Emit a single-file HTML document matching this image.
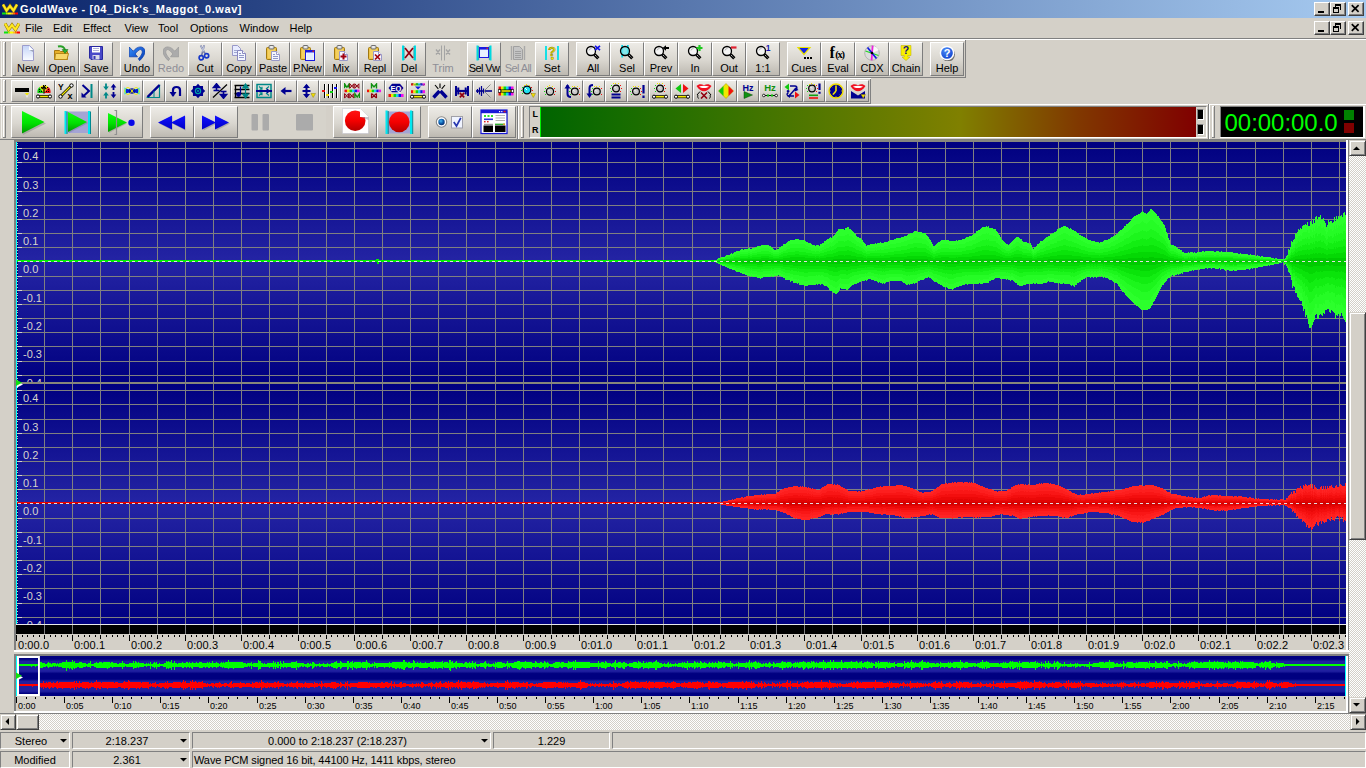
<!DOCTYPE html><html><head><meta charset="utf-8"><title>GoldWave</title><style>
html,body{margin:0;padding:0}
body{width:1366px;height:768px;overflow:hidden;position:relative;background:#D4D0C8;font-family:"Liberation Sans",sans-serif;font-size:11px;color:#000}
div,svg{position:absolute;box-sizing:border-box}
.t{white-space:nowrap;line-height:12px}
.btn{background:linear-gradient(#EDEBE6,#D9D6CF 55%,#BDB9B1);border:1px solid;border-color:#fff #7C7C7C #7C7C7C #fff}
.lbl{text-align:center;line-height:12px;white-space:nowrap}
.sunk{border:1px solid;border-color:#808080 #fff #fff #808080}
.cap{background:#D4D0C8;border:1px solid;border-color:#fff #404040 #404040 #fff;box-shadow:inset -1px -1px 0 #808080}
.sb{background:#D4D0C8;border:1px solid;border-color:#D4D0C8 #404040 #404040 #D4D0C8;box-shadow:inset 1px 1px 0 #fff,inset -1px -1px 0 #808080}
.trk{background-color:#EAE7E3;background-image:conic-gradient(#fff 25%,#D4D0C8 0 50%,#fff 0 75%,#D4D0C8 0);background-size:2px 2px}
.ax{color:#D8D4CC;font-size:11px;line-height:12px;white-space:nowrap}
.rl{font-size:11px;line-height:12px;white-space:nowrap}
.rs{font-size:9px;line-height:10px;white-space:nowrap}
</style></head><body><div style="left:0px;top:0px;width:1366px;height:18px;background:linear-gradient(90deg,#0A246A,#A6CAF0);"></div>
<svg style="left:2px;top:3px;" width="16" height="12" viewBox="0 0 16 12"><path d="M1 1.5L4.5 7.6L8 3L11.5 7.6L15 1.5" fill="none" stroke="#987800" stroke-width="3.2" stroke-linejoin="miter"/><path d="M1 1.5L4.5 7.6L8 3L11.5 7.6L15 1.5" fill="none" stroke="#FFE820" stroke-width="2.2" stroke-linejoin="miter"/><rect x="0" y="9.5" width="4" height="2" fill="#10E010"/><rect x="4" y="9.5" width="2" height="2" fill="#B0F000"/><rect x="6" y="9.5" width="3" height="2" fill="#FFFF00"/><rect x="9" y="9.5" width="2" height="2" fill="#FFC020"/><rect x="11" y="9.5" width="2" height="2" fill="#FF7000"/><rect x="13" y="9.5" width="3" height="2" fill="#FF0000"/></svg>
<div class="t " style="left:20px;top:3px;color:#fff;font-weight:bold;font-size:11px;letter-spacing:0.57px">GoldWave - [04_Dick's_Maggot_0.wav]</div>
<div class="cap" style="left:1314px;top:2px;width:16px;height:14px"></div>
<div style="left:1318px;top:11px;width:6px;height:2px;background:#000;"></div>
<div class="cap" style="left:1330px;top:2px;width:16px;height:14px"></div>
<svg style="left:1333px;top:4px;shape-rendering:crispEdges" width="10" height="10" viewBox="0 0 10 10"><path d="M2.5 0H9V6H7M2.5 0V2.5" fill="none" stroke="#000" stroke-width="0" /><rect x="2" y="0" width="6" height="2" fill="#000"/><path d="M2.5 2V3.5M7.5 1V5.5H6.5" stroke="#000" fill="none"/><rect x="0" y="3" width="6" height="2" fill="#000"/><rect x="0.5" y="4.5" width="5" height="4" fill="none" stroke="#000"/></svg>
<div class="cap" style="left:1348px;top:2px;width:16px;height:14px"></div>
<svg style="left:1351px;top:4px;" width="10" height="10" viewBox="0 0 10 10"><path d="M0.8 1.2L7.6 7.8M7.6 1.2L0.8 7.8" stroke="#000" stroke-width="1.7"/></svg>
<svg style="left:4px;top:22px;" width="16" height="12" viewBox="0 0 16 12"><path d="M1 1.5L4.5 7.6L8 3L11.5 7.6L15 1.5" fill="none" stroke="#987800" stroke-width="3.2" stroke-linejoin="miter"/><path d="M1 1.5L4.5 7.6L8 3L11.5 7.6L15 1.5" fill="none" stroke="#FFE820" stroke-width="2.2" stroke-linejoin="miter"/><rect x="0" y="9.5" width="4" height="2" fill="#10E010"/><rect x="4" y="9.5" width="2" height="2" fill="#B0F000"/><rect x="6" y="9.5" width="3" height="2" fill="#FFFF00"/><rect x="9" y="9.5" width="2" height="2" fill="#FFC020"/><rect x="11" y="9.5" width="2" height="2" fill="#FF7000"/><rect x="13" y="9.5" width="3" height="2" fill="#FF0000"/></svg>
<div class="t " style="left:25px;top:22px;line-height:12px">File</div>
<div class="t " style="left:53px;top:22px;line-height:12px">Edit</div>
<div class="t " style="left:83px;top:22px;line-height:12px">Effect</div>
<div class="t " style="left:124.5px;top:22px;line-height:12px">View</div>
<div class="t " style="left:158px;top:22px;line-height:12px">Tool</div>
<div class="t " style="left:190px;top:22px;line-height:12px">Options</div>
<div class="t " style="left:239.5px;top:22px;line-height:12px">Window</div>
<div class="t " style="left:289.5px;top:22px;line-height:12px">Help</div>
<div class="cap" style="left:1314px;top:21px;width:16px;height:14px"></div>
<div style="left:1318px;top:30px;width:6px;height:2px;background:#000;"></div>
<div class="cap" style="left:1330px;top:21px;width:16px;height:14px"></div>
<svg style="left:1333px;top:23px;shape-rendering:crispEdges" width="10" height="10" viewBox="0 0 10 10"><path d="M2.5 0H9V6H7M2.5 0V2.5" fill="none" stroke="#000" stroke-width="0" /><rect x="2" y="0" width="6" height="2" fill="#000"/><path d="M2.5 2V3.5M7.5 1V5.5H6.5" stroke="#000" fill="none"/><rect x="0" y="3" width="6" height="2" fill="#000"/><rect x="0.5" y="4.5" width="5" height="4" fill="none" stroke="#000"/></svg>
<div class="cap" style="left:1348px;top:21px;width:16px;height:14px"></div>
<svg style="left:1351px;top:23px;" width="10" height="10" viewBox="0 0 10 10"><path d="M0.8 1.2L7.6 7.8M7.6 1.2L0.8 7.8" stroke="#000" stroke-width="1.7"/></svg>
<div style="left:0px;top:38px;width:1366px;height:1px;background:#808080;"></div>
<div style="left:0px;top:39px;width:1366px;height:1px;background:#fff;"></div>
<div style="left:0px;top:40px;width:965px;height:1px;background:#fff;"></div>
<div style="left:1px;top:40px;width:1px;height:37px;background:#F4F2EE;"></div>
<div style="left:1px;top:79px;width:1px;height:24px;background:#F4F2EE;"></div>
<div style="left:1px;top:105px;width:1px;height:33px;background:#F4F2EE;"></div>
<div style="left:965px;top:40px;width:1px;height:38px;background:#808080;"></div>
<div style="left:0px;top:77px;width:966px;height:1px;background:#808080;"></div>
<div style="left:3px;top:42px;width:1px;height:34px;background:#fff;"></div>
<div style="left:5px;top:42px;width:1px;height:34px;background:#808080;"></div>
<div style="left:3px;top:42px;width:2px;height:1px;background:#fff;"></div>
<div style="left:3px;top:75px;width:3px;height:1px;background:#808080;"></div>
<div class="btn" style="left:11px;top:42px;width:34px;height:34px"></div>
<svg style="left:20px;top:45px;" width="16" height="16" viewBox="0 0 16 16"><defs><linearGradient id="gn" x1="0" y1="0" x2="0" y2="1"><stop offset="0" stop-color="#C4D4F8"/><stop offset="1" stop-color="#FAFCFF"/></linearGradient></defs><path d="M2.5 0.5H9.5L13.5 4.5V15.5H2.5Z" fill="url(#gn)" stroke="#9C9CCC"/><path d="M9 1V5H13Z" fill="#fff"/><path d="M9.5 5H13V7Z" fill="#8890A0" opacity=".7"/></svg>
<div class="lbl" style="left:8px;top:62px;width:40px;color:#000;">New</div>
<div class="btn" style="left:45px;top:42px;width:34px;height:34px"></div>
<svg style="left:54px;top:45px;" width="16" height="16" viewBox="0 0 16 16"><path d="M0.5 5.5H5.5L6.5 6.5H13.5V14.5H0.5Z" fill="#E8B028" stroke="#A87810"/><path d="M1.5 8.5H14.5L13 14.5H0.8Z" fill="#F8D868" stroke="#B88818"/><path d="M4 1.5C8 0.5 10.5 2 11 5.2" fill="none" stroke="#28A028" stroke-width="2"/><path d="M8.2 4.6H14L11 8.4Z" fill="#30B030" stroke="#187818" stroke-width=".6"/></svg>
<div class="lbl" style="left:42px;top:62px;width:40px;color:#000;">Open</div>
<div class="btn" style="left:79px;top:42px;width:34px;height:34px"></div>
<svg style="left:88px;top:45px;" width="16" height="16" viewBox="0 0 16 16"><path d="M1.5 1.5H14.5V14.5H3L1.5 13Z" fill="#4848C8" stroke="#2828A0"/><rect x="4" y="2" width="8" height="5.5" fill="#fff"/><path d="M5 3.5H11M5 5.5H11" stroke="#B0B0D8"/><rect x="4.5" y="10" width="7" height="4.5" fill="#D8D8E8"/><rect x="5.5" y="11" width="2" height="3" fill="#3838B0"/></svg>
<div class="lbl" style="left:76px;top:62px;width:40px;color:#000;">Save</div>
<div class="btn" style="left:120px;top:42px;width:34px;height:34px"></div>
<svg style="left:129px;top:45px;" width="16" height="16" viewBox="0 0 16 16"><defs><linearGradient id="gu" x1="0" y1="0" x2="1" y2="1"><stop offset="0" stop-color="#3890F8"/><stop offset=".5" stop-color="#1860D8"/><stop offset="1" stop-color="#0840B0"/></linearGradient></defs><path d="M0.3 2L0.3 11.8L8.5 11.8L6.2 9C8 6.5 10 4.4 11.6 4.6C13.4 4.9 13.6 7 12.8 9C12 11 10.5 12.5 9.3 13.8L10.6 15.7C13 13.5 15.5 10.5 16 7C16.4 3.5 13.5 1.8 11.3 1.9C8.5 2 6 4 4.2 6.2Z" fill="url(#gu)" stroke="#0838A8" stroke-width=".7"/></svg>
<div class="lbl" style="left:117px;top:62px;width:40px;color:#000;">Undo</div>
<div style="left:154px;top:42px;width:34px;height:34px;background:#D6D3CB"></div>
<svg style="left:163px;top:45px;" width="16" height="16" viewBox="0 0 16 16"><g transform="translate(16 0) scale(-1 1)"><path d="M0.3 2L0.3 11.8L8.5 11.8L6.2 9C8 6.5 10 4.4 11.6 4.6C13.4 4.9 13.6 7 12.8 9C12 11 10.5 12.5 9.3 13.8L10.6 15.7C13 13.5 15.5 10.5 16 7C16.4 3.5 13.5 1.8 11.3 1.9C8.5 2 6 4 4.2 6.2Z" fill="#ABABAB" stroke="#989898" stroke-width=".7"/></g></svg>
<div class="lbl" style="left:151px;top:62px;width:40px;color:#8E8E96;">Redo</div>
<div class="btn" style="left:188px;top:42px;width:34px;height:34px"></div>
<svg style="left:197px;top:45px;" width="16" height="16" viewBox="0 0 16 16"><path d="M3.6 0.5L8.4 9.2M7.2 0.3L4.6 10.6" stroke="#7880A8" stroke-width="1.7" fill="none"/><path d="M3.9 1L7 6.6M7 0.8L5.6 6.6" stroke="#E0E4F4" stroke-width=".7" fill="none"/><circle cx="4.2" cy="12.8" r="2.1" fill="none" stroke="#1838C8" stroke-width="1.7"/><circle cx="9.6" cy="10.8" r="2.1" fill="none" stroke="#1838C8" stroke-width="1.7"/></svg>
<div class="lbl" style="left:185px;top:62px;width:40px;color:#000;">Cut</div>
<div class="btn" style="left:222px;top:42px;width:34px;height:34px"></div>
<svg style="left:231px;top:45px;" width="16" height="16" viewBox="0 0 16 16"><path d="M1.5 0.5H6.5L9.5 3.5V10.5H1.5Z" fill="#E8ECFF" stroke="#9898C8"/><path d="M3 5.5H8M3 7.5H8" stroke="#A0A8D0"/><path d="M6.5 5.5H11.5L14.5 8.5V15.5H6.5Z" fill="#F4F6FF" stroke="#8888C0"/><path d="M11.5 5.5V8.5H14.5" fill="#fff" stroke="#8888C0"/><path d="M8 10.5H13M8 12.5H13M8 8.5H10" stroke="#9098C8"/></svg>
<div class="lbl" style="left:219px;top:62px;width:40px;color:#000;">Copy</div>
<div class="btn" style="left:256px;top:42px;width:34px;height:34px"></div>
<svg style="left:265px;top:45px;" width="16" height="16" viewBox="0 0 16 16"><rect x="1.5" y="2.5" width="10" height="12" rx="1" fill="#E8B830" stroke="#A07810"/><rect x="2.5" y="3.5" width="8" height="10" fill="#F4D060"/><rect x="4" y="0.5" width="5" height="3.5" rx="1" fill="#D8D8D8" stroke="#707070"/><rect x="5.5" y="1.5" width="2" height="1" fill="#fff"/><path d="M6.5 6.5H11.5L14.5 9.5V15.5H6.5Z" fill="#F4F6FF" stroke="#9898C8"/><path d="M11.5 6.5V9.5H14.5" fill="#fff" stroke="#9898C8"/><path d="M8 11.5H13M8 13.5H13M8 9.5H10" stroke="#9098C8"/></svg>
<div class="lbl" style="left:253px;top:62px;width:40px;color:#000;">Paste</div>
<div class="btn" style="left:290px;top:42px;width:34px;height:34px"></div>
<svg style="left:299px;top:45px;" width="16" height="16" viewBox="0 0 16 16"><rect x="1.5" y="2.5" width="10" height="12" rx="1" fill="#E8B830" stroke="#A07810"/><rect x="2.5" y="3.5" width="8" height="10" fill="#F4D060"/><rect x="4" y="0.5" width="5" height="3.5" rx="1" fill="#D8D8D8" stroke="#707070"/><rect x="5.5" y="1.5" width="2" height="1" fill="#fff"/><rect x="6.5" y="5.5" width="9" height="10" fill="#fff" stroke="#1818E0"/><rect x="6" y="5" width="10" height="2.5" fill="#1818E0"/><rect x="13.5" y="5.5" width="1.5" height="1.5" fill="#E02020"/><rect x="7.5" y="8" width="7" height="7" fill="#E4ECFF"/></svg>
<div class="lbl" style="left:287px;top:62px;width:40px;color:#000;letter-spacing:-0.6px;">P.New</div>
<div class="btn" style="left:324px;top:42px;width:34px;height:34px"></div>
<svg style="left:333px;top:45px;" width="16" height="16" viewBox="0 0 16 16"><rect x="1.5" y="2.5" width="10" height="12" rx="1" fill="#E8B830" stroke="#A07810"/><rect x="2.5" y="3.5" width="8" height="10" fill="#F4D060"/><rect x="4" y="0.5" width="5" height="3.5" rx="1" fill="#D8D8D8" stroke="#707070"/><rect x="5.5" y="1.5" width="2" height="1" fill="#fff"/><path d="M6.5 6.5H11.5L14.5 9.5V15.5H6.5Z" fill="#F4F6FF" stroke="#9898C8"/><path d="M11.5 6.5V9.5H14.5" fill="#fff" stroke="#9898C8"/><path d="M10.5 8.5V14.5M7.5 11.5H13.5" stroke="#A00010" stroke-width="2"/></svg>
<div class="lbl" style="left:321px;top:62px;width:40px;color:#000;">Mix</div>
<div class="btn" style="left:358px;top:42px;width:34px;height:34px"></div>
<svg style="left:367px;top:45px;" width="16" height="16" viewBox="0 0 16 16"><rect x="1.5" y="2.5" width="10" height="12" rx="1" fill="#E8B830" stroke="#A07810"/><rect x="2.5" y="3.5" width="8" height="10" fill="#F4D060"/><rect x="4" y="0.5" width="5" height="3.5" rx="1" fill="#D8D8D8" stroke="#707070"/><rect x="5.5" y="1.5" width="2" height="1" fill="#fff"/><path d="M6.5 6.5H11.5L14.5 9.5V15.5H6.5Z" fill="#F4F6FF" stroke="#9898C8"/><path d="M11.5 6.5V9.5H14.5" fill="#fff" stroke="#9898C8"/><path d="M8 9.5L13 14.5M13 9.5L8 14.5" stroke="#A00010" stroke-width="1.7"/></svg>
<div class="lbl" style="left:355px;top:62px;width:40px;color:#000;">Repl</div>
<div class="btn" style="left:392px;top:42px;width:34px;height:34px"></div>
<svg style="left:401px;top:45px;" width="16" height="16" viewBox="0 0 16 16"><path d="M2 0.5V15.5M14 0.5V15.5" stroke="#00E0E8" stroke-width="2"/><path d="M3.2 1V15M12.8 1V15" stroke="#008890" stroke-width=".6"/><path d="M4 3L12 13M12 3L4 13" stroke="#900010" stroke-width="1.7"/></svg>
<div class="lbl" style="left:389px;top:62px;width:40px;color:#000;">Del</div>
<div style="left:426px;top:42px;width:34px;height:34px;background:#D6D3CB"></div>
<svg style="left:435px;top:45px;" width="16" height="16" viewBox="0 0 16 16"><path d="M6.5 0.5V15.5M9.5 0.5V15.5" stroke="#A4A4A4" stroke-width="1"/><path d="M1 4.5L5 9.5M5 4.5L1 9.5M11 4.5L15 9.5M15 4.5L11 9.5" stroke="#A4A4A4" stroke-width="1.3"/></svg>
<div class="lbl" style="left:423px;top:62px;width:40px;color:#8E8E96;">Trim</div>
<div class="btn" style="left:467px;top:42px;width:34px;height:34px"></div>
<svg style="left:476px;top:45px;" width="16" height="16" viewBox="0 0 16 16"><path d="M1.5 0.5V15.5M14.5 0.5V15.5" stroke="#00D8E0" stroke-width="2"/><path d="M2.7 1V15M13.3 1V15" stroke="#008088" stroke-width=".6"/><rect x="3.5" y="2.5" width="9" height="10" fill="#E8F0FF" stroke="#1818E0"/><rect x="3" y="2" width="10" height="2.6" fill="#1818E0"/><rect x="10.5" y="2.6" width="1.5" height="1.4" fill="#E02020"/></svg>
<div class="lbl" style="left:464px;top:62px;width:40px;color:#000;letter-spacing:-0.6px;">Sel Vw</div>
<div style="left:501px;top:42px;width:34px;height:34px;background:#D6D3CB"></div>
<svg style="left:510px;top:45px;" width="16" height="16" viewBox="0 0 16 16"><path d="M1.5 1V15M14.5 1V15" stroke="#A8A8A8" stroke-width="1.4"/><path d="M3.5 1.5H9.5L12.5 4.5V14.5H3.5Z" fill="#C4C4C4" stroke="#A0A0A0"/><path d="M5 6.5H11M5 8.5H11M5 10.5H11M5 12.5H11" stroke="#A0A0A0"/></svg>
<div class="lbl" style="left:498px;top:62px;width:40px;color:#8E8E96;letter-spacing:-0.6px;">Sel All</div>
<div class="btn" style="left:535px;top:42px;width:34px;height:34px"></div>
<svg style="left:544px;top:45px;" width="16" height="16" viewBox="0 0 16 16"><path d="M2 1V15M14 1V15" stroke="#00E0E8" stroke-width="1.8"/><text x="8" y="11" font-family="Liberation Sans" font-weight="bold" font-size="13" text-anchor="middle" fill="#F0E800" stroke="#807800" stroke-width=".5">?</text><rect x="7" y="12.3" width="2.2" height="2.2" fill="#F0E800" stroke="#807800" stroke-width=".4"/></svg>
<div class="lbl" style="left:532px;top:62px;width:40px;color:#000;">Set</div>
<div class="btn" style="left:576px;top:42px;width:34px;height:34px"></div>
<svg style="left:585px;top:45px;" width="16" height="16" viewBox="0 0 16 16"><circle cx="6" cy="6" r="4.5" fill="#F4F4F4" stroke="#000" stroke-width="1.3"/><path d="M4 5.5A2.5 2.5 0 0 1 6.5 3.5" stroke="#B8B8B8" fill="none"/><path d="M9.3 9.3L13.3 13.3" stroke="#000" stroke-width="3.2"/><path d="M10.2 10.2L12.8 12.8" stroke="#fff" stroke-width="1" stroke-dasharray="1 1"/><path d="M10 0.8L15 5.2M15 0.8L10 5.2" stroke="#1010E8" stroke-width="1.7"/></svg>
<div class="lbl" style="left:573px;top:62px;width:40px;color:#000;">All</div>
<div class="btn" style="left:610px;top:42px;width:34px;height:34px"></div>
<svg style="left:619px;top:45px;" width="16" height="16" viewBox="0 0 16 16"><path d="M3.2 0V12.5M8.8 0V10.5" stroke="#00D8E8" stroke-width="1.8"/><circle cx="6" cy="6" r="4" fill="#70E8F0" opacity=".8"/><circle cx="6" cy="6" r="4.5" fill="none" stroke="#000" stroke-width="1.3"/><path d="M9.3 9.3L13.3 13.3" stroke="#000" stroke-width="3.2"/><path d="M10.2 10.2L12.8 12.8" stroke="#fff" stroke-width="1" stroke-dasharray="1 1"/></svg>
<div class="lbl" style="left:607px;top:62px;width:40px;color:#000;">Sel</div>
<div class="btn" style="left:644px;top:42px;width:34px;height:34px"></div>
<svg style="left:653px;top:45px;" width="16" height="16" viewBox="0 0 16 16"><circle cx="6" cy="6" r="4.5" fill="#F4F4F4" stroke="#000" stroke-width="1.3"/><path d="M4 5.5A2.5 2.5 0 0 1 6.5 3.5" stroke="#B8B8B8" fill="none"/><path d="M9.3 9.3L13.3 13.3" stroke="#000" stroke-width="3.2"/><path d="M10.2 10.2L12.8 12.8" stroke="#fff" stroke-width="1" stroke-dasharray="1 1"/><path d="M9.5 3L13 0.3V2H16V4H13V5.7Z" fill="#000"/></svg>
<div class="lbl" style="left:641px;top:62px;width:40px;color:#000;">Prev</div>
<div class="btn" style="left:678px;top:42px;width:34px;height:34px"></div>
<svg style="left:687px;top:45px;" width="16" height="16" viewBox="0 0 16 16"><circle cx="6" cy="6" r="4.5" fill="#F4F4F4" stroke="#000" stroke-width="1.3"/><path d="M4 5.5A2.5 2.5 0 0 1 6.5 3.5" stroke="#B8B8B8" fill="none"/><path d="M9.3 9.3L13.3 13.3" stroke="#000" stroke-width="3.2"/><path d="M10.2 10.2L12.8 12.8" stroke="#fff" stroke-width="1" stroke-dasharray="1 1"/><path d="M12.5 0V6M9.5 3H15.5" stroke="#20C820" stroke-width="2.2"/></svg>
<div class="lbl" style="left:675px;top:62px;width:40px;color:#000;">In</div>
<div class="btn" style="left:712px;top:42px;width:34px;height:34px"></div>
<svg style="left:721px;top:45px;" width="16" height="16" viewBox="0 0 16 16"><circle cx="6" cy="6" r="4.5" fill="#F4F4F4" stroke="#000" stroke-width="1.3"/><path d="M4 5.5A2.5 2.5 0 0 1 6.5 3.5" stroke="#B8B8B8" fill="none"/><path d="M9.3 9.3L13.3 13.3" stroke="#000" stroke-width="3.2"/><path d="M10.2 10.2L12.8 12.8" stroke="#fff" stroke-width="1" stroke-dasharray="1 1"/><path d="M10 2.5H15.5" stroke="#E02030" stroke-width="2.2"/></svg>
<div class="lbl" style="left:709px;top:62px;width:40px;color:#000;">Out</div>
<div class="btn" style="left:746px;top:42px;width:34px;height:34px"></div>
<svg style="left:755px;top:45px;" width="16" height="16" viewBox="0 0 16 16"><circle cx="6" cy="6" r="4.5" fill="#F4F4F4" stroke="#000" stroke-width="1.3"/><path d="M4 5.5A2.5 2.5 0 0 1 6.5 3.5" stroke="#B8B8B8" fill="none"/><path d="M9.3 9.3L13.3 13.3" stroke="#000" stroke-width="3.2"/><path d="M10.2 10.2L12.8 12.8" stroke="#fff" stroke-width="1" stroke-dasharray="1 1"/><text x="13" y="6" font-family="Liberation Sans" font-weight="bold" font-size="8.5" text-anchor="middle" fill="#1818B0">1</text></svg>
<div class="lbl" style="left:743px;top:62px;width:40px;color:#000;">1:1</div>
<div class="btn" style="left:787px;top:42px;width:34px;height:34px"></div>
<svg style="left:796px;top:45px;" width="16" height="16" viewBox="0 0 16 16"><path d="M2 2.5H14L8 9.5Z" fill="#1020E8" stroke="#E8E000" stroke-width="1.2"/><rect x="8" y="12" width="2" height="2" fill="#000"/><rect x="11" y="12" width="2" height="2" fill="#000"/><rect x="14" y="12" width="2" height="2" fill="#000"/></svg>
<div class="lbl" style="left:784px;top:62px;width:40px;color:#000;">Cues</div>
<div class="btn" style="left:821px;top:42px;width:34px;height:34px"></div>
<svg style="left:830px;top:45px;" width="16" height="16" viewBox="0 0 16 16"><text x="-0.5" y="13" font-family="Liberation Serif" font-weight="bold" font-size="16" fill="#000">f</text><text x="5.2" y="12.5" font-family="Liberation Serif" font-weight="bold" font-size="10.5" fill="#000" letter-spacing="-1.2">(x)</text></svg>
<div class="lbl" style="left:818px;top:62px;width:40px;color:#000;">Eval</div>
<div class="btn" style="left:855px;top:42px;width:34px;height:34px"></div>
<svg style="left:864px;top:45px;" width="16" height="16" viewBox="0 0 16 16"><circle cx="8" cy="8" r="7.3" fill="#DCDCDC" stroke="#A8A8A8" stroke-width=".8"/><path d="M8 8L15 5A7.3 7.3 0 0 0 10 1Z" fill="#fff" opacity=".8"/><path d="M1.5 6L14.5 10.5" stroke="#20D820" stroke-width="1.3"/><path d="M8.6 0.6L7.6 15.4" stroke="#F020E0" stroke-width="1.7"/><path d="M3.5 2.5L12.5 13.5" stroke="#1018E0" stroke-width="1.7"/><circle cx="8" cy="8" r="1.3" fill="#000"/></svg>
<div class="lbl" style="left:852px;top:62px;width:40px;color:#000;">CDX</div>
<div class="btn" style="left:889px;top:42px;width:34px;height:34px"></div>
<svg style="left:898px;top:45px;" width="16" height="16" viewBox="0 0 16 16"><path d="M3 0.5H13V10.5H9.8V12H12L8 15.6L4 12H6.2V10.5H3Z" fill="#F8F000" stroke="#B8A800" stroke-width=".5"/><text x="8" y="9.2" font-family="Liberation Sans" font-weight="bold" font-size="10.5" text-anchor="middle" fill="#101080">?</text></svg>
<div class="lbl" style="left:886px;top:62px;width:40px;color:#000;">Chain</div>
<div class="btn" style="left:930px;top:42px;width:34px;height:34px"></div>
<svg style="left:939px;top:45px;" width="16" height="16" viewBox="0 0 16 16"><defs><radialGradient id="gh" cx=".4" cy=".3" r=".8"><stop offset="0" stop-color="#4C8CF8"/><stop offset="1" stop-color="#0838C8"/></radialGradient></defs><circle cx="9.2" cy="9.6" r="6.8" fill="#505050" opacity=".75"/><circle cx="8" cy="8" r="6.6" fill="url(#gh)" stroke="#fff" stroke-width="1.5"/><text x="8" y="12" font-family="Liberation Sans" font-weight="bold" font-size="11" text-anchor="middle" fill="#fff">?</text></svg>
<div class="lbl" style="left:927px;top:62px;width:40px;color:#000;">Help</div>
<div style="left:0px;top:78px;width:871px;height:1px;background:#fff;"></div>
<div style="left:870px;top:79px;width:1px;height:25px;background:#808080;"></div>
<div style="left:0px;top:103px;width:871px;height:1px;background:#808080;"></div>
<div style="left:3px;top:80px;width:1px;height:22px;background:#fff;"></div>
<div style="left:5px;top:80px;width:1px;height:22px;background:#808080;"></div>
<div style="left:3px;top:80px;width:2px;height:1px;background:#fff;"></div>
<div style="left:3px;top:101px;width:3px;height:1px;background:#808080;"></div>
<div class="btn" style="left:11px;top:80px;width:22px;height:22px"></div>
<svg style="left:14px;top:83px;" width="16" height="16" viewBox="0 0 16 16"><rect x="1" y="5" width="14" height="4" fill="#000"/><path d="M11.5 12.2L13 15L14.5 12.2Z" fill="#E8E8E8"/><path d="M10.8 10H15.2L13 12.6Z" fill="#F4E800"/></svg>
<div class="btn" style="left:33px;top:80px;width:22px;height:22px"></div>
<svg style="left:36px;top:83px;" width="16" height="16" viewBox="0 0 16 16"><path d="M1.5 10A6.5 6.5 0 0 1 3.6 4L8 10Z" fill="#10D010"/><path d="M3.6 4A6.5 6.5 0 0 1 12.4 4L8 10Z" fill="#F4EC00"/><path d="M12.4 4A6.5 6.5 0 0 1 14.5 10L8 10Z" fill="#F01010"/><g fill="#000" shape-rendering="crispEdges"><rect x="3" y="6" width="1" height="1"/><rect x="3" y="8" width="1" height="1"/><rect x="5" y="4" width="1" height="1"/><rect x="7" y="2" width="1" height="1"/><rect x="9" y="2" width="1" height="1"/><rect x="11" y="4" width="1" height="1"/><rect x="12" y="6" width="1" height="1"/><rect x="12" y="8" width="1" height="1"/><rect x="5" y="8" width="1" height="1"/><rect x="10" y="8" width="1" height="1"/></g><path d="M8 10.5V3.5M5.8 6L8 3.2L10.2 6" stroke="#000" stroke-width="1.3" fill="none"/><path d="M2.5 13.5H13.5" stroke="#000" stroke-width="3"/><path d="M2.5 13.5H13.5" stroke="#F4EC00" stroke-width="1.6"/><circle cx="2" cy="13.5" r="1.6" fill="#fff" stroke="#000"/><circle cx="14" cy="13.5" r="1.6" fill="#fff" stroke="#000"/></svg>
<div class="btn" style="left:55px;top:80px;width:22px;height:22px"></div>
<svg style="left:58px;top:83px;" width="16" height="16" viewBox="0 0 16 16"><path d="M2.5 13.5L13.5 2.5" stroke="#000" stroke-width="2.6"/><path d="M2.5 13.5L13.5 2.5" stroke="#F4EC00" stroke-width="1.2"/><circle cx="2.5" cy="13.5" r="1.7" fill="#fff" stroke="#000"/><circle cx="13.5" cy="2.5" r="1.7" fill="#fff" stroke="#000"/><text x="0" y="7" font-family="Liberation Sans" font-weight="bold" font-size="8.5" fill="#000">Y</text><text x="9.5" y="15.5" font-family="Liberation Sans" font-weight="bold" font-size="9" fill="#000">x</text></svg>
<div class="btn" style="left:77px;top:80px;width:22px;height:22px"></div>
<svg style="left:80px;top:83px;" width="16" height="16" viewBox="0 0 16 16"><path d="M2.5 2L9 8L3 13.5" stroke="#000090" stroke-width="2" fill="none"/><path d="M1.5 9.5V14.5H6.5Z" fill="#000090"/><path d="M11.5 1V15" stroke="#008888" stroke-width="2"/></svg>
<div class="btn" style="left:99px;top:80px;width:22px;height:22px"></div>
<svg style="left:102px;top:83px;" width="16" height="16" viewBox="0 0 16 16"><path d="M4 0.5V4M4 15.5V12" stroke="#008888" stroke-width="1.8"/><path d="M1.2 3.6H6.8L4 7.2ZM1.2 12.4H6.8L4 8.8Z" fill="#008888"/><path d="M11.5 4V7M11.5 12V9" stroke="#000090" stroke-width="1.8"/><path d="M8.7 4.4H14.3L11.5 0.8ZM8.7 11.6H14.3L11.5 15.2Z" fill="#000090"/></svg>
<div class="btn" style="left:121px;top:80px;width:22px;height:22px"></div>
<svg style="left:124px;top:83px;" width="16" height="16" viewBox="0 0 16 16"><path d="M0.5 4.5L8 8L0.5 11.5ZM15.5 4.5L8 8L15.5 11.5Z" fill="#00E0F0"/><path d="M2 5.5L8 8L2 10.5ZM14 5.5L8 8L14 10.5Z" fill="#0818D8"/><ellipse cx="8" cy="8" rx="3.6" ry="2.8" fill="#0010B0"/><path d="M0.5 8C2.5 3.2 5 3.6 8 8S13.5 12.8 15.5 8M0.5 8C2.5 12.8 5 12.4 8 8S13.5 3.2 15.5 8" stroke="#F0E800" stroke-width="1" fill="none"/></svg>
<div class="btn" style="left:143px;top:80px;width:22px;height:22px"></div>
<svg style="left:146px;top:83px;" width="16" height="16" viewBox="0 0 16 16"><path d="M1.5 14.5H13.5V2.5Z" fill="none" stroke="#008888" stroke-width="1.2"/><path d="M1.5 14L13.5 2" stroke="#000090" stroke-width="2.4"/><path d="M8 14.5V8" stroke="#008888" stroke-width="1"/></svg>
<div class="btn" style="left:165px;top:80px;width:22px;height:22px"></div>
<svg style="left:168px;top:83px;" width="16" height="16" viewBox="0 0 16 16"><path d="M5 13V7C5 3 12 3 12 7V13" stroke="#000090" stroke-width="2.2" fill="none"/><path d="M1.5 9H8.5L5 14Z" fill="#000090"/></svg>
<div class="btn" style="left:187px;top:80px;width:22px;height:22px"></div>
<svg style="left:190px;top:83px;" width="16" height="16" viewBox="0 0 16 16"><path d="M8 0.8L10 3L13 2.9L13.1 5.9L15.2 8L13.1 10.1L13 13.1L10 13L8 15.2L6 13L3 13.1L2.9 10.1L0.8 8L2.9 5.9L3 2.9L6 3Z" fill="#000090"/><circle cx="8" cy="8" r="2.6" fill="none" stroke="#00A0A8" stroke-width="1.2"/><circle cx="8" cy="8" r="1" fill="#00A0A8"/></svg>
<div class="btn" style="left:209px;top:80px;width:22px;height:22px"></div>
<svg style="left:212px;top:83px;" width="16" height="16" viewBox="0 0 16 16"><path d="M1 14.5L15 1.5" stroke="#000" stroke-width="1.2"/><path d="M4.5 8V3M1.5 4.5H7.5L4.5 0.8Z" stroke="#000090" stroke-width="1.6" fill="#000090"/><path d="M1.5 7.5H7.5" stroke="#000090" stroke-width="1.6"/><path d="M11.5 8V13M8.5 11.5H14.5L11.5 15.2Z" stroke="#000090" stroke-width="1.6" fill="#000090"/><path d="M8.5 8.5H14.5" stroke="#000090" stroke-width="1.6"/></svg>
<div class="btn" style="left:231px;top:80px;width:22px;height:22px"></div>
<svg style="left:234px;top:83px;" width="16" height="16" viewBox="0 0 16 16"><path d="M0.5 2.5H15.5M0.5 6.5H15.5M0.5 10.5H15.5M0.5 14.5H15.5M1.5 2V15" stroke="#000" stroke-width="1.3"/><circle cx="4.5" cy="11.5" r="2.4" fill="#000090"/><path d="M6.5 11.5V3.5" stroke="#000090" stroke-width="1.3"/><path d="M11.5 3V13M8.8 5H14.2L11.5 1ZM8.8 11H14.2L11.5 15Z" stroke="#008888" stroke-width="1.2" fill="#008888"/></svg>
<div class="btn" style="left:253px;top:80px;width:22px;height:22px"></div>
<svg style="left:256px;top:83px;" width="16" height="16" viewBox="0 0 16 16"><rect x="1" y="1.5" width="14" height="13" fill="none" stroke="#008888" stroke-width="1.5"/><path d="M0 8H16" stroke="#000090" stroke-width="2"/><path d="M10.5 5L14.5 8L10.5 11Z" fill="#000090"/><path d="M3 3.5L6 6M6 3.8V6.2H3.6M13 3.5L10 6M3 12.5L6 10M6 12.2V9.8H3.6M13 12.5L10 10" stroke="#008888" stroke-width="1.1" fill="none"/></svg>
<div class="btn" style="left:275px;top:80px;width:22px;height:22px"></div>
<svg style="left:278px;top:83px;" width="16" height="16" viewBox="0 0 16 16"><path d="M5 8H13.5" stroke="#000090" stroke-width="2.2"/><path d="M2.5 8L7.5 4V12Z" fill="#000090"/></svg>
<div class="btn" style="left:297px;top:80px;width:22px;height:22px"></div>
<svg style="left:300px;top:83px;" width="16" height="16" viewBox="0 0 16 16"><path d="M6.5 2V14M2.5 8H10.5" stroke="#000090" stroke-width="2"/><path d="M3 5H10L6.5 0.8ZM3 11H10L6.5 15.2Z" fill="#000090"/><path d="M11 10.5H15.5L13.2 14.5Z" fill="#F0E000" stroke="#807000" stroke-width=".4"/></svg>
<div class="btn" style="left:319px;top:80px;width:22px;height:22px"></div>
<svg style="left:322px;top:83px;" width="16" height="16" viewBox="0 0 16 16"><g shape-rendering="crispEdges"><rect x="2" y="1" width="1" height="14" fill="#000"/><rect x="3" y="1" width="1" height="14" fill="#fff"/><rect x="6" y="1" width="1" height="14" fill="#000"/><rect x="7" y="1" width="1" height="14" fill="#fff"/><rect x="10" y="1" width="1" height="14" fill="#000"/><rect x="11" y="1" width="1" height="14" fill="#fff"/><rect x="14" y="1" width="1" height="14" fill="#000"/><rect x="15" y="1" width="1" height="14" fill="#fff"/><rect x="0" y="7" width="3" height="2" fill="#F01010"/><rect x="4" y="11" width="3" height="2" fill="#F0E000"/><rect x="8" y="8" width="3" height="2" fill="#10D010"/><rect x="12" y="4" width="3" height="2" fill="#1010F0"/></g></svg>
<div class="btn" style="left:341px;top:80px;width:22px;height:22px"></div>
<svg style="left:344px;top:83px;" width="16" height="16" viewBox="0 0 16 16"><path d="M0.6 5.3V0.8L2.9 4.3L5.2 0.8V5.3" stroke="#109010" stroke-width="1.3" fill="none"/><path d="M5.8 0.8V5.3M9.8 0.8V5.3M5.8 0.8L9.8 5.3M9.8 0.8L5.8 5.3" stroke="#900010" stroke-width="1" fill="none"/><path d="M10.9 0.8V5.3M14.9 0.8V5.3M10.9 0.8L14.9 5.3M14.9 0.8L10.9 5.3" stroke="#900010" stroke-width="1" fill="none"/><rect x="0.50" y="6.6" width="2.55" height="2.6" fill="#F01010"/><rect x="3.00" y="6.6" width="2.55" height="2.6" fill="#F0E800"/><rect x="5.50" y="6.6" width="2.55" height="2.6" fill="#10D810"/><rect x="8.00" y="6.6" width="2.55" height="2.6" fill="#10D8E8"/><rect x="10.50" y="6.6" width="2.55" height="2.6" fill="#1010F0"/><rect x="13.00" y="6.6" width="2.55" height="2.6" fill="#F010E8"/><path d="M0.6 10.6V15.1M4.6 10.6V15.1M0.6 10.6L4.6 15.1M4.6 10.6L0.6 15.1" stroke="#900010" stroke-width="1" fill="none"/><path d="M5.8 10.6V15.1M9.8 10.6V15.1M5.8 10.6L9.8 15.1M9.8 10.6L5.8 15.1" stroke="#900010" stroke-width="1" fill="none"/><path d="M10.9 15.1V10.6L13.2 14.1L15.5 10.6V15.1" stroke="#109010" stroke-width="1.3" fill="none"/></svg>
<div class="btn" style="left:363px;top:80px;width:22px;height:22px"></div>
<svg style="left:366px;top:83px;" width="16" height="16" viewBox="0 0 16 16"><path d="M5.5 5.5V1L8 4L10.5 1V5.5" stroke="#109010" stroke-width="1.4" fill="none"/><rect x="1.00" y="6.6" width="2.38" height="2.6" fill="#F01010"/><rect x="3.33" y="6.6" width="2.38" height="2.6" fill="#F0E800"/><rect x="5.67" y="6.6" width="2.38" height="2.6" fill="#10D810"/><rect x="8.00" y="6.6" width="2.38" height="2.6" fill="#10D8E8"/><rect x="10.33" y="6.6" width="2.38" height="2.6" fill="#1010F0"/><rect x="12.67" y="6.6" width="2.38" height="2.6" fill="#F010E8"/><path d="M5.5 10.5V15M10.5 10.5V15M5.5 10.5L10.5 15M10.5 10.5L5.5 15" stroke="#900010" stroke-width="1.1" fill="none"/></svg>
<div class="btn" style="left:385px;top:80px;width:22px;height:22px"></div>
<svg style="left:388px;top:83px;" width="16" height="16" viewBox="0 0 16 16"><path d="M0.5 5L4 0.8H12L15.5 5L12 9.2H4Z" fill="#000090"/><text x="8" y="8" font-family="Liberation Sans" font-weight="bold" font-size="7.5" text-anchor="middle" fill="#fff">EQ</text><rect x="0.50" y="11" width="2.55" height="3" fill="#F01010"/><rect x="3.00" y="11" width="2.55" height="3" fill="#F0E800"/><rect x="5.50" y="11" width="2.55" height="3" fill="#10D810"/><rect x="8.00" y="11" width="2.55" height="3" fill="#10D8E8"/><rect x="10.50" y="11" width="2.55" height="3" fill="#1010F0"/><rect x="13.00" y="11" width="2.55" height="3" fill="#F010E8"/></svg>
<div class="btn" style="left:407px;top:80px;width:22px;height:22px"></div>
<svg style="left:410px;top:83px;" width="16" height="16" viewBox="0 0 16 16"><rect x="1.00" y="0.3" width="2.38" height="2.2" fill="#F01010"/><rect x="3.33" y="0.3" width="2.38" height="2.2" fill="#F0E800"/><rect x="5.67" y="0.3" width="2.38" height="2.2" fill="#10D810"/><rect x="8.00" y="0.3" width="2.38" height="2.2" fill="#10D8E8"/><rect x="10.33" y="0.3" width="2.38" height="2.2" fill="#1010F0"/><rect x="12.67" y="0.3" width="2.38" height="2.2" fill="#F010E8"/><path d="M1 1.4L3 0.3L5 2.4L7 0.3L9 2.4L11 0.3L13 2.4L15 1" stroke="#404040" stroke-width=".5" fill="none"/><path d="M5 3.4H11L8 6.4Z" fill="#1018E0"/><rect x="1.00" y="7.2" width="2.38" height="3" fill="#F01010"/><rect x="3.33" y="7.2" width="2.38" height="3" fill="#F0E800"/><rect x="5.67" y="7.2" width="2.38" height="3" fill="#10D810"/><rect x="8.00" y="7.2" width="2.38" height="3" fill="#10D8E8"/><rect x="10.33" y="7.2" width="2.38" height="3" fill="#1010F0"/><rect x="12.67" y="7.2" width="2.38" height="3" fill="#F010E8"/><path d="M2.5 13.7H13.5" stroke="#000" stroke-width="3"/><path d="M2.5 13.7H13.5" stroke="#F4EC00" stroke-width="1.6"/><circle cx="2" cy="13.7" r="1.6" fill="#fff" stroke="#000"/><circle cx="14" cy="13.7" r="1.6" fill="#fff" stroke="#000"/></svg>
<div class="btn" style="left:429px;top:80px;width:22px;height:22px"></div>
<svg style="left:432px;top:83px;" width="16" height="16" viewBox="0 0 16 16"><path d="M1.5 14.5L7.5 8M14.5 14.5L8.5 8" stroke="#000090" stroke-width="3.4"/><path d="M8 0.5V5M3 2L6.3 5.8M13 2L9.7 5.8" stroke="#000" stroke-width="1.1"/></svg>
<div class="btn" style="left:451px;top:80px;width:22px;height:22px"></div>
<svg style="left:454px;top:83px;" width="16" height="16" viewBox="0 0 16 16"><path d="M1 8H15" stroke="#000090" stroke-width="2.2"/><path d="M2 3V13M4.3 4.5V11.5M14 3V13M11.7 4.5V11.5" stroke="#000090" stroke-width="2"/><path d="M5.8 9.8L10.2 14.4M10.2 9.8L5.8 14.4" stroke="#900010" stroke-width="1.7"/></svg>
<div class="btn" style="left:473px;top:80px;width:22px;height:22px"></div>
<svg style="left:476px;top:83px;" width="16" height="16" viewBox="0 0 16 16"><path d="M0 8H16" stroke="#000090" stroke-width="1.6"/><path d="M1.5 6V10M3.5 4.5V11.5M5.5 3V13M7.5 5.5V10.5" stroke="#000090" stroke-width="1.2"/><path d="M8 8L14.5 1.5M8 8L14.5 14.5" stroke="#888" stroke-width="1"/></svg>
<div class="btn" style="left:495px;top:80px;width:22px;height:22px"></div>
<svg style="left:498px;top:83px;" width="16" height="16" viewBox="0 0 16 16"><rect x="0.50" y="3.5" width="2.55" height="9" fill="#F01010"/><rect x="3.00" y="3.5" width="2.55" height="9" fill="#F0E800"/><rect x="5.50" y="3.5" width="2.55" height="9" fill="#10D810"/><rect x="8.00" y="3.5" width="2.55" height="9" fill="#10D8E8"/><rect x="10.50" y="3.5" width="2.55" height="9" fill="#1010F0"/><rect x="13.00" y="3.5" width="2.55" height="9" fill="#F010E8"/><path d="M2 8H14" stroke="#000" stroke-width="3"/><path d="M2 8H14" stroke="#F4EC00" stroke-width="1.6"/><circle cx="1.5" cy="8" r="1.6" fill="#fff" stroke="#000"/><circle cx="14.5" cy="8" r="1.6" fill="#fff" stroke="#000"/></svg>
<div class="btn" style="left:517px;top:80px;width:22px;height:22px"></div>
<svg style="left:520px;top:83px;" width="16" height="16" viewBox="0 0 16 16"><g shape-rendering="crispEdges"><rect x="2" y="10" width="1" height="1" fill="#10D810"/><rect x="1" y="7" width="1" height="1" fill="#10D810"/><rect x="2" y="4" width="1" height="1" fill="#10D810"/><rect x="4" y="2" width="1" height="1" fill="#F0E000"/><rect x="6" y="1" width="1" height="1" fill="#F0E000"/><rect x="9" y="2" width="1" height="1" fill="#F0E000"/><rect x="11" y="4" width="1" height="1" fill="#F01010"/><rect x="12" y="7" width="1" height="1" fill="#F01010"/><rect x="11" y="10" width="1" height="1" fill="#F01010"/></g><circle cx="7" cy="7" r="3.8" fill="#20E0F0" stroke="#000" stroke-width="1.3"/><path d="M5 5L7 7" stroke="#fff"/><path d="M11 10.5H15.5L13.3 14.5Z" fill="#F0E000" stroke="#807000" stroke-width=".4"/></svg>
<div class="btn" style="left:539px;top:80px;width:22px;height:22px"></div>
<svg style="left:542px;top:83px;" width="16" height="16" viewBox="0 0 16 16"><g shape-rendering="crispEdges"><rect x="3" y="11" width="1" height="1" fill="#10D810"/><rect x="2" y="8" width="1" height="1" fill="#10D810"/><rect x="3" y="5" width="1" height="1" fill="#10D810"/><rect x="5" y="3" width="1" height="1" fill="#F0E000"/><rect x="7" y="2" width="1" height="1" fill="#F0E000"/><rect x="10" y="3" width="1" height="1" fill="#F0E000"/><rect x="12" y="5" width="1" height="1" fill="#F01010"/><rect x="13" y="8" width="1" height="1" fill="#F01010"/><rect x="12" y="11" width="1" height="1" fill="#F01010"/></g><circle cx="8" cy="8.5" r="3.6" fill="#C8C8C8" stroke="#000" stroke-width="1.2"/><path d="M6.4 6.9L8 8.5" stroke="#fff" stroke-width="1"/></svg>
<div class="btn" style="left:561px;top:80px;width:22px;height:22px"></div>
<svg style="left:564px;top:83px;" width="16" height="16" viewBox="0 0 16 16"><path d="M3.5 2V11C3.5 13.5 5 14 7 14" stroke="#000090" stroke-width="2" fill="none"/><path d="M0.5 5.5H6.5L3.5 1Z" fill="#000090"/><path d="M0.5 6.5H6.5" stroke="#000090" stroke-width="0"/><g shape-rendering="crispEdges"><rect x="6" y="11" width="1" height="1" fill="#10D810"/><rect x="5" y="8" width="1" height="1" fill="#10D810"/><rect x="6" y="5" width="1" height="1" fill="#10D810"/><rect x="8" y="3" width="1" height="1" fill="#F0E000"/><rect x="10" y="3" width="1" height="1" fill="#F0E000"/><rect x="13" y="3" width="1" height="1" fill="#F0E000"/><rect x="15" y="5" width="1" height="1" fill="#F01010"/><rect x="16" y="8" width="1" height="1" fill="#F01010"/><rect x="15" y="11" width="1" height="1" fill="#F01010"/></g><circle cx="10.8" cy="8.5" r="3.4" fill="#C8C8C8" stroke="#000" stroke-width="1.2"/><path d="M9.2 6.9L10.8 8.5" stroke="#fff" stroke-width="1"/></svg>
<div class="btn" style="left:583px;top:80px;width:22px;height:22px"></div>
<svg style="left:586px;top:83px;" width="16" height="16" viewBox="0 0 16 16"><path d="M3.5 13V5C3.5 2.5 5 2 7 2" stroke="#000090" stroke-width="2" fill="none"/><path d="M0.5 10.5H6.5L3.5 15Z" fill="#000090"/><g shape-rendering="crispEdges"><rect x="6" y="11" width="1" height="1" fill="#10D810"/><rect x="5" y="8" width="1" height="1" fill="#10D810"/><rect x="6" y="5" width="1" height="1" fill="#10D810"/><rect x="8" y="3" width="1" height="1" fill="#F0E000"/><rect x="10" y="3" width="1" height="1" fill="#F0E000"/><rect x="13" y="3" width="1" height="1" fill="#F0E000"/><rect x="15" y="5" width="1" height="1" fill="#F01010"/><rect x="16" y="8" width="1" height="1" fill="#F01010"/><rect x="15" y="11" width="1" height="1" fill="#F01010"/></g><circle cx="10.8" cy="8.5" r="3.4" fill="#C8C8C8" stroke="#000" stroke-width="1.2"/><path d="M9.2 6.9L10.8 8.5" stroke="#fff" stroke-width="1"/></svg>
<div class="btn" style="left:605px;top:80px;width:22px;height:22px"></div>
<svg style="left:608px;top:83px;" width="16" height="16" viewBox="0 0 16 16"><g shape-rendering="crispEdges"><rect x="3" y="8" width="1" height="1" fill="#10D810"/><rect x="2" y="5" width="1" height="1" fill="#10D810"/><rect x="3" y="2" width="1" height="1" fill="#10D810"/><rect x="5" y="0" width="1" height="1" fill="#F0E000"/><rect x="7" y="0" width="1" height="1" fill="#F0E000"/><rect x="10" y="0" width="1" height="1" fill="#F0E000"/><rect x="12" y="2" width="1" height="1" fill="#F01010"/><rect x="13" y="5" width="1" height="1" fill="#F01010"/><rect x="12" y="8" width="1" height="1" fill="#F01010"/></g><circle cx="8" cy="5.5" r="3.4" fill="#C8C8C8" stroke="#000" stroke-width="1.2"/><path d="M6.4 3.9L8 5.5" stroke="#fff" stroke-width="1"/><path d="M3.5 11.5H12.5M3.5 14.5H12.5" stroke="#000090" stroke-width="1.8"/></svg>
<div class="btn" style="left:627px;top:80px;width:22px;height:22px"></div>
<svg style="left:630px;top:83px;" width="16" height="16" viewBox="0 0 16 16"><g shape-rendering="crispEdges"><rect x="1" y="11" width="1" height="1" fill="#10D810"/><rect x="0" y="8" width="1" height="1" fill="#10D810"/><rect x="1" y="5" width="1" height="1" fill="#10D810"/><rect x="3" y="3" width="1" height="1" fill="#F0E000"/><rect x="5" y="3" width="1" height="1" fill="#F0E000"/><rect x="8" y="3" width="1" height="1" fill="#F0E000"/><rect x="10" y="5" width="1" height="1" fill="#F01010"/><rect x="11" y="8" width="1" height="1" fill="#F01010"/><rect x="10" y="11" width="1" height="1" fill="#F01010"/></g><circle cx="6" cy="8.5" r="3.4" fill="#C8C8C8" stroke="#000" stroke-width="1.2"/><path d="M4.4 6.9L6 8.5" stroke="#fff" stroke-width="1"/><path d="M13.5 2V10.5M13.5 12.5V15" stroke="#000090" stroke-width="2.2"/></svg>
<div class="btn" style="left:649px;top:80px;width:22px;height:22px"></div>
<svg style="left:652px;top:83px;" width="16" height="16" viewBox="0 0 16 16"><g shape-rendering="crispEdges"><rect x="3" y="8" width="1" height="1" fill="#10D810"/><rect x="2" y="5" width="1" height="1" fill="#10D810"/><rect x="3" y="2" width="1" height="1" fill="#10D810"/><rect x="5" y="0" width="1" height="1" fill="#F0E000"/><rect x="7" y="0" width="1" height="1" fill="#F0E000"/><rect x="10" y="0" width="1" height="1" fill="#F0E000"/><rect x="12" y="2" width="1" height="1" fill="#F01010"/><rect x="13" y="5" width="1" height="1" fill="#F01010"/><rect x="12" y="8" width="1" height="1" fill="#F01010"/></g><circle cx="8" cy="5.5" r="3.4" fill="#C8C8C8" stroke="#000" stroke-width="1.2"/><path d="M6.4 3.9L8 5.5" stroke="#fff" stroke-width="1"/><path d="M2.5 13.7H13.5" stroke="#000" stroke-width="3"/><path d="M2.5 13.7H13.5" stroke="#F4EC00" stroke-width="1.6"/><circle cx="2" cy="13.7" r="1.6" fill="#fff" stroke="#000"/><circle cx="14" cy="13.7" r="1.6" fill="#fff" stroke="#000"/></svg>
<div class="btn" style="left:671px;top:80px;width:22px;height:22px"></div>
<svg style="left:674px;top:83px;" width="16" height="16" viewBox="0 0 16 16"><path d="M7 1V10L1.5 5.5Z" fill="#10C810"/><path d="M9 1V10L14.5 5.5Z" fill="#F01010"/><path d="M2.5 13.7H13.5" stroke="#000" stroke-width="3"/><path d="M2.5 13.7H13.5" stroke="#F4EC00" stroke-width="1.6"/><circle cx="2" cy="13.7" r="1.6" fill="#fff" stroke="#000"/><circle cx="14" cy="13.7" r="1.6" fill="#fff" stroke="#000"/></svg>
<div class="btn" style="left:693px;top:80px;width:22px;height:22px"></div>
<svg style="left:696px;top:83px;" width="16" height="16" viewBox="0 0 16 16"><path d="M0.5 3C3 0.5 5.5 1 8 2.2C10.5 1 13 0.5 15.5 3C13 7 10.5 8.2 8 8.2C5.5 8.2 3 7 0.5 3Z" fill="#F01020"/><path d="M3 3.4C6 2.6 10 2.6 13 3.4C10.5 5.6 5.5 5.6 3 3.4Z" fill="#fff"/><path d="M5 9.5L11 15.5M11 9.5L5 15.5" stroke="#900010" stroke-width="1.6"/><path d="M1 12L4 8.5M15 12L12 8.5M2.5 15.5C1.5 14 1.5 13 2 12M13.5 15.5C14.5 14 14.5 13 14 12" stroke="#000" stroke-width="1" fill="none"/></svg>
<div class="btn" style="left:715px;top:80px;width:22px;height:22px"></div>
<svg style="left:718px;top:83px;" width="16" height="16" viewBox="0 0 16 16"><path d="M8 0.5L15.5 8L8 15.5L0.5 8Z" fill="#F0E800" stroke="#A09000" stroke-width=".5"/><path d="M5.5 3L0.5 8L5.5 13Z" fill="#10C810"/><path d="M10.5 3L15.5 8L10.5 13Z" fill="#F01010"/></svg>
<div class="btn" style="left:737px;top:80px;width:22px;height:22px"></div>
<svg style="left:740px;top:83px;" width="16" height="16" viewBox="0 0 16 16"><text x="8" y="7.5" font-family="Liberation Sans" font-weight="bold" font-size="9" text-anchor="middle" fill="#000090">Hz</text><path d="M4 8.5V15.5L12.5 12Z" fill="#109010" stroke="#084808" stroke-width=".5"/></svg>
<div class="btn" style="left:759px;top:80px;width:22px;height:22px"></div>
<svg style="left:762px;top:83px;" width="16" height="16" viewBox="0 0 16 16"><text x="8" y="8" font-family="Liberation Sans" font-weight="bold" font-size="9.5" text-anchor="middle" fill="#109010">Hz</text><path d="M1 12.5H15" stroke="#000" stroke-width="1"/><circle cx="1.8" cy="12.5" r="1.3" fill="#fff" stroke="#000" stroke-width=".8"/><circle cx="14.2" cy="12.5" r="1.3" fill="#fff" stroke="#000" stroke-width=".8"/><circle cx="6" cy="12.5" r="1.2" fill="#10C010"/><circle cx="10" cy="12.5" r="1.2" fill="#10C010"/></svg>
<div class="btn" style="left:781px;top:80px;width:22px;height:22px"></div>
<svg style="left:784px;top:83px;" width="16" height="16" viewBox="0 0 16 16"><path d="M0.5 4L5 0.5V7.5Z" fill="#10C810"/><path d="M15.5 12L11 8.5V15.5Z" fill="#F01010"/><path d="M6 3H11C13.5 3 13.5 7 11 7M4 7V9.5M2.8 8.2H5.4M10 13H5C2.5 13 2.5 10 4.5 10M5 13L12 5" stroke="#000090" stroke-width="1.4" fill="none"/><path d="M11 4.5L14.5 7L10.5 8.5Z" fill="#000090"/><path d="M6 11.5L3 13L6 15Z" fill="#000090"/></svg>
<div class="btn" style="left:803px;top:80px;width:22px;height:22px"></div>
<svg style="left:806px;top:83px;" width="16" height="16" viewBox="0 0 16 16"><g shape-rendering="crispEdges"><rect x="1" y="8" width="1" height="1" fill="#10D810"/><rect x="0" y="5" width="1" height="1" fill="#10D810"/><rect x="1" y="2" width="1" height="1" fill="#10D810"/><rect x="3" y="1" width="1" height="1" fill="#F0E000"/><rect x="5" y="0" width="1" height="1" fill="#F0E000"/><rect x="8" y="1" width="1" height="1" fill="#F0E000"/><rect x="10" y="2" width="1" height="1" fill="#F01010"/><rect x="11" y="5" width="1" height="1" fill="#F01010"/><rect x="10" y="8" width="1" height="1" fill="#F01010"/></g><circle cx="6" cy="5.5" r="3.3" fill="#C8C8C8" stroke="#000" stroke-width="1.2"/><path d="M4.4 3.9L6 5.5" stroke="#fff" stroke-width="1"/><path d="M13.5 0.5V7M13.5 8.8V10.8" stroke="#000090" stroke-width="2.2"/><path d="M3 12.3H12" stroke="#10A010" stroke-width="1.6"/><path d="M3 15H12" stroke="#F01010" stroke-width="1.6"/></svg>
<div class="btn" style="left:825px;top:80px;width:22px;height:22px"></div>
<svg style="left:828px;top:83px;" width="16" height="16" viewBox="0 0 16 16"><circle cx="8" cy="8" r="7" fill="#000090" stroke="#F0E000" stroke-width="1.4"/><path d="M8 8V2.8M8 8L5 11.5" stroke="#F0E000" stroke-width="1.6"/><path d="M8 1.5V2.6M8 13.4V14.5M1.5 8H2.6M13.4 8H14.5M3.4 3.4L4.2 4.2M12.6 3.4L11.8 4.2M3.4 12.6L4.2 11.8M12.6 12.6L11.8 11.8" stroke="#F0E000" stroke-width="1"/></svg>
<div class="btn" style="left:847px;top:80px;width:22px;height:22px"></div>
<svg style="left:850px;top:83px;" width="16" height="16" viewBox="0 0 16 16"><path d="M0.5 3C3 0.5 5.5 1 8 2.2C10.5 1 13 0.5 15.5 3C13 7 10.5 8.2 8 8.2C5.5 8.2 3 7 0.5 3Z" fill="#F01020"/><path d="M3 3.4C6 2.6 10 2.6 13 3.4C10.5 5.6 5.5 5.6 3 3.4Z" fill="#fff"/><path d="M1 8V15.5H15V8L8 12.5Z" fill="#000090"/><path d="M11 11.5H15.5L13.3 15.2Z" fill="#F0E000" stroke="#807000" stroke-width=".4"/></svg>
<div style="left:0px;top:104px;width:1208px;height:1px;background:#fff;"></div>
<div style="left:1208px;top:104px;width:1px;height:35px;background:#808080;"></div>
<div style="left:1209px;top:104px;width:157px;height:1px;background:#fff;"></div>
<div style="left:1209px;top:104px;width:1px;height:35px;background:#fff;"></div>
<div style="left:3px;top:106px;width:1px;height:32px;background:#fff;"></div>
<div style="left:5px;top:106px;width:1px;height:32px;background:#808080;"></div>
<div style="left:3px;top:106px;width:2px;height:1px;background:#fff;"></div>
<div style="left:3px;top:137px;width:3px;height:1px;background:#808080;"></div>
<div class="btn" style="left:11px;top:106px;width:44px;height:32px"></div>
<svg style="left:12px;top:107px;" width="43" height="31" viewBox="0 0 43 31"><defs><linearGradient id="gg" x1="0" y1="0" x2="0" y2="1"><stop offset="0" stop-color="#10FF10"/><stop offset=".55" stop-color="#00E000"/><stop offset="1" stop-color="#009800"/></linearGradient><linearGradient id="gb" x1="0" y1="0" x2="0" y2="1"><stop offset="0" stop-color="#1010FF"/><stop offset="1" stop-color="#0000C8"/></linearGradient><linearGradient id="gr" x1="0" y1="0" x2="0" y2="1"><stop offset="0" stop-color="#FF1414"/><stop offset=".5" stop-color="#F40000"/><stop offset="1" stop-color="#B40000"/></linearGradient></defs><path d="M11 5.5V28L34 16.5Z" fill="#909090" opacity=".55"/><path d="M10 4V26.5L32.5 15Z" fill="url(#gg)"/></svg>
<div class="btn" style="left:55px;top:106px;width:44px;height:32px"></div>
<svg style="left:56px;top:107px;" width="43" height="31" viewBox="0 0 43 31"><defs><linearGradient id="gg" x1="0" y1="0" x2="0" y2="1"><stop offset="0" stop-color="#10FF10"/><stop offset=".55" stop-color="#00E000"/><stop offset="1" stop-color="#009800"/></linearGradient><linearGradient id="gb" x1="0" y1="0" x2="0" y2="1"><stop offset="0" stop-color="#1010FF"/><stop offset="1" stop-color="#0000C8"/></linearGradient><linearGradient id="gr" x1="0" y1="0" x2="0" y2="1"><stop offset="0" stop-color="#FF1414"/><stop offset=".5" stop-color="#F40000"/><stop offset="1" stop-color="#B40000"/></linearGradient></defs><rect x="10" y="4.5" width="23" height="21.5" fill="#A4A4D4"/><path d="M13 6V26L32 16Z" fill="#8080A8" opacity=".6"/><path d="M12 5V25L31 15Z" fill="url(#gg)"/><rect x="8.5" y="4" width="2" height="23" fill="#00E8F0"/><rect x="10.5" y="4.5" width="1" height="22.5" fill="#008890"/><rect x="32" y="4" width="2" height="23" fill="#00E8F0"/><rect x="34" y="4.5" width="1" height="22.5" fill="#008890"/></svg>
<div class="btn" style="left:99px;top:106px;width:44px;height:32px"></div>
<svg style="left:100px;top:107px;" width="43" height="31" viewBox="0 0 43 31"><defs><linearGradient id="gg" x1="0" y1="0" x2="0" y2="1"><stop offset="0" stop-color="#10FF10"/><stop offset=".55" stop-color="#00E000"/><stop offset="1" stop-color="#009800"/></linearGradient><linearGradient id="gb" x1="0" y1="0" x2="0" y2="1"><stop offset="0" stop-color="#1010FF"/><stop offset="1" stop-color="#0000C8"/></linearGradient><linearGradient id="gr" x1="0" y1="0" x2="0" y2="1"><stop offset="0" stop-color="#FF1414"/><stop offset=".5" stop-color="#F40000"/><stop offset="1" stop-color="#B40000"/></linearGradient></defs><path d="M9 7.5V26L27 16.5Z" fill="#909090" opacity=".5"/><path d="M8 6V25L27 15.5Z" fill="url(#gg)"/><path d="M14.5 3.5H16.5V27.5H14.5" fill="none" stroke="#909090" stroke-width="1.2"/><circle cx="31.5" cy="15.8" r="3.2" fill="#0808E8"/></svg>
<div class="btn" style="left:150px;top:106px;width:44px;height:32px"></div>
<svg style="left:151px;top:107px;" width="43" height="31" viewBox="0 0 43 31"><defs><linearGradient id="gg" x1="0" y1="0" x2="0" y2="1"><stop offset="0" stop-color="#10FF10"/><stop offset=".55" stop-color="#00E000"/><stop offset="1" stop-color="#009800"/></linearGradient><linearGradient id="gb" x1="0" y1="0" x2="0" y2="1"><stop offset="0" stop-color="#1010FF"/><stop offset="1" stop-color="#0000C8"/></linearGradient><linearGradient id="gr" x1="0" y1="0" x2="0" y2="1"><stop offset="0" stop-color="#FF1414"/><stop offset=".5" stop-color="#F40000"/><stop offset="1" stop-color="#B40000"/></linearGradient></defs><path d="M8 16.5L21.5 9.5V23.5ZM21 16.5L34.5 9.5V23.5Z" fill="#888" opacity=".5"/><path d="M7 15.5L21 8.5V22.5ZM20 15.5L34 8.5V22.5Z" fill="url(#gb)"/></svg>
<div class="btn" style="left:194px;top:106px;width:44px;height:32px"></div>
<svg style="left:195px;top:107px;" width="43" height="31" viewBox="0 0 43 31"><defs><linearGradient id="gg" x1="0" y1="0" x2="0" y2="1"><stop offset="0" stop-color="#10FF10"/><stop offset=".55" stop-color="#00E000"/><stop offset="1" stop-color="#009800"/></linearGradient><linearGradient id="gb" x1="0" y1="0" x2="0" y2="1"><stop offset="0" stop-color="#1010FF"/><stop offset="1" stop-color="#0000C8"/></linearGradient><linearGradient id="gr" x1="0" y1="0" x2="0" y2="1"><stop offset="0" stop-color="#FF1414"/><stop offset=".5" stop-color="#F40000"/><stop offset="1" stop-color="#B40000"/></linearGradient></defs><path d="M35 16.5L21.5 9.5V23.5ZM22 16.5L8.5 9.5V23.5Z" fill="#888" opacity=".5"/><path d="M34 15.5L20 8.5V22.5ZM21 15.5L7 8.5V22.5Z" fill="url(#gb)"/></svg>
<div style="left:238px;top:106px;width:44px;height:32px;background:#D6D3CB"></div>
<svg style="left:239px;top:107px;" width="43" height="31" viewBox="0 0 43 31"><rect x="12.5" y="7" width="6.5" height="16.5" rx="1" fill="#ABABAB"/><rect x="23.5" y="7" width="6.5" height="16.5" rx="1" fill="#ABABAB"/></svg>
<div style="left:282px;top:106px;width:44px;height:32px;background:#D6D3CB"></div>
<svg style="left:283px;top:107px;" width="43" height="31" viewBox="0 0 43 31"><rect x="13" y="7" width="17" height="16.5" rx="1" fill="#ABABAB"/></svg>
<div class="btn" style="left:333px;top:106px;width:44px;height:32px"></div>
<svg style="left:334px;top:107px;" width="43" height="31" viewBox="0 0 43 31"><defs><linearGradient id="gg" x1="0" y1="0" x2="0" y2="1"><stop offset="0" stop-color="#10FF10"/><stop offset=".55" stop-color="#00E000"/><stop offset="1" stop-color="#009800"/></linearGradient><linearGradient id="gb" x1="0" y1="0" x2="0" y2="1"><stop offset="0" stop-color="#1010FF"/><stop offset="1" stop-color="#0000C8"/></linearGradient><linearGradient id="gr" x1="0" y1="0" x2="0" y2="1"><stop offset="0" stop-color="#FF1414"/><stop offset=".5" stop-color="#F40000"/><stop offset="1" stop-color="#B40000"/></linearGradient></defs><path d="M9.5 2.5H27L35 10V27H9.5Z" fill="#A0A0A0" opacity=".5"/><path d="M8.5 1.5H26L34.5 10V26.5H8.5Z" fill="#fff" stroke="#C8C8D0" stroke-width=".6"/><circle cx="21.2" cy="13.8" r="10.3" fill="url(#gr)"/><path d="M26 1.5V10H34.5Z" fill="#fff"/><path d="M26.5 10H34.5V13Z" fill="#A0A0A8" opacity=".6"/></svg>
<div class="btn" style="left:377px;top:106px;width:44px;height:32px"></div>
<svg style="left:378px;top:107px;" width="43" height="31" viewBox="0 0 43 31"><defs><linearGradient id="gg" x1="0" y1="0" x2="0" y2="1"><stop offset="0" stop-color="#10FF10"/><stop offset=".55" stop-color="#00E000"/><stop offset="1" stop-color="#009800"/></linearGradient><linearGradient id="gb" x1="0" y1="0" x2="0" y2="1"><stop offset="0" stop-color="#1010FF"/><stop offset="1" stop-color="#0000C8"/></linearGradient><linearGradient id="gr" x1="0" y1="0" x2="0" y2="1"><stop offset="0" stop-color="#FF1414"/><stop offset=".5" stop-color="#F40000"/><stop offset="1" stop-color="#B40000"/></linearGradient></defs><rect x="9" y="4.5" width="25" height="22" fill="#A4A4D4"/><circle cx="21.2" cy="15" r="10.3" fill="url(#gr)"/><rect x="7.5" y="3.5" width="2.2" height="23.5" fill="#00E8F0"/><rect x="9.7" y="4" width="1" height="23" fill="#008890"/><rect x="32" y="3.5" width="2.2" height="23.5" fill="#00E8F0"/><rect x="34.2" y="4" width="1" height="23" fill="#008890"/></svg>
<div class="btn" style="left:428px;top:106px;width:44px;height:32px"></div>
<svg style="left:429px;top:107px;" width="43" height="31" viewBox="0 0 43 31"><defs><radialGradient id="gq" cx=".4" cy=".35" r=".7"><stop offset="0" stop-color="#48B8F0"/><stop offset=".5" stop-color="#1060B0"/><stop offset="1" stop-color="#062868"/></radialGradient></defs><circle cx="12.5" cy="15" r="5.2" fill="#fff" stroke="#888" stroke-width="1.1"/><circle cx="12.5" cy="15" r="3.2" fill="url(#gq)"/><rect x="22.5" y="9.5" width="11" height="11.5" fill="#F0F4FF" stroke="#A0A0A8"/><path d="M24.8 15L27.5 19L31.8 10.8" stroke="#2838B0" stroke-width="1.7" fill="none"/></svg>
<div class="btn" style="left:472px;top:106px;width:44px;height:32px"></div>
<svg style="left:473px;top:107px;" width="43" height="31" viewBox="0 0 43 31"><rect x="9" y="4" width="26" height="23.5" fill="#A0A0A0" opacity=".5"/><rect x="8" y="3" width="26" height="23.5" fill="#fff" stroke="#1818D8" stroke-width="1.2"/><rect x="8" y="3" width="26" height="3.2" fill="#1818D8"/><rect x="26" y="4" width="1.2" height="1.2" fill="#fff"/><rect x="28.2" y="4" width="1.2" height="1.2" fill="#fff"/><rect x="30.6" y="3.8" width="2" height="1.6" fill="#E02020"/><rect x="11" y="8" width="2" height="2" fill="#30E030"/><rect x="14.5" y="8" width="2" height="2" fill="#30E030"/><rect x="18" y="8" width="2" height="2" fill="#30E030"/><rect x="11" y="11.5" width="9" height="1.6" fill="#3030E0"/><rect x="11" y="14" width="1.6" height="1.4" fill="#E02020"/><rect x="14" y="14" width="1.6" height="1.4" fill="#E02020"/><path d="M22.5 8.5H32M22.5 11H32M22.5 13.5H32" stroke="#A8A8A8" stroke-width=".9"/><rect x="11" y="16.8" width="9" height="1" fill="#808080"/><rect x="22" y="16.6" width="10" height="1.4" fill="#30B030"/><rect x="30" y="16.6" width="2" height="1.4" fill="#E0A020"/><rect x="10.5" y="18.5" width="9.5" height="6.5" fill="#000"/><rect x="22" y="18.5" width="10.5" height="6.5" fill="#000"/></svg>
<div style="left:517px;top:106px;width:1px;height:33px;background:#808080;"></div>
<div style="left:518px;top:106px;width:1px;height:33px;background:#fff;"></div>
<div style="left:521px;top:106px;width:1px;height:32px;background:#fff;"></div>
<div style="left:523px;top:106px;width:1px;height:32px;background:#808080;"></div>
<div style="left:521px;top:106px;width:2px;height:1px;background:#fff;"></div>
<div style="left:521px;top:137px;width:3px;height:1px;background:#808080;"></div>
<div class="sunk" style="left:529px;top:106px;width:678px;height:32px;background:#D4D0C8"></div>
<div style="left:540px;top:107px;width:1px;height:30px;background:#00F000;"></div>
<div style="left:541px;top:107px;width:655px;height:30px;background:linear-gradient(90deg,#006400 0%,#156C00 12%,#808000 64%,#803800 82%,#800000 100%);"></div>
<div class="t " style="left:532.5px;top:109px;font-weight:bold;font-size:9px;line-height:10px">L</div>
<div class="t " style="left:532px;top:124.5px;font-weight:bold;font-size:9px;line-height:10px">R</div>
<div class="sunk" style="left:1197px;top:109px;width:7px;height:11px;background:#000"></div>
<div class="sunk" style="left:1197px;top:124px;width:7px;height:11px;background:#000"></div>
<div style="left:1212px;top:106px;width:1px;height:32px;background:#fff;"></div>
<div style="left:1214px;top:106px;width:1px;height:32px;background:#808080;"></div>
<div style="left:1212px;top:106px;width:2px;height:1px;background:#fff;"></div>
<div style="left:1212px;top:137px;width:3px;height:1px;background:#808080;"></div>
<div style="left:1220px;top:106px;width:144px;height:1px;background:#808080;"></div>
<div style="left:1220px;top:106px;width:1px;height:31px;background:#808080;"></div>
<div style="left:1221px;top:107px;width:142px;height:30px;background:#000;"></div>
<div style="left:1220px;top:137px;width:145px;height:1px;background:#fff;"></div>
<div style="left:1363px;top:106px;width:2px;height:32px;background:#fff;"></div>
<div class="t " style="left:1224.5px;top:109px;color:#00FF00;font-size:24px;line-height:28px;letter-spacing:-0.03px">00:00:00.0</div>
<div style="left:1344px;top:110px;width:10px;height:10px;background:#008000;"></div>
<div style="left:1344px;top:123px;width:10px;height:10px;background:#800000;"></div>
<div style="left:0px;top:139px;width:1366px;height:1px;background:#808080;"></div>
<div style="left:14px;top:140px;width:1335px;height:2px;background:#86867E;"></div>
<div style="left:14px;top:140px;width:2px;height:512px;background:#808080;"></div>
<div style="left:1346px;top:140px;width:2px;height:512px;background:#fff;"></div>
<div style="left:1348px;top:140px;width:1px;height:512px;background:#808080;"></div>
<svg style="left:0px;top:0px;shape-rendering:crispEdges" width="1366" height="768" viewBox="0 0 1366 768"><defs><linearGradient id="bg1" gradientUnits="userSpaceOnUse" x1="0" y1="142" x2="0" y2="382"><stop offset="0" stop-color="#000080"/><stop offset=".5" stop-color="#2424A4"/><stop offset="1" stop-color="#000080"/></linearGradient><linearGradient id="bg2" gradientUnits="userSpaceOnUse" x1="0" y1="384" x2="0" y2="624"><stop offset="0" stop-color="#000080"/><stop offset=".5" stop-color="#2424A4"/><stop offset="1" stop-color="#000080"/></linearGradient><linearGradient id="wg" gradientUnits="userSpaceOnUse" x1="0" y1="200" x2="0" y2="324"><stop offset="0" stop-color="#2CFF2C"/><stop offset=".28" stop-color="#22FF22"/><stop offset=".46" stop-color="#00D400"/><stop offset=".5" stop-color="#00B800"/><stop offset=".54" stop-color="#00D400"/><stop offset=".72" stop-color="#22FF22"/><stop offset="1" stop-color="#2CFF2C"/></linearGradient><linearGradient id="wr" gradientUnits="userSpaceOnUse" x1="0" y1="473" x2="0" y2="534"><stop offset="0" stop-color="#FF2020"/><stop offset=".25" stop-color="#FF1818"/><stop offset=".46" stop-color="#E00000"/><stop offset=".5" stop-color="#C80000"/><stop offset=".54" stop-color="#E00000"/><stop offset=".75" stop-color="#FF1818"/><stop offset="1" stop-color="#FF2020"/></linearGradient></defs><rect x="16" y="142" width="1330" height="240" fill="url(#bg1)"/><rect x="16" y="384" width="1330" height="240" fill="url(#bg2)"/><rect x="16" y="625" width="1330" height="9" fill="#000"/><path d="M44 142v492M72 142v492M100 142v492M129 142v492M157 142v492M185 142v492M213 142v492M241 142v492M269 142v492M298 142v492M326 142v492M354 142v492M382 142v492M410 142v492M438 142v492M466 142v492M495 142v492M523 142v492M551 142v492M579 142v492M607 142v492M635 142v492M663 142v492M692 142v492M720 142v492M748 142v492M776 142v492M804 142v492M832 142v492M861 142v492M889 142v492M917 142v492M945 142v492M973 142v492M1001 142v492M1029 142v492M1058 142v492M1086 142v492M1114 142v492M1142 142v492M1170 142v492M1198 142v492M1226 142v492M1255 142v492M1283 142v492M1311 142v492M1339 142v492" stroke="#808080" stroke-width="1" transform="translate(.5 0)"/><path d="M18 148h1328M18 162h1328M18 177h1328M18 191h1328M18 205h1328M18 219h1328M18 233h1328M18 247h1328M18 261h1328M18 276h1328M18 290h1328M18 304h1328M18 318h1328M18 332h1328M18 346h1328M18 361h1328M18 375h1328M18 390h1328M18 404h1328M18 419h1328M18 433h1328M18 447h1328M18 461h1328M18 475h1328M18 489h1328M18 503h1328M18 518h1328M18 532h1328M18 546h1328M18 560h1328M18 574h1328M18 588h1328M18 603h1328M18 617h1328" stroke="#808080" stroke-width="1" transform="translate(0 .5)"/><path d="M17 148h5M17 162h5M17 177h5M17 191h5M17 205h5M17 219h5M17 233h5M17 247h5M17 261h5M17 276h5M17 290h5M17 304h5M17 318h5M17 332h5M17 346h5M17 361h5M17 375h5M17 390h5M17 404h5M17 419h5M17 433h5M17 447h5M17 461h5M17 475h5M17 489h5M17 503h5M17 518h5M17 532h5M17 546h5M17 560h5M17 574h5M17 588h5M17 603h5M17 617h5" stroke="#D4D0C8" stroke-width="1" transform="translate(0 .5)"/><rect x="17" y="142" width="1" height="482" fill="#000068"/><path d="M17 143h1M17 145h1M17 148h1M17 151h1M17 154h1M17 157h1M17 160h1M17 162h1M17 165h1M17 168h1M17 171h1M17 174h1M17 177h1M17 179h1M17 182h1M17 185h1M17 188h1M17 191h1M17 194h1M17 196h1M17 199h1M17 202h1M17 205h1M17 208h1M17 211h1M17 213h1M17 216h1M17 219h1M17 222h1M17 225h1M17 228h1M17 230h1M17 233h1M17 236h1M17 239h1M17 242h1M17 244h1M17 247h1M17 250h1M17 253h1M17 256h1M17 259h1M17 261h1M17 264h1M17 267h1M17 270h1M17 273h1M17 276h1M17 278h1M17 281h1M17 284h1M17 287h1M17 290h1M17 293h1M17 295h1M17 298h1M17 301h1M17 304h1M17 307h1M17 310h1M17 312h1M17 315h1M17 318h1M17 321h1M17 324h1M17 327h1M17 329h1M17 332h1M17 335h1M17 338h1M17 341h1M17 344h1M17 346h1M17 349h1M17 352h1M17 355h1M17 358h1M17 361h1M17 363h1M17 366h1M17 369h1M17 372h1M17 375h1M17 378h1M17 380h1M17 385h1M17 387h1M17 390h1M17 393h1M17 396h1M17 399h1M17 402h1M17 404h1M17 407h1M17 410h1M17 413h1M17 416h1M17 419h1M17 421h1M17 424h1M17 427h1M17 430h1M17 433h1M17 436h1M17 438h1M17 441h1M17 444h1M17 447h1M17 450h1M17 453h1M17 455h1M17 458h1M17 461h1M17 464h1M17 467h1M17 470h1M17 472h1M17 475h1M17 478h1M17 481h1M17 484h1M17 486h1M17 489h1M17 492h1M17 495h1M17 498h1M17 501h1M17 503h1M17 506h1M17 509h1M17 512h1M17 515h1M17 518h1M17 520h1M17 523h1M17 526h1M17 529h1M17 532h1M17 535h1M17 537h1M17 540h1M17 543h1M17 546h1M17 549h1M17 552h1M17 554h1M17 557h1M17 560h1M17 563h1M17 566h1M17 569h1M17 571h1M17 574h1M17 577h1M17 580h1M17 583h1M17 586h1M17 588h1M17 591h1M17 594h1M17 597h1M17 600h1M17 603h1M17 605h1M17 608h1M17 611h1M17 614h1M17 617h1M17 620h1M17 622h1" stroke="#C8C4BC" stroke-width="1" transform="translate(0 .5)"/><rect x="16" y="142" width="1" height="482" fill="#00FFFF"/><rect x="16" y="382" width="1330" height="2" fill="#86867A"/><rect x="16" y="624" width="1330" height="1" fill="#E8E8E8"/><rect x="17" y="260" width="700" height="2" fill="#00F000"/><rect x="376" y="259" width="3" height="1" fill="#00F000"/><rect x="377" y="262" width="2" height="2" fill="#00F000"/><path d="M714 261V260h3V259h1V258h3V257h4V256h1V255h4V254h1V253h1V254h1V253h1V252h2V251h4V250h1V249h2V250h1V249h4V248h2V249h2V248h3V247h2V246h4V245h8V246h2V247h1V248h1V249h1V250h3V249h2V247h2V246h2V244h3V243h1V242h1V241h2V240h5V239h4V240h6V241h1V242h2V243h3V244h1V245h3V246h1V245h3V246h1V244h2V243h2V241h2V240h1V239h2V238h1V237h1V238h1V237h1V236h1V235h1V234h1V232h1V231h1V229h6V230h1V228h2V227h2V229h2V230h1V231h1V232h1V233h1V234h1V236h1V237h2V238h2V239h1V240h1V242h1V243h1V244h1V246h1V245h3V244h5V243h1V244h1V243h3V242h1V243h3V242h4V241h2V240h4V239h2V238h5V237h3V236h3V235h1V234h2V233h3V232h1V231h3V232h5V233h4V235h1V236h1V237h1V239h1V240h1V242h1V244h1V246h2V245h1V244h1V243h1V242h2V241h1V240h8V241h7V240h1V241h1V240h4V239h3V238h1V237h3V236h3V235h1V234h2V233h1V231h2V230h2V229h1V228h1V227h4V226h1V227h1V226h1V228h4V229h3V231h1V232h1V234h1V235h1V237h1V239h1V240h1V241h1V242h1V243h1V244h2V245h1V244h1V243h1V242h1V241h1V240h1V239h1V238h1V237h3V238h1V239h2V241h1V242h4V243h2V244h1V243h1V245h1V248h1V249h1V247h2V246h1V244h2V243h1V241h3V240h1V239h1V238h1V237h2V236h2V234h2V233h2V232h2V231h1V229h2V228h2V227h2V226h3V227h2V228h1V229h1V228h1V229h1V230h2V231h2V232h1V233h2V235h2V236h2V237h2V238h2V239h1V240h3V241h4V242h4V243h1V242h3V241h1V240h4V239h2V238h1V237h2V236h2V235h1V234h2V232h1V231h1V230h2V229h1V228h1V226h2V224h2V223h1V222h1V221h1V219h1V218h1V217h1V216h2V215h2V214h2V213h1V212h1V211h1V212h1V213h2V214h1V213h1V212h1V211h1V209h2V210h1V211h1V212h1V213h1V214h1V216h2V218h1V220h1V221h1V222h1V224h1V225h1V228h1V232h1V234h1V238h1V240h1V244h1V245h3V246h2V247h1V248h1V249h2V250h2V252h2V253h4V252h1V253h1V252h3V253h1V252h1V253h2V252h5V251h2V252h1V251h9V252h2V251h3V252h2V251h1V252h11V253h5V254h2V253h1V254h7V255h2V254h1V255h4V256h2V255h1V256h2V257h1V256h2V257h8V258h3V259h1V258h2V259h8V258h1V256h1V255h1V249h1V250h1V247h1V241h1V242h1V240h1V239h1V233h1V234h1V232h1V229h1V230h1V228h1V229h1V226h1V225h2V224h1V225h1V222h1V226h2V221h1V222h1V224h1V219h1V223h1V217h1V216h1V220h1V217h2V215h1V220h1V219h1V218h1V221h1V223h1V227h1V225h1V220h1V222h1V221h2V223h1V222h1V217h1V221h1V216h1V219h1V216h1V217h1V216h1V215h1V217h1V213h1V212h1V215h1V261ZM714 261V262h2V263h2V264h2V265h2V266h3V267h2V268h2V269h3V270h3V271h1V272h4V273h2V274h3V275h2V276h3V277h1V276h1V277h5V278h3V279h1V278h2V277h8V276h1V277h2V276h4V275h1V276h2V277h2V278h2V280h5V282h1V281h2V283h4V284h1V283h1V285h5V286h4V285h8V284h1V285h1V284h2V285h1V284h2V285h1V286h3V287h1V288h1V290h1V291h2V292h1V293h2V294h2V293h1V292h1V290h1V288h1V289h5V290h2V289h1V288h1V287h1V286h1V285h2V284h3V283h2V282h2V281h4V280h1V281h1V280h1V279h3V280h3V281h3V282h1V283h1V282h1V283h2V284h1V283h1V284h1V283h1V282h3V281h13V282h1V283h2V284h1V285h2V284h1V285h1V284h3V283h1V284h1V283h2V282h1V281h2V280h4V279h1V278h3V277h1V278h2V279h1V280h1V281h1V282h3V283h1V284h2V285h2V286h1V287h2V288h1V287h1V288h1V289h4V290h1V289h1V288h2V287h3V286h3V285h3V284h2V285h1V284h11V283h1V284h3V283h6V281h2V280h3V279h1V278h5V279h6V280h1V279h1V280h2V281h1V280h2V281h1V282h1V283h2V285h2V286h4V285h3V284h7V283h1V284h2V283h1V284h6V283h4V282h1V281h1V282h5V283h4V284h1V283h1V284h3V283h1V284h6V285h1V286h1V285h1V286h1V287h1V285h2V283h2V282h2V280h2V279h2V278h1V277h4V278h1V277h2V278h1V277h2V278h1V277h2V276h1V277h1V276h1V277h1V278h1V277h1V278h3V279h1V280h3V281h1V282h1V283h3V284h1V286h1V287h1V289h1V290h1V292h2V293h1V295h1V296h1V297h1V298h1V299h1V300h1V301h1V302h1V303h1V304h1V305h1V306h2V307h1V308h1V309h1V310h7V309h2V308h1V306h1V305h1V302h1V301h1V299h1V297h1V295h1V293h1V291h1V289h1V287h1V285h2V283h1V282h1V281h1V279h1V278h2V277h1V276h1V275h1V276h2V275h2V274h1V275h1V274h2V273h1V274h1V272h6V271h3V270h1V271h1V270h4V269h1V270h1V269h5V268h2V269h1V268h3V269h1V268h3V269h4V268h1V270h1V269h3V270h1V271h1V270h3V271h4V270h1V271h3V270h9V269h3V270h1V269h1V268h1V269h1V268h5V267h5V266h5V265h1V266h1V265h4V264h5V263h3V262h1V263h1V265h1V264h1V266h1V268h1V272h1V273h1V275h1V280h1V288h1V286h1V287h1V293h2V297h1V298h1V300h1V301h2V306h1V311h1V309h1V317h1V315h1V318h1V324h1V328h2V327h1V325h1V322h1V320h1V315h1V314h1V319h2V315h1V314h1V315h1V316h1V313h1V314h1V310h2V309h2V312h1V313h1V310h1V311h1V312h1V313h1V319h1V315h1V316h1V314h1V316h2V313h1V316h1V318h1V320h1V322h1V261Z" fill="#2CFF2C"/><path d="M714 261V260h3V259h1V258h3V257h4V256h1V255h4V254h1V253h1V254h1V253h1V252h2V251h4V250h1V249h2V250h1V249h4V248h2V249h2V248h3V247h2V246h4V245h8V246h2V247h1V248h1V249h1V250h3V249h2V247h2V246h2V244h3V243h1V242h1V241h2V240h5V239h4V240h6V241h1V242h2V243h3V244h1V245h3V246h1V245h3V246h1V244h2V243h2V241h2V240h1V239h2V238h1V237h1V238h1V237h1V236h1V235h1V234h1V232h1V231h1V229h6V230h1V228h2V227h2V229h2V230h1V231h1V232h1V233h1V234h1V236h1V237h2V238h2V239h1V240h1V242h1V243h1V244h1V246h1V245h3V244h5V243h1V244h1V243h3V242h1V243h3V242h4V241h2V240h4V239h2V238h5V237h3V236h3V235h1V234h2V233h3V232h1V231h3V232h5V233h4V235h1V236h1V237h1V239h1V240h1V242h1V244h1V246h2V245h1V244h1V243h1V242h2V241h1V240h8V241h7V240h1V241h1V240h4V239h3V238h1V237h3V236h3V235h1V234h2V233h1V231h2V230h2V229h1V228h1V227h4V226h1V227h1V226h1V228h4V229h3V231h1V232h1V234h1V235h1V237h1V239h1V240h1V241h1V242h1V243h1V244h2V245h1V244h1V243h1V242h1V241h1V240h1V239h1V238h1V237h3V238h1V239h2V241h1V242h4V243h2V244h1V243h1V245h1V248h1V249h1V247h2V246h1V244h2V243h1V241h3V240h1V239h1V238h1V237h2V236h2V234h2V233h2V232h2V231h1V229h2V228h2V227h2V226h3V227h2V228h1V229h1V228h1V229h1V230h2V231h2V232h1V233h2V235h2V236h2V237h2V238h2V239h1V240h3V241h4V242h4V243h1V242h3V241h1V240h4V239h2V238h1V237h2V236h2V235h1V234h2V232h1V231h1V230h2V229h1V228h1V226h2V224h2V223h1V222h1V221h1V219h1V218h1V217h1V216h2V215h2V214h2V213h1V212h1V211h1V212h1V213h2V214h1V213h1V212h1V211h1V209h2V210h1V211h1V212h1V213h1V214h1V216h2V218h1V220h1V221h1V222h1V224h1V225h1V228h1V232h1V234h1V238h1V240h1V244h1V245h3V246h2V247h1V248h1V249h2V250h2V252h2V253h4V252h1V253h1V252h3V253h1V252h1V253h2V252h5V251h2V252h1V251h9V252h2V251h3V252h2V251h1V252h11V253h5V254h2V253h1V254h7V255h2V254h1V255h4V256h2V255h1V256h2V257h1V256h2V257h8V258h3V259h1V258h2V259h8V258h1V256h1V255h1V249h1V250h1V247h1V241h1V242h1V240h1V239h1V233h1V234h1V232h1V229h1V230h1V228h1V229h1V226h1V225h2V224h1V225h1V222h1V226h2V221h1V222h1V224h1V219h1V223h1V217h1V216h1V220h1V217h2V215h1V220h1V219h1V218h1V221h1V223h1V227h1V225h1V220h1V222h1V221h2V223h1V222h1V217h1V221h1V216h1V219h1V216h1V217h1V216h1V215h1V217h1V213h1V212h1V215h1V261ZM714 261V262h2V263h2V264h2V265h2V266h3V267h2V268h2V269h3V270h3V271h1V272h4V273h2V274h3V275h2V276h3V277h1V276h1V277h5V278h3V279h1V278h2V277h8V276h1V277h2V276h4V275h1V276h2V277h2V278h2V280h5V282h1V281h2V283h4V284h1V283h1V285h5V286h4V285h8V284h1V285h1V284h2V285h1V284h2V285h1V286h3V287h1V288h1V290h1V291h2V292h1V293h2V294h2V293h1V292h1V290h1V288h1V289h5V290h2V289h1V288h1V287h1V286h1V285h2V284h3V283h2V282h2V281h4V280h1V281h1V280h1V279h3V280h3V281h3V282h1V283h1V282h1V283h2V284h1V283h1V284h1V283h1V282h3V281h13V282h1V283h2V284h1V285h2V284h1V285h1V284h3V283h1V284h1V283h2V282h1V281h2V280h4V279h1V278h3V277h1V278h2V279h1V280h1V281h1V282h3V283h1V284h2V285h2V286h1V287h2V288h1V287h1V288h1V289h4V290h1V289h1V288h2V287h3V286h3V285h3V284h2V285h1V284h11V283h1V284h3V283h6V281h2V280h3V279h1V278h5V279h6V280h1V279h1V280h2V281h1V280h2V281h1V282h1V283h2V285h2V286h4V285h3V284h7V283h1V284h2V283h1V284h6V283h4V282h1V281h1V282h5V283h4V284h1V283h1V284h3V283h1V284h6V285h1V286h1V285h1V286h1V287h1V285h2V283h2V282h2V280h2V279h2V278h1V277h4V278h1V277h2V278h1V277h2V278h1V277h2V276h1V277h1V276h1V277h1V278h1V277h1V278h3V279h1V280h3V281h1V282h1V283h3V284h1V286h1V287h1V289h1V290h1V292h2V293h1V295h1V296h1V297h1V298h1V299h1V300h1V301h1V302h1V303h1V304h1V305h1V306h2V307h1V308h1V309h1V310h7V309h2V308h1V306h1V305h1V302h1V301h1V299h1V297h1V295h1V293h1V291h1V289h1V287h1V285h2V283h1V282h1V281h1V279h1V278h2V277h1V276h1V275h1V276h2V275h2V274h1V275h1V274h2V273h1V274h1V272h6V271h3V270h1V271h1V270h4V269h1V270h1V269h5V268h2V269h1V268h3V269h1V268h3V269h4V268h1V270h1V269h3V270h1V271h1V270h3V271h4V270h1V271h3V270h9V269h3V270h1V269h1V268h1V269h1V268h5V267h5V266h5V265h1V266h1V265h4V264h5V263h3V262h1V263h1V265h1V264h1V266h1V268h1V272h1V273h1V275h1V280h1V288h1V286h1V287h1V293h2V297h1V298h1V300h1V301h2V306h1V311h1V309h1V317h1V315h1V318h1V324h1V328h2V327h1V325h1V322h1V320h1V315h1V314h1V319h2V315h1V314h1V315h1V316h1V313h1V314h1V310h2V309h2V312h1V313h1V310h1V311h1V312h1V313h1V319h1V315h1V316h1V314h1V316h2V313h1V316h1V318h1V320h1V322h1V261Z" fill="#25FC25" transform="translate(0 261.5) scale(1 0.8) translate(0 -261.5)"/><path d="M714 261V260h3V259h1V258h3V257h4V256h1V255h4V254h1V253h1V254h1V253h1V252h2V251h4V250h1V249h2V250h1V249h4V248h2V249h2V248h3V247h2V246h4V245h8V246h2V247h1V248h1V249h1V250h3V249h2V247h2V246h2V244h3V243h1V242h1V241h2V240h5V239h4V240h6V241h1V242h2V243h3V244h1V245h3V246h1V245h3V246h1V244h2V243h2V241h2V240h1V239h2V238h1V237h1V238h1V237h1V236h1V235h1V234h1V232h1V231h1V229h6V230h1V228h2V227h2V229h2V230h1V231h1V232h1V233h1V234h1V236h1V237h2V238h2V239h1V240h1V242h1V243h1V244h1V246h1V245h3V244h5V243h1V244h1V243h3V242h1V243h3V242h4V241h2V240h4V239h2V238h5V237h3V236h3V235h1V234h2V233h3V232h1V231h3V232h5V233h4V235h1V236h1V237h1V239h1V240h1V242h1V244h1V246h2V245h1V244h1V243h1V242h2V241h1V240h8V241h7V240h1V241h1V240h4V239h3V238h1V237h3V236h3V235h1V234h2V233h1V231h2V230h2V229h1V228h1V227h4V226h1V227h1V226h1V228h4V229h3V231h1V232h1V234h1V235h1V237h1V239h1V240h1V241h1V242h1V243h1V244h2V245h1V244h1V243h1V242h1V241h1V240h1V239h1V238h1V237h3V238h1V239h2V241h1V242h4V243h2V244h1V243h1V245h1V248h1V249h1V247h2V246h1V244h2V243h1V241h3V240h1V239h1V238h1V237h2V236h2V234h2V233h2V232h2V231h1V229h2V228h2V227h2V226h3V227h2V228h1V229h1V228h1V229h1V230h2V231h2V232h1V233h2V235h2V236h2V237h2V238h2V239h1V240h3V241h4V242h4V243h1V242h3V241h1V240h4V239h2V238h1V237h2V236h2V235h1V234h2V232h1V231h1V230h2V229h1V228h1V226h2V224h2V223h1V222h1V221h1V219h1V218h1V217h1V216h2V215h2V214h2V213h1V212h1V211h1V212h1V213h2V214h1V213h1V212h1V211h1V209h2V210h1V211h1V212h1V213h1V214h1V216h2V218h1V220h1V221h1V222h1V224h1V225h1V228h1V232h1V234h1V238h1V240h1V244h1V245h3V246h2V247h1V248h1V249h2V250h2V252h2V253h4V252h1V253h1V252h3V253h1V252h1V253h2V252h5V251h2V252h1V251h9V252h2V251h3V252h2V251h1V252h11V253h5V254h2V253h1V254h7V255h2V254h1V255h4V256h2V255h1V256h2V257h1V256h2V257h8V258h3V259h1V258h2V259h8V258h1V256h1V255h1V249h1V250h1V247h1V241h1V242h1V240h1V239h1V233h1V234h1V232h1V229h1V230h1V228h1V229h1V226h1V225h2V224h1V225h1V222h1V226h2V221h1V222h1V224h1V219h1V223h1V217h1V216h1V220h1V217h2V215h1V220h1V219h1V218h1V221h1V223h1V227h1V225h1V220h1V222h1V221h2V223h1V222h1V217h1V221h1V216h1V219h1V216h1V217h1V216h1V215h1V217h1V213h1V212h1V215h1V261ZM714 261V262h2V263h2V264h2V265h2V266h3V267h2V268h2V269h3V270h3V271h1V272h4V273h2V274h3V275h2V276h3V277h1V276h1V277h5V278h3V279h1V278h2V277h8V276h1V277h2V276h4V275h1V276h2V277h2V278h2V280h5V282h1V281h2V283h4V284h1V283h1V285h5V286h4V285h8V284h1V285h1V284h2V285h1V284h2V285h1V286h3V287h1V288h1V290h1V291h2V292h1V293h2V294h2V293h1V292h1V290h1V288h1V289h5V290h2V289h1V288h1V287h1V286h1V285h2V284h3V283h2V282h2V281h4V280h1V281h1V280h1V279h3V280h3V281h3V282h1V283h1V282h1V283h2V284h1V283h1V284h1V283h1V282h3V281h13V282h1V283h2V284h1V285h2V284h1V285h1V284h3V283h1V284h1V283h2V282h1V281h2V280h4V279h1V278h3V277h1V278h2V279h1V280h1V281h1V282h3V283h1V284h2V285h2V286h1V287h2V288h1V287h1V288h1V289h4V290h1V289h1V288h2V287h3V286h3V285h3V284h2V285h1V284h11V283h1V284h3V283h6V281h2V280h3V279h1V278h5V279h6V280h1V279h1V280h2V281h1V280h2V281h1V282h1V283h2V285h2V286h4V285h3V284h7V283h1V284h2V283h1V284h6V283h4V282h1V281h1V282h5V283h4V284h1V283h1V284h3V283h1V284h6V285h1V286h1V285h1V286h1V287h1V285h2V283h2V282h2V280h2V279h2V278h1V277h4V278h1V277h2V278h1V277h2V278h1V277h2V276h1V277h1V276h1V277h1V278h1V277h1V278h3V279h1V280h3V281h1V282h1V283h3V284h1V286h1V287h1V289h1V290h1V292h2V293h1V295h1V296h1V297h1V298h1V299h1V300h1V301h1V302h1V303h1V304h1V305h1V306h2V307h1V308h1V309h1V310h7V309h2V308h1V306h1V305h1V302h1V301h1V299h1V297h1V295h1V293h1V291h1V289h1V287h1V285h2V283h1V282h1V281h1V279h1V278h2V277h1V276h1V275h1V276h2V275h2V274h1V275h1V274h2V273h1V274h1V272h6V271h3V270h1V271h1V270h4V269h1V270h1V269h5V268h2V269h1V268h3V269h1V268h3V269h4V268h1V270h1V269h3V270h1V271h1V270h3V271h4V270h1V271h3V270h9V269h3V270h1V269h1V268h1V269h1V268h5V267h5V266h5V265h1V266h1V265h4V264h5V263h3V262h1V263h1V265h1V264h1V266h1V268h1V272h1V273h1V275h1V280h1V288h1V286h1V287h1V293h2V297h1V298h1V300h1V301h2V306h1V311h1V309h1V317h1V315h1V318h1V324h1V328h2V327h1V325h1V322h1V320h1V315h1V314h1V319h2V315h1V314h1V315h1V316h1V313h1V314h1V310h2V309h2V312h1V313h1V310h1V311h1V312h1V313h1V319h1V315h1V316h1V314h1V316h2V313h1V316h1V318h1V320h1V322h1V261Z" fill="#1CF61C" transform="translate(0 261.5) scale(1 0.62) translate(0 -261.5)"/><path d="M714 261V260h3V259h1V258h3V257h4V256h1V255h4V254h1V253h1V254h1V253h1V252h2V251h4V250h1V249h2V250h1V249h4V248h2V249h2V248h3V247h2V246h4V245h8V246h2V247h1V248h1V249h1V250h3V249h2V247h2V246h2V244h3V243h1V242h1V241h2V240h5V239h4V240h6V241h1V242h2V243h3V244h1V245h3V246h1V245h3V246h1V244h2V243h2V241h2V240h1V239h2V238h1V237h1V238h1V237h1V236h1V235h1V234h1V232h1V231h1V229h6V230h1V228h2V227h2V229h2V230h1V231h1V232h1V233h1V234h1V236h1V237h2V238h2V239h1V240h1V242h1V243h1V244h1V246h1V245h3V244h5V243h1V244h1V243h3V242h1V243h3V242h4V241h2V240h4V239h2V238h5V237h3V236h3V235h1V234h2V233h3V232h1V231h3V232h5V233h4V235h1V236h1V237h1V239h1V240h1V242h1V244h1V246h2V245h1V244h1V243h1V242h2V241h1V240h8V241h7V240h1V241h1V240h4V239h3V238h1V237h3V236h3V235h1V234h2V233h1V231h2V230h2V229h1V228h1V227h4V226h1V227h1V226h1V228h4V229h3V231h1V232h1V234h1V235h1V237h1V239h1V240h1V241h1V242h1V243h1V244h2V245h1V244h1V243h1V242h1V241h1V240h1V239h1V238h1V237h3V238h1V239h2V241h1V242h4V243h2V244h1V243h1V245h1V248h1V249h1V247h2V246h1V244h2V243h1V241h3V240h1V239h1V238h1V237h2V236h2V234h2V233h2V232h2V231h1V229h2V228h2V227h2V226h3V227h2V228h1V229h1V228h1V229h1V230h2V231h2V232h1V233h2V235h2V236h2V237h2V238h2V239h1V240h3V241h4V242h4V243h1V242h3V241h1V240h4V239h2V238h1V237h2V236h2V235h1V234h2V232h1V231h1V230h2V229h1V228h1V226h2V224h2V223h1V222h1V221h1V219h1V218h1V217h1V216h2V215h2V214h2V213h1V212h1V211h1V212h1V213h2V214h1V213h1V212h1V211h1V209h2V210h1V211h1V212h1V213h1V214h1V216h2V218h1V220h1V221h1V222h1V224h1V225h1V228h1V232h1V234h1V238h1V240h1V244h1V245h3V246h2V247h1V248h1V249h2V250h2V252h2V253h4V252h1V253h1V252h3V253h1V252h1V253h2V252h5V251h2V252h1V251h9V252h2V251h3V252h2V251h1V252h11V253h5V254h2V253h1V254h7V255h2V254h1V255h4V256h2V255h1V256h2V257h1V256h2V257h8V258h3V259h1V258h2V259h8V258h1V256h1V255h1V249h1V250h1V247h1V241h1V242h1V240h1V239h1V233h1V234h1V232h1V229h1V230h1V228h1V229h1V226h1V225h2V224h1V225h1V222h1V226h2V221h1V222h1V224h1V219h1V223h1V217h1V216h1V220h1V217h2V215h1V220h1V219h1V218h1V221h1V223h1V227h1V225h1V220h1V222h1V221h2V223h1V222h1V217h1V221h1V216h1V219h1V216h1V217h1V216h1V215h1V217h1V213h1V212h1V215h1V261ZM714 261V262h2V263h2V264h2V265h2V266h3V267h2V268h2V269h3V270h3V271h1V272h4V273h2V274h3V275h2V276h3V277h1V276h1V277h5V278h3V279h1V278h2V277h8V276h1V277h2V276h4V275h1V276h2V277h2V278h2V280h5V282h1V281h2V283h4V284h1V283h1V285h5V286h4V285h8V284h1V285h1V284h2V285h1V284h2V285h1V286h3V287h1V288h1V290h1V291h2V292h1V293h2V294h2V293h1V292h1V290h1V288h1V289h5V290h2V289h1V288h1V287h1V286h1V285h2V284h3V283h2V282h2V281h4V280h1V281h1V280h1V279h3V280h3V281h3V282h1V283h1V282h1V283h2V284h1V283h1V284h1V283h1V282h3V281h13V282h1V283h2V284h1V285h2V284h1V285h1V284h3V283h1V284h1V283h2V282h1V281h2V280h4V279h1V278h3V277h1V278h2V279h1V280h1V281h1V282h3V283h1V284h2V285h2V286h1V287h2V288h1V287h1V288h1V289h4V290h1V289h1V288h2V287h3V286h3V285h3V284h2V285h1V284h11V283h1V284h3V283h6V281h2V280h3V279h1V278h5V279h6V280h1V279h1V280h2V281h1V280h2V281h1V282h1V283h2V285h2V286h4V285h3V284h7V283h1V284h2V283h1V284h6V283h4V282h1V281h1V282h5V283h4V284h1V283h1V284h3V283h1V284h6V285h1V286h1V285h1V286h1V287h1V285h2V283h2V282h2V280h2V279h2V278h1V277h4V278h1V277h2V278h1V277h2V278h1V277h2V276h1V277h1V276h1V277h1V278h1V277h1V278h3V279h1V280h3V281h1V282h1V283h3V284h1V286h1V287h1V289h1V290h1V292h2V293h1V295h1V296h1V297h1V298h1V299h1V300h1V301h1V302h1V303h1V304h1V305h1V306h2V307h1V308h1V309h1V310h7V309h2V308h1V306h1V305h1V302h1V301h1V299h1V297h1V295h1V293h1V291h1V289h1V287h1V285h2V283h1V282h1V281h1V279h1V278h2V277h1V276h1V275h1V276h2V275h2V274h1V275h1V274h2V273h1V274h1V272h6V271h3V270h1V271h1V270h4V269h1V270h1V269h5V268h2V269h1V268h3V269h1V268h3V269h4V268h1V270h1V269h3V270h1V271h1V270h3V271h4V270h1V271h3V270h9V269h3V270h1V269h1V268h1V269h1V268h5V267h5V266h5V265h1V266h1V265h4V264h5V263h3V262h1V263h1V265h1V264h1V266h1V268h1V272h1V273h1V275h1V280h1V288h1V286h1V287h1V293h2V297h1V298h1V300h1V301h2V306h1V311h1V309h1V317h1V315h1V318h1V324h1V328h2V327h1V325h1V322h1V320h1V315h1V314h1V319h2V315h1V314h1V315h1V316h1V313h1V314h1V310h2V309h2V312h1V313h1V310h1V311h1V312h1V313h1V319h1V315h1V316h1V314h1V316h2V313h1V316h1V318h1V320h1V322h1V261Z" fill="#12EE12" transform="translate(0 261.5) scale(1 0.46) translate(0 -261.5)"/><path d="M714 261V260h3V259h1V258h3V257h4V256h1V255h4V254h1V253h1V254h1V253h1V252h2V251h4V250h1V249h2V250h1V249h4V248h2V249h2V248h3V247h2V246h4V245h8V246h2V247h1V248h1V249h1V250h3V249h2V247h2V246h2V244h3V243h1V242h1V241h2V240h5V239h4V240h6V241h1V242h2V243h3V244h1V245h3V246h1V245h3V246h1V244h2V243h2V241h2V240h1V239h2V238h1V237h1V238h1V237h1V236h1V235h1V234h1V232h1V231h1V229h6V230h1V228h2V227h2V229h2V230h1V231h1V232h1V233h1V234h1V236h1V237h2V238h2V239h1V240h1V242h1V243h1V244h1V246h1V245h3V244h5V243h1V244h1V243h3V242h1V243h3V242h4V241h2V240h4V239h2V238h5V237h3V236h3V235h1V234h2V233h3V232h1V231h3V232h5V233h4V235h1V236h1V237h1V239h1V240h1V242h1V244h1V246h2V245h1V244h1V243h1V242h2V241h1V240h8V241h7V240h1V241h1V240h4V239h3V238h1V237h3V236h3V235h1V234h2V233h1V231h2V230h2V229h1V228h1V227h4V226h1V227h1V226h1V228h4V229h3V231h1V232h1V234h1V235h1V237h1V239h1V240h1V241h1V242h1V243h1V244h2V245h1V244h1V243h1V242h1V241h1V240h1V239h1V238h1V237h3V238h1V239h2V241h1V242h4V243h2V244h1V243h1V245h1V248h1V249h1V247h2V246h1V244h2V243h1V241h3V240h1V239h1V238h1V237h2V236h2V234h2V233h2V232h2V231h1V229h2V228h2V227h2V226h3V227h2V228h1V229h1V228h1V229h1V230h2V231h2V232h1V233h2V235h2V236h2V237h2V238h2V239h1V240h3V241h4V242h4V243h1V242h3V241h1V240h4V239h2V238h1V237h2V236h2V235h1V234h2V232h1V231h1V230h2V229h1V228h1V226h2V224h2V223h1V222h1V221h1V219h1V218h1V217h1V216h2V215h2V214h2V213h1V212h1V211h1V212h1V213h2V214h1V213h1V212h1V211h1V209h2V210h1V211h1V212h1V213h1V214h1V216h2V218h1V220h1V221h1V222h1V224h1V225h1V228h1V232h1V234h1V238h1V240h1V244h1V245h3V246h2V247h1V248h1V249h2V250h2V252h2V253h4V252h1V253h1V252h3V253h1V252h1V253h2V252h5V251h2V252h1V251h9V252h2V251h3V252h2V251h1V252h11V253h5V254h2V253h1V254h7V255h2V254h1V255h4V256h2V255h1V256h2V257h1V256h2V257h8V258h3V259h1V258h2V259h8V258h1V256h1V255h1V249h1V250h1V247h1V241h1V242h1V240h1V239h1V233h1V234h1V232h1V229h1V230h1V228h1V229h1V226h1V225h2V224h1V225h1V222h1V226h2V221h1V222h1V224h1V219h1V223h1V217h1V216h1V220h1V217h2V215h1V220h1V219h1V218h1V221h1V223h1V227h1V225h1V220h1V222h1V221h2V223h1V222h1V217h1V221h1V216h1V219h1V216h1V217h1V216h1V215h1V217h1V213h1V212h1V215h1V261ZM714 261V262h2V263h2V264h2V265h2V266h3V267h2V268h2V269h3V270h3V271h1V272h4V273h2V274h3V275h2V276h3V277h1V276h1V277h5V278h3V279h1V278h2V277h8V276h1V277h2V276h4V275h1V276h2V277h2V278h2V280h5V282h1V281h2V283h4V284h1V283h1V285h5V286h4V285h8V284h1V285h1V284h2V285h1V284h2V285h1V286h3V287h1V288h1V290h1V291h2V292h1V293h2V294h2V293h1V292h1V290h1V288h1V289h5V290h2V289h1V288h1V287h1V286h1V285h2V284h3V283h2V282h2V281h4V280h1V281h1V280h1V279h3V280h3V281h3V282h1V283h1V282h1V283h2V284h1V283h1V284h1V283h1V282h3V281h13V282h1V283h2V284h1V285h2V284h1V285h1V284h3V283h1V284h1V283h2V282h1V281h2V280h4V279h1V278h3V277h1V278h2V279h1V280h1V281h1V282h3V283h1V284h2V285h2V286h1V287h2V288h1V287h1V288h1V289h4V290h1V289h1V288h2V287h3V286h3V285h3V284h2V285h1V284h11V283h1V284h3V283h6V281h2V280h3V279h1V278h5V279h6V280h1V279h1V280h2V281h1V280h2V281h1V282h1V283h2V285h2V286h4V285h3V284h7V283h1V284h2V283h1V284h6V283h4V282h1V281h1V282h5V283h4V284h1V283h1V284h3V283h1V284h6V285h1V286h1V285h1V286h1V287h1V285h2V283h2V282h2V280h2V279h2V278h1V277h4V278h1V277h2V278h1V277h2V278h1V277h2V276h1V277h1V276h1V277h1V278h1V277h1V278h3V279h1V280h3V281h1V282h1V283h3V284h1V286h1V287h1V289h1V290h1V292h2V293h1V295h1V296h1V297h1V298h1V299h1V300h1V301h1V302h1V303h1V304h1V305h1V306h2V307h1V308h1V309h1V310h7V309h2V308h1V306h1V305h1V302h1V301h1V299h1V297h1V295h1V293h1V291h1V289h1V287h1V285h2V283h1V282h1V281h1V279h1V278h2V277h1V276h1V275h1V276h2V275h2V274h1V275h1V274h2V273h1V274h1V272h6V271h3V270h1V271h1V270h4V269h1V270h1V269h5V268h2V269h1V268h3V269h1V268h3V269h4V268h1V270h1V269h3V270h1V271h1V270h3V271h4V270h1V271h3V270h9V269h3V270h1V269h1V268h1V269h1V268h5V267h5V266h5V265h1V266h1V265h4V264h5V263h3V262h1V263h1V265h1V264h1V266h1V268h1V272h1V273h1V275h1V280h1V288h1V286h1V287h1V293h2V297h1V298h1V300h1V301h2V306h1V311h1V309h1V317h1V315h1V318h1V324h1V328h2V327h1V325h1V322h1V320h1V315h1V314h1V319h2V315h1V314h1V315h1V316h1V313h1V314h1V310h2V309h2V312h1V313h1V310h1V311h1V312h1V313h1V319h1V315h1V316h1V314h1V316h2V313h1V316h1V318h1V320h1V322h1V261Z" fill="#0AE40A" transform="translate(0 261.5) scale(1 0.32) translate(0 -261.5)"/><path d="M714 261V260h3V259h1V258h3V257h4V256h1V255h4V254h1V253h1V254h1V253h1V252h2V251h4V250h1V249h2V250h1V249h4V248h2V249h2V248h3V247h2V246h4V245h8V246h2V247h1V248h1V249h1V250h3V249h2V247h2V246h2V244h3V243h1V242h1V241h2V240h5V239h4V240h6V241h1V242h2V243h3V244h1V245h3V246h1V245h3V246h1V244h2V243h2V241h2V240h1V239h2V238h1V237h1V238h1V237h1V236h1V235h1V234h1V232h1V231h1V229h6V230h1V228h2V227h2V229h2V230h1V231h1V232h1V233h1V234h1V236h1V237h2V238h2V239h1V240h1V242h1V243h1V244h1V246h1V245h3V244h5V243h1V244h1V243h3V242h1V243h3V242h4V241h2V240h4V239h2V238h5V237h3V236h3V235h1V234h2V233h3V232h1V231h3V232h5V233h4V235h1V236h1V237h1V239h1V240h1V242h1V244h1V246h2V245h1V244h1V243h1V242h2V241h1V240h8V241h7V240h1V241h1V240h4V239h3V238h1V237h3V236h3V235h1V234h2V233h1V231h2V230h2V229h1V228h1V227h4V226h1V227h1V226h1V228h4V229h3V231h1V232h1V234h1V235h1V237h1V239h1V240h1V241h1V242h1V243h1V244h2V245h1V244h1V243h1V242h1V241h1V240h1V239h1V238h1V237h3V238h1V239h2V241h1V242h4V243h2V244h1V243h1V245h1V248h1V249h1V247h2V246h1V244h2V243h1V241h3V240h1V239h1V238h1V237h2V236h2V234h2V233h2V232h2V231h1V229h2V228h2V227h2V226h3V227h2V228h1V229h1V228h1V229h1V230h2V231h2V232h1V233h2V235h2V236h2V237h2V238h2V239h1V240h3V241h4V242h4V243h1V242h3V241h1V240h4V239h2V238h1V237h2V236h2V235h1V234h2V232h1V231h1V230h2V229h1V228h1V226h2V224h2V223h1V222h1V221h1V219h1V218h1V217h1V216h2V215h2V214h2V213h1V212h1V211h1V212h1V213h2V214h1V213h1V212h1V211h1V209h2V210h1V211h1V212h1V213h1V214h1V216h2V218h1V220h1V221h1V222h1V224h1V225h1V228h1V232h1V234h1V238h1V240h1V244h1V245h3V246h2V247h1V248h1V249h2V250h2V252h2V253h4V252h1V253h1V252h3V253h1V252h1V253h2V252h5V251h2V252h1V251h9V252h2V251h3V252h2V251h1V252h11V253h5V254h2V253h1V254h7V255h2V254h1V255h4V256h2V255h1V256h2V257h1V256h2V257h8V258h3V259h1V258h2V259h8V258h1V256h1V255h1V249h1V250h1V247h1V241h1V242h1V240h1V239h1V233h1V234h1V232h1V229h1V230h1V228h1V229h1V226h1V225h2V224h1V225h1V222h1V226h2V221h1V222h1V224h1V219h1V223h1V217h1V216h1V220h1V217h2V215h1V220h1V219h1V218h1V221h1V223h1V227h1V225h1V220h1V222h1V221h2V223h1V222h1V217h1V221h1V216h1V219h1V216h1V217h1V216h1V215h1V217h1V213h1V212h1V215h1V261ZM714 261V262h2V263h2V264h2V265h2V266h3V267h2V268h2V269h3V270h3V271h1V272h4V273h2V274h3V275h2V276h3V277h1V276h1V277h5V278h3V279h1V278h2V277h8V276h1V277h2V276h4V275h1V276h2V277h2V278h2V280h5V282h1V281h2V283h4V284h1V283h1V285h5V286h4V285h8V284h1V285h1V284h2V285h1V284h2V285h1V286h3V287h1V288h1V290h1V291h2V292h1V293h2V294h2V293h1V292h1V290h1V288h1V289h5V290h2V289h1V288h1V287h1V286h1V285h2V284h3V283h2V282h2V281h4V280h1V281h1V280h1V279h3V280h3V281h3V282h1V283h1V282h1V283h2V284h1V283h1V284h1V283h1V282h3V281h13V282h1V283h2V284h1V285h2V284h1V285h1V284h3V283h1V284h1V283h2V282h1V281h2V280h4V279h1V278h3V277h1V278h2V279h1V280h1V281h1V282h3V283h1V284h2V285h2V286h1V287h2V288h1V287h1V288h1V289h4V290h1V289h1V288h2V287h3V286h3V285h3V284h2V285h1V284h11V283h1V284h3V283h6V281h2V280h3V279h1V278h5V279h6V280h1V279h1V280h2V281h1V280h2V281h1V282h1V283h2V285h2V286h4V285h3V284h7V283h1V284h2V283h1V284h6V283h4V282h1V281h1V282h5V283h4V284h1V283h1V284h3V283h1V284h6V285h1V286h1V285h1V286h1V287h1V285h2V283h2V282h2V280h2V279h2V278h1V277h4V278h1V277h2V278h1V277h2V278h1V277h2V276h1V277h1V276h1V277h1V278h1V277h1V278h3V279h1V280h3V281h1V282h1V283h3V284h1V286h1V287h1V289h1V290h1V292h2V293h1V295h1V296h1V297h1V298h1V299h1V300h1V301h1V302h1V303h1V304h1V305h1V306h2V307h1V308h1V309h1V310h7V309h2V308h1V306h1V305h1V302h1V301h1V299h1V297h1V295h1V293h1V291h1V289h1V287h1V285h2V283h1V282h1V281h1V279h1V278h2V277h1V276h1V275h1V276h2V275h2V274h1V275h1V274h2V273h1V274h1V272h6V271h3V270h1V271h1V270h4V269h1V270h1V269h5V268h2V269h1V268h3V269h1V268h3V269h4V268h1V270h1V269h3V270h1V271h1V270h3V271h4V270h1V271h3V270h9V269h3V270h1V269h1V268h1V269h1V268h5V267h5V266h5V265h1V266h1V265h4V264h5V263h3V262h1V263h1V265h1V264h1V266h1V268h1V272h1V273h1V275h1V280h1V288h1V286h1V287h1V293h2V297h1V298h1V300h1V301h2V306h1V311h1V309h1V317h1V315h1V318h1V324h1V328h2V327h1V325h1V322h1V320h1V315h1V314h1V319h2V315h1V314h1V315h1V316h1V313h1V314h1V310h2V309h2V312h1V313h1V310h1V311h1V312h1V313h1V319h1V315h1V316h1V314h1V316h2V313h1V316h1V318h1V320h1V322h1V261Z" fill="#04D804" transform="translate(0 261.5) scale(1 0.19) translate(0 -261.5)"/><path d="M714 261V260h3V259h1V258h3V257h4V256h1V255h4V254h1V253h1V254h1V253h1V252h2V251h4V250h1V249h2V250h1V249h4V248h2V249h2V248h3V247h2V246h4V245h8V246h2V247h1V248h1V249h1V250h3V249h2V247h2V246h2V244h3V243h1V242h1V241h2V240h5V239h4V240h6V241h1V242h2V243h3V244h1V245h3V246h1V245h3V246h1V244h2V243h2V241h2V240h1V239h2V238h1V237h1V238h1V237h1V236h1V235h1V234h1V232h1V231h1V229h6V230h1V228h2V227h2V229h2V230h1V231h1V232h1V233h1V234h1V236h1V237h2V238h2V239h1V240h1V242h1V243h1V244h1V246h1V245h3V244h5V243h1V244h1V243h3V242h1V243h3V242h4V241h2V240h4V239h2V238h5V237h3V236h3V235h1V234h2V233h3V232h1V231h3V232h5V233h4V235h1V236h1V237h1V239h1V240h1V242h1V244h1V246h2V245h1V244h1V243h1V242h2V241h1V240h8V241h7V240h1V241h1V240h4V239h3V238h1V237h3V236h3V235h1V234h2V233h1V231h2V230h2V229h1V228h1V227h4V226h1V227h1V226h1V228h4V229h3V231h1V232h1V234h1V235h1V237h1V239h1V240h1V241h1V242h1V243h1V244h2V245h1V244h1V243h1V242h1V241h1V240h1V239h1V238h1V237h3V238h1V239h2V241h1V242h4V243h2V244h1V243h1V245h1V248h1V249h1V247h2V246h1V244h2V243h1V241h3V240h1V239h1V238h1V237h2V236h2V234h2V233h2V232h2V231h1V229h2V228h2V227h2V226h3V227h2V228h1V229h1V228h1V229h1V230h2V231h2V232h1V233h2V235h2V236h2V237h2V238h2V239h1V240h3V241h4V242h4V243h1V242h3V241h1V240h4V239h2V238h1V237h2V236h2V235h1V234h2V232h1V231h1V230h2V229h1V228h1V226h2V224h2V223h1V222h1V221h1V219h1V218h1V217h1V216h2V215h2V214h2V213h1V212h1V211h1V212h1V213h2V214h1V213h1V212h1V211h1V209h2V210h1V211h1V212h1V213h1V214h1V216h2V218h1V220h1V221h1V222h1V224h1V225h1V228h1V232h1V234h1V238h1V240h1V244h1V245h3V246h2V247h1V248h1V249h2V250h2V252h2V253h4V252h1V253h1V252h3V253h1V252h1V253h2V252h5V251h2V252h1V251h9V252h2V251h3V252h2V251h1V252h11V253h5V254h2V253h1V254h7V255h2V254h1V255h4V256h2V255h1V256h2V257h1V256h2V257h8V258h3V259h1V258h2V259h8V258h1V256h1V255h1V249h1V250h1V247h1V241h1V242h1V240h1V239h1V233h1V234h1V232h1V229h1V230h1V228h1V229h1V226h1V225h2V224h1V225h1V222h1V226h2V221h1V222h1V224h1V219h1V223h1V217h1V216h1V220h1V217h2V215h1V220h1V219h1V218h1V221h1V223h1V227h1V225h1V220h1V222h1V221h2V223h1V222h1V217h1V221h1V216h1V219h1V216h1V217h1V216h1V215h1V217h1V213h1V212h1V215h1V261ZM714 261V262h2V263h2V264h2V265h2V266h3V267h2V268h2V269h3V270h3V271h1V272h4V273h2V274h3V275h2V276h3V277h1V276h1V277h5V278h3V279h1V278h2V277h8V276h1V277h2V276h4V275h1V276h2V277h2V278h2V280h5V282h1V281h2V283h4V284h1V283h1V285h5V286h4V285h8V284h1V285h1V284h2V285h1V284h2V285h1V286h3V287h1V288h1V290h1V291h2V292h1V293h2V294h2V293h1V292h1V290h1V288h1V289h5V290h2V289h1V288h1V287h1V286h1V285h2V284h3V283h2V282h2V281h4V280h1V281h1V280h1V279h3V280h3V281h3V282h1V283h1V282h1V283h2V284h1V283h1V284h1V283h1V282h3V281h13V282h1V283h2V284h1V285h2V284h1V285h1V284h3V283h1V284h1V283h2V282h1V281h2V280h4V279h1V278h3V277h1V278h2V279h1V280h1V281h1V282h3V283h1V284h2V285h2V286h1V287h2V288h1V287h1V288h1V289h4V290h1V289h1V288h2V287h3V286h3V285h3V284h2V285h1V284h11V283h1V284h3V283h6V281h2V280h3V279h1V278h5V279h6V280h1V279h1V280h2V281h1V280h2V281h1V282h1V283h2V285h2V286h4V285h3V284h7V283h1V284h2V283h1V284h6V283h4V282h1V281h1V282h5V283h4V284h1V283h1V284h3V283h1V284h6V285h1V286h1V285h1V286h1V287h1V285h2V283h2V282h2V280h2V279h2V278h1V277h4V278h1V277h2V278h1V277h2V278h1V277h2V276h1V277h1V276h1V277h1V278h1V277h1V278h3V279h1V280h3V281h1V282h1V283h3V284h1V286h1V287h1V289h1V290h1V292h2V293h1V295h1V296h1V297h1V298h1V299h1V300h1V301h1V302h1V303h1V304h1V305h1V306h2V307h1V308h1V309h1V310h7V309h2V308h1V306h1V305h1V302h1V301h1V299h1V297h1V295h1V293h1V291h1V289h1V287h1V285h2V283h1V282h1V281h1V279h1V278h2V277h1V276h1V275h1V276h2V275h2V274h1V275h1V274h2V273h1V274h1V272h6V271h3V270h1V271h1V270h4V269h1V270h1V269h5V268h2V269h1V268h3V269h1V268h3V269h4V268h1V270h1V269h3V270h1V271h1V270h3V271h4V270h1V271h3V270h9V269h3V270h1V269h1V268h1V269h1V268h5V267h5V266h5V265h1V266h1V265h4V264h5V263h3V262h1V263h1V265h1V264h1V266h1V268h1V272h1V273h1V275h1V280h1V288h1V286h1V287h1V293h2V297h1V298h1V300h1V301h2V306h1V311h1V309h1V317h1V315h1V318h1V324h1V328h2V327h1V325h1V322h1V320h1V315h1V314h1V319h2V315h1V314h1V315h1V316h1V313h1V314h1V310h2V309h2V312h1V313h1V310h1V311h1V312h1V313h1V319h1V315h1V316h1V314h1V316h2V313h1V316h1V318h1V320h1V322h1V261Z" fill="#00CA00" transform="translate(0 261.5) scale(1 0.08) translate(0 -261.5)"/><rect x="17" y="502" width="702" height="1" fill="#F00000"/><rect x="17" y="503" width="702" height="1" fill="#B00000"/><rect x="376" y="501" width="2" height="1" fill="#F00000"/><path d="M717 503V502h6V501h5V500h4V499h1V500h1V499h2V498h5V497h2V498h1V497h2V496h8V495h7V494h1V495h2V494h1V495h1V494h10V493h1V492h2V491h1V490h2V489h2V488h4V487h5V486h5V487h2V486h1V487h1V486h1V487h4V488h1V487h1V488h2V489h1V488h1V489h3V490h4V489h1V488h1V487h2V486h2V485h1V484h6V485h1V484h1V485h2V484h1V485h2V486h1V487h2V488h2V489h2V490h1V491h9V492h1V491h2V492h1V491h4V490h3V489h1V490h1V489h3V488h3V487h4V486h1V487h2V486h13V485h7V486h4V487h3V488h3V489h2V490h2V491h2V492h3V493h2V492h7V491h2V490h1V489h2V488h1V487h2V486h1V485h1V484h4V483h2V484h1V483h4V482h1V483h1V482h2V483h1V482h6V483h1V482h4V483h1V482h1V483h1V482h1V483h4V484h2V485h2V486h3V487h2V488h3V489h4V490h2V491h3V492h1V491h9V490h1V489h3V487h2V486h2V485h3V484h1V485h1V484h4V485h1V484h1V485h2V484h1V485h7V484h3V483h1V484h1V483h1V484h1V483h6V484h1V483h1V484h4V485h4V486h2V487h2V488h2V489h2V490h2V491h2V492h1V493h3V494h2V495h3V494h1V495h4V494h6V493h2V494h1V493h5V492h1V493h1V492h7V491h1V492h1V491h5V490h7V489h3V488h4V487h3V486h7V485h3V486h3V485h9V486h3V487h3V488h3V489h1V490h2V491h1V492h3V493h1V494h6V495h4V496h5V497h2V496h1V497h4V498h2V497h1V498h6V497h2V496h1V497h1V496h2V495h2V496h1V495h7V496h1V495h2V496h12V497h1V496h3V497h1V496h4V497h5V498h2V497h2V498h3V499h2V498h1V499h1V498h1V499h10V500h1V499h3V500h1V499h1V500h1V499h1V500h3V499h3V500h3V498h2V496h1V495h1V494h1V492h1V494h1V491h2V493h1V489h1V488h3V486h1V488h1V489h1V485h1V486h1V484h1V485h1V486h1V485h2V484h1V488h1V484h1V489h1V485h1V487h1V488h1V490h1V489h2V487h1V486h1V490h1V486h1V489h1V486h1V489h1V486h1V488h1V486h2V485h1V487h1V488h2V486h1V485h1V487h2V486h1V484h1V485h1V486h3V483h1V503ZM717 503V504h4V505h5V506h7V507h7V508h8V509h6V510h1V509h1V510h3V509h1V510h1V509h1V510h1V509h3V510h2V509h1V510h8V511h3V512h3V513h3V514h1V515h3V516h1V517h2V518h2V519h1V518h1V519h4V520h9V519h1V518h1V519h1V518h5V517h3V516h2V515h2V514h5V515h2V514h1V515h1V514h4V515h1V514h2V513h1V514h1V513h4V512h22V513h5V514h7V515h2V514h3V515h9V516h4V517h1V516h1V517h1V518h1V517h1V518h7V517h1V518h1V517h7V516h6V515h3V514h1V515h2V514h1V515h2V516h2V517h2V518h13V519h1V518h5V517h3V518h2V517h10V518h1V517h1V518h2V517h1V518h1V517h1V518h1V517h11V516h3V515h5V514h3V515h6V516h3V515h1V516h2V517h2V518h2V519h3V518h6V517h5V516h1V517h1V516h1V517h1V516h11V515h1V516h10V517h3V518h2V517h1V518h4V517h1V516h1V517h1V516h2V515h3V514h7V513h4V512h11V513h10V514h2V515h2V514h1V515h2V516h1V515h1V516h2V517h2V518h2V519h3V520h2V521h2V522h6V523h1V522h2V523h1V522h1V523h2V522h2V521h4V520h1V519h3V518h2V517h3V516h2V515h3V514h1V513h2V512h2V511h1V510h3V509h2V508h8V507h3V508h1V507h5V508h1V507h2V508h7V509h2V508h1V509h2V510h1V509h1V510h5V511h3V510h1V511h3V510h1V511h1V510h1V511h4V510h5V509h1V510h2V509h5V508h8V507h6V506h1V507h1V506h11V505h1V506h1V505h1V506h2V505h2V506h1V505h3V506h1V505h5V506h2V507h1V508h3V509h1V512h1V511h1V513h2V517h1V516h1V518h1V519h3V522h1V521h1V522h1V523h1V527h1V525h1V528h2V527h1V530h1V529h1V527h1V526h1V524h1V522h1V525h1V526h1V522h1V521h1V524h1V521h1V522h1V523h1V522h2V519h2V520h1V521h1V517h1V520h2V521h1V518h1V517h1V516h1V517h1V521h1V517h1V518h1V517h1V522h1V520h1V521h1V503Z" fill="#FF2424"/><path d="M717 503V502h6V501h5V500h4V499h1V500h1V499h2V498h5V497h2V498h1V497h2V496h8V495h7V494h1V495h2V494h1V495h1V494h10V493h1V492h2V491h1V490h2V489h2V488h4V487h5V486h5V487h2V486h1V487h1V486h1V487h4V488h1V487h1V488h2V489h1V488h1V489h3V490h4V489h1V488h1V487h2V486h2V485h1V484h6V485h1V484h1V485h2V484h1V485h2V486h1V487h2V488h2V489h2V490h1V491h9V492h1V491h2V492h1V491h4V490h3V489h1V490h1V489h3V488h3V487h4V486h1V487h2V486h13V485h7V486h4V487h3V488h3V489h2V490h2V491h2V492h3V493h2V492h7V491h2V490h1V489h2V488h1V487h2V486h1V485h1V484h4V483h2V484h1V483h4V482h1V483h1V482h2V483h1V482h6V483h1V482h4V483h1V482h1V483h1V482h1V483h4V484h2V485h2V486h3V487h2V488h3V489h4V490h2V491h3V492h1V491h9V490h1V489h3V487h2V486h2V485h3V484h1V485h1V484h4V485h1V484h1V485h2V484h1V485h7V484h3V483h1V484h1V483h1V484h1V483h6V484h1V483h1V484h4V485h4V486h2V487h2V488h2V489h2V490h2V491h2V492h1V493h3V494h2V495h3V494h1V495h4V494h6V493h2V494h1V493h5V492h1V493h1V492h7V491h1V492h1V491h5V490h7V489h3V488h4V487h3V486h7V485h3V486h3V485h9V486h3V487h3V488h3V489h1V490h2V491h1V492h3V493h1V494h6V495h4V496h5V497h2V496h1V497h4V498h2V497h1V498h6V497h2V496h1V497h1V496h2V495h2V496h1V495h7V496h1V495h2V496h12V497h1V496h3V497h1V496h4V497h5V498h2V497h2V498h3V499h2V498h1V499h1V498h1V499h10V500h1V499h3V500h1V499h1V500h1V499h1V500h3V499h3V500h3V498h2V496h1V495h1V494h1V492h1V494h1V491h2V493h1V489h1V488h3V486h1V488h1V489h1V485h1V486h1V484h1V485h1V486h1V485h2V484h1V488h1V484h1V489h1V485h1V487h1V488h1V490h1V489h2V487h1V486h1V490h1V486h1V489h1V486h1V489h1V486h1V488h1V486h2V485h1V487h1V488h2V486h1V485h1V487h2V486h1V484h1V485h1V486h3V483h1V503ZM717 503V504h4V505h5V506h7V507h7V508h8V509h6V510h1V509h1V510h3V509h1V510h1V509h1V510h1V509h3V510h2V509h1V510h8V511h3V512h3V513h3V514h1V515h3V516h1V517h2V518h2V519h1V518h1V519h4V520h9V519h1V518h1V519h1V518h5V517h3V516h2V515h2V514h5V515h2V514h1V515h1V514h4V515h1V514h2V513h1V514h1V513h4V512h22V513h5V514h7V515h2V514h3V515h9V516h4V517h1V516h1V517h1V518h1V517h1V518h7V517h1V518h1V517h7V516h6V515h3V514h1V515h2V514h1V515h2V516h2V517h2V518h13V519h1V518h5V517h3V518h2V517h10V518h1V517h1V518h2V517h1V518h1V517h1V518h1V517h11V516h3V515h5V514h3V515h6V516h3V515h1V516h2V517h2V518h2V519h3V518h6V517h5V516h1V517h1V516h1V517h1V516h11V515h1V516h10V517h3V518h2V517h1V518h4V517h1V516h1V517h1V516h2V515h3V514h7V513h4V512h11V513h10V514h2V515h2V514h1V515h2V516h1V515h1V516h2V517h2V518h2V519h3V520h2V521h2V522h6V523h1V522h2V523h1V522h1V523h2V522h2V521h4V520h1V519h3V518h2V517h3V516h2V515h3V514h1V513h2V512h2V511h1V510h3V509h2V508h8V507h3V508h1V507h5V508h1V507h2V508h7V509h2V508h1V509h2V510h1V509h1V510h5V511h3V510h1V511h3V510h1V511h1V510h1V511h4V510h5V509h1V510h2V509h5V508h8V507h6V506h1V507h1V506h11V505h1V506h1V505h1V506h2V505h2V506h1V505h3V506h1V505h5V506h2V507h1V508h3V509h1V512h1V511h1V513h2V517h1V516h1V518h1V519h3V522h1V521h1V522h1V523h1V527h1V525h1V528h2V527h1V530h1V529h1V527h1V526h1V524h1V522h1V525h1V526h1V522h1V521h1V524h1V521h1V522h1V523h1V522h2V519h2V520h1V521h1V517h1V520h2V521h1V518h1V517h1V516h1V517h1V521h1V517h1V518h1V517h1V522h1V520h1V521h1V503Z" fill="#FD1E1E" transform="translate(0 503.5) scale(1 0.8) translate(0 -503.5)"/><path d="M717 503V502h6V501h5V500h4V499h1V500h1V499h2V498h5V497h2V498h1V497h2V496h8V495h7V494h1V495h2V494h1V495h1V494h10V493h1V492h2V491h1V490h2V489h2V488h4V487h5V486h5V487h2V486h1V487h1V486h1V487h4V488h1V487h1V488h2V489h1V488h1V489h3V490h4V489h1V488h1V487h2V486h2V485h1V484h6V485h1V484h1V485h2V484h1V485h2V486h1V487h2V488h2V489h2V490h1V491h9V492h1V491h2V492h1V491h4V490h3V489h1V490h1V489h3V488h3V487h4V486h1V487h2V486h13V485h7V486h4V487h3V488h3V489h2V490h2V491h2V492h3V493h2V492h7V491h2V490h1V489h2V488h1V487h2V486h1V485h1V484h4V483h2V484h1V483h4V482h1V483h1V482h2V483h1V482h6V483h1V482h4V483h1V482h1V483h1V482h1V483h4V484h2V485h2V486h3V487h2V488h3V489h4V490h2V491h3V492h1V491h9V490h1V489h3V487h2V486h2V485h3V484h1V485h1V484h4V485h1V484h1V485h2V484h1V485h7V484h3V483h1V484h1V483h1V484h1V483h6V484h1V483h1V484h4V485h4V486h2V487h2V488h2V489h2V490h2V491h2V492h1V493h3V494h2V495h3V494h1V495h4V494h6V493h2V494h1V493h5V492h1V493h1V492h7V491h1V492h1V491h5V490h7V489h3V488h4V487h3V486h7V485h3V486h3V485h9V486h3V487h3V488h3V489h1V490h2V491h1V492h3V493h1V494h6V495h4V496h5V497h2V496h1V497h4V498h2V497h1V498h6V497h2V496h1V497h1V496h2V495h2V496h1V495h7V496h1V495h2V496h12V497h1V496h3V497h1V496h4V497h5V498h2V497h2V498h3V499h2V498h1V499h1V498h1V499h10V500h1V499h3V500h1V499h1V500h1V499h1V500h3V499h3V500h3V498h2V496h1V495h1V494h1V492h1V494h1V491h2V493h1V489h1V488h3V486h1V488h1V489h1V485h1V486h1V484h1V485h1V486h1V485h2V484h1V488h1V484h1V489h1V485h1V487h1V488h1V490h1V489h2V487h1V486h1V490h1V486h1V489h1V486h1V489h1V486h1V488h1V486h2V485h1V487h1V488h2V486h1V485h1V487h2V486h1V484h1V485h1V486h3V483h1V503ZM717 503V504h4V505h5V506h7V507h7V508h8V509h6V510h1V509h1V510h3V509h1V510h1V509h1V510h1V509h3V510h2V509h1V510h8V511h3V512h3V513h3V514h1V515h3V516h1V517h2V518h2V519h1V518h1V519h4V520h9V519h1V518h1V519h1V518h5V517h3V516h2V515h2V514h5V515h2V514h1V515h1V514h4V515h1V514h2V513h1V514h1V513h4V512h22V513h5V514h7V515h2V514h3V515h9V516h4V517h1V516h1V517h1V518h1V517h1V518h7V517h1V518h1V517h7V516h6V515h3V514h1V515h2V514h1V515h2V516h2V517h2V518h13V519h1V518h5V517h3V518h2V517h10V518h1V517h1V518h2V517h1V518h1V517h1V518h1V517h11V516h3V515h5V514h3V515h6V516h3V515h1V516h2V517h2V518h2V519h3V518h6V517h5V516h1V517h1V516h1V517h1V516h11V515h1V516h10V517h3V518h2V517h1V518h4V517h1V516h1V517h1V516h2V515h3V514h7V513h4V512h11V513h10V514h2V515h2V514h1V515h2V516h1V515h1V516h2V517h2V518h2V519h3V520h2V521h2V522h6V523h1V522h2V523h1V522h1V523h2V522h2V521h4V520h1V519h3V518h2V517h3V516h2V515h3V514h1V513h2V512h2V511h1V510h3V509h2V508h8V507h3V508h1V507h5V508h1V507h2V508h7V509h2V508h1V509h2V510h1V509h1V510h5V511h3V510h1V511h3V510h1V511h1V510h1V511h4V510h5V509h1V510h2V509h5V508h8V507h6V506h1V507h1V506h11V505h1V506h1V505h1V506h2V505h2V506h1V505h3V506h1V505h5V506h2V507h1V508h3V509h1V512h1V511h1V513h2V517h1V516h1V518h1V519h3V522h1V521h1V522h1V523h1V527h1V525h1V528h2V527h1V530h1V529h1V527h1V526h1V524h1V522h1V525h1V526h1V522h1V521h1V524h1V521h1V522h1V523h1V522h2V519h2V520h1V521h1V517h1V520h2V521h1V518h1V517h1V516h1V517h1V521h1V517h1V518h1V517h1V522h1V520h1V521h1V503Z" fill="#F91616" transform="translate(0 503.5) scale(1 0.62) translate(0 -503.5)"/><path d="M717 503V502h6V501h5V500h4V499h1V500h1V499h2V498h5V497h2V498h1V497h2V496h8V495h7V494h1V495h2V494h1V495h1V494h10V493h1V492h2V491h1V490h2V489h2V488h4V487h5V486h5V487h2V486h1V487h1V486h1V487h4V488h1V487h1V488h2V489h1V488h1V489h3V490h4V489h1V488h1V487h2V486h2V485h1V484h6V485h1V484h1V485h2V484h1V485h2V486h1V487h2V488h2V489h2V490h1V491h9V492h1V491h2V492h1V491h4V490h3V489h1V490h1V489h3V488h3V487h4V486h1V487h2V486h13V485h7V486h4V487h3V488h3V489h2V490h2V491h2V492h3V493h2V492h7V491h2V490h1V489h2V488h1V487h2V486h1V485h1V484h4V483h2V484h1V483h4V482h1V483h1V482h2V483h1V482h6V483h1V482h4V483h1V482h1V483h1V482h1V483h4V484h2V485h2V486h3V487h2V488h3V489h4V490h2V491h3V492h1V491h9V490h1V489h3V487h2V486h2V485h3V484h1V485h1V484h4V485h1V484h1V485h2V484h1V485h7V484h3V483h1V484h1V483h1V484h1V483h6V484h1V483h1V484h4V485h4V486h2V487h2V488h2V489h2V490h2V491h2V492h1V493h3V494h2V495h3V494h1V495h4V494h6V493h2V494h1V493h5V492h1V493h1V492h7V491h1V492h1V491h5V490h7V489h3V488h4V487h3V486h7V485h3V486h3V485h9V486h3V487h3V488h3V489h1V490h2V491h1V492h3V493h1V494h6V495h4V496h5V497h2V496h1V497h4V498h2V497h1V498h6V497h2V496h1V497h1V496h2V495h2V496h1V495h7V496h1V495h2V496h12V497h1V496h3V497h1V496h4V497h5V498h2V497h2V498h3V499h2V498h1V499h1V498h1V499h10V500h1V499h3V500h1V499h1V500h1V499h1V500h3V499h3V500h3V498h2V496h1V495h1V494h1V492h1V494h1V491h2V493h1V489h1V488h3V486h1V488h1V489h1V485h1V486h1V484h1V485h1V486h1V485h2V484h1V488h1V484h1V489h1V485h1V487h1V488h1V490h1V489h2V487h1V486h1V490h1V486h1V489h1V486h1V489h1V486h1V488h1V486h2V485h1V487h1V488h2V486h1V485h1V487h2V486h1V484h1V485h1V486h3V483h1V503ZM717 503V504h4V505h5V506h7V507h7V508h8V509h6V510h1V509h1V510h3V509h1V510h1V509h1V510h1V509h3V510h2V509h1V510h8V511h3V512h3V513h3V514h1V515h3V516h1V517h2V518h2V519h1V518h1V519h4V520h9V519h1V518h1V519h1V518h5V517h3V516h2V515h2V514h5V515h2V514h1V515h1V514h4V515h1V514h2V513h1V514h1V513h4V512h22V513h5V514h7V515h2V514h3V515h9V516h4V517h1V516h1V517h1V518h1V517h1V518h7V517h1V518h1V517h7V516h6V515h3V514h1V515h2V514h1V515h2V516h2V517h2V518h13V519h1V518h5V517h3V518h2V517h10V518h1V517h1V518h2V517h1V518h1V517h1V518h1V517h11V516h3V515h5V514h3V515h6V516h3V515h1V516h2V517h2V518h2V519h3V518h6V517h5V516h1V517h1V516h1V517h1V516h11V515h1V516h10V517h3V518h2V517h1V518h4V517h1V516h1V517h1V516h2V515h3V514h7V513h4V512h11V513h10V514h2V515h2V514h1V515h2V516h1V515h1V516h2V517h2V518h2V519h3V520h2V521h2V522h6V523h1V522h2V523h1V522h1V523h2V522h2V521h4V520h1V519h3V518h2V517h3V516h2V515h3V514h1V513h2V512h2V511h1V510h3V509h2V508h8V507h3V508h1V507h5V508h1V507h2V508h7V509h2V508h1V509h2V510h1V509h1V510h5V511h3V510h1V511h3V510h1V511h1V510h1V511h4V510h5V509h1V510h2V509h5V508h8V507h6V506h1V507h1V506h11V505h1V506h1V505h1V506h2V505h2V506h1V505h3V506h1V505h5V506h2V507h1V508h3V509h1V512h1V511h1V513h2V517h1V516h1V518h1V519h3V522h1V521h1V522h1V523h1V527h1V525h1V528h2V527h1V530h1V529h1V527h1V526h1V524h1V522h1V525h1V526h1V522h1V521h1V524h1V521h1V522h1V523h1V522h2V519h2V520h1V521h1V517h1V520h2V521h1V518h1V517h1V516h1V517h1V521h1V517h1V518h1V517h1V522h1V520h1V521h1V503Z" fill="#F30E0E" transform="translate(0 503.5) scale(1 0.46) translate(0 -503.5)"/><path d="M717 503V502h6V501h5V500h4V499h1V500h1V499h2V498h5V497h2V498h1V497h2V496h8V495h7V494h1V495h2V494h1V495h1V494h10V493h1V492h2V491h1V490h2V489h2V488h4V487h5V486h5V487h2V486h1V487h1V486h1V487h4V488h1V487h1V488h2V489h1V488h1V489h3V490h4V489h1V488h1V487h2V486h2V485h1V484h6V485h1V484h1V485h2V484h1V485h2V486h1V487h2V488h2V489h2V490h1V491h9V492h1V491h2V492h1V491h4V490h3V489h1V490h1V489h3V488h3V487h4V486h1V487h2V486h13V485h7V486h4V487h3V488h3V489h2V490h2V491h2V492h3V493h2V492h7V491h2V490h1V489h2V488h1V487h2V486h1V485h1V484h4V483h2V484h1V483h4V482h1V483h1V482h2V483h1V482h6V483h1V482h4V483h1V482h1V483h1V482h1V483h4V484h2V485h2V486h3V487h2V488h3V489h4V490h2V491h3V492h1V491h9V490h1V489h3V487h2V486h2V485h3V484h1V485h1V484h4V485h1V484h1V485h2V484h1V485h7V484h3V483h1V484h1V483h1V484h1V483h6V484h1V483h1V484h4V485h4V486h2V487h2V488h2V489h2V490h2V491h2V492h1V493h3V494h2V495h3V494h1V495h4V494h6V493h2V494h1V493h5V492h1V493h1V492h7V491h1V492h1V491h5V490h7V489h3V488h4V487h3V486h7V485h3V486h3V485h9V486h3V487h3V488h3V489h1V490h2V491h1V492h3V493h1V494h6V495h4V496h5V497h2V496h1V497h4V498h2V497h1V498h6V497h2V496h1V497h1V496h2V495h2V496h1V495h7V496h1V495h2V496h12V497h1V496h3V497h1V496h4V497h5V498h2V497h2V498h3V499h2V498h1V499h1V498h1V499h10V500h1V499h3V500h1V499h1V500h1V499h1V500h3V499h3V500h3V498h2V496h1V495h1V494h1V492h1V494h1V491h2V493h1V489h1V488h3V486h1V488h1V489h1V485h1V486h1V484h1V485h1V486h1V485h2V484h1V488h1V484h1V489h1V485h1V487h1V488h1V490h1V489h2V487h1V486h1V490h1V486h1V489h1V486h1V489h1V486h1V488h1V486h2V485h1V487h1V488h2V486h1V485h1V487h2V486h1V484h1V485h1V486h3V483h1V503ZM717 503V504h4V505h5V506h7V507h7V508h8V509h6V510h1V509h1V510h3V509h1V510h1V509h1V510h1V509h3V510h2V509h1V510h8V511h3V512h3V513h3V514h1V515h3V516h1V517h2V518h2V519h1V518h1V519h4V520h9V519h1V518h1V519h1V518h5V517h3V516h2V515h2V514h5V515h2V514h1V515h1V514h4V515h1V514h2V513h1V514h1V513h4V512h22V513h5V514h7V515h2V514h3V515h9V516h4V517h1V516h1V517h1V518h1V517h1V518h7V517h1V518h1V517h7V516h6V515h3V514h1V515h2V514h1V515h2V516h2V517h2V518h13V519h1V518h5V517h3V518h2V517h10V518h1V517h1V518h2V517h1V518h1V517h1V518h1V517h11V516h3V515h5V514h3V515h6V516h3V515h1V516h2V517h2V518h2V519h3V518h6V517h5V516h1V517h1V516h1V517h1V516h11V515h1V516h10V517h3V518h2V517h1V518h4V517h1V516h1V517h1V516h2V515h3V514h7V513h4V512h11V513h10V514h2V515h2V514h1V515h2V516h1V515h1V516h2V517h2V518h2V519h3V520h2V521h2V522h6V523h1V522h2V523h1V522h1V523h2V522h2V521h4V520h1V519h3V518h2V517h3V516h2V515h3V514h1V513h2V512h2V511h1V510h3V509h2V508h8V507h3V508h1V507h5V508h1V507h2V508h7V509h2V508h1V509h2V510h1V509h1V510h5V511h3V510h1V511h3V510h1V511h1V510h1V511h4V510h5V509h1V510h2V509h5V508h8V507h6V506h1V507h1V506h11V505h1V506h1V505h1V506h2V505h2V506h1V505h3V506h1V505h5V506h2V507h1V508h3V509h1V512h1V511h1V513h2V517h1V516h1V518h1V519h3V522h1V521h1V522h1V523h1V527h1V525h1V528h2V527h1V530h1V529h1V527h1V526h1V524h1V522h1V525h1V526h1V522h1V521h1V524h1V521h1V522h1V523h1V522h2V519h2V520h1V521h1V517h1V520h2V521h1V518h1V517h1V516h1V517h1V521h1V517h1V518h1V517h1V522h1V520h1V521h1V503Z" fill="#EB0808" transform="translate(0 503.5) scale(1 0.32) translate(0 -503.5)"/><path d="M717 503V502h6V501h5V500h4V499h1V500h1V499h2V498h5V497h2V498h1V497h2V496h8V495h7V494h1V495h2V494h1V495h1V494h10V493h1V492h2V491h1V490h2V489h2V488h4V487h5V486h5V487h2V486h1V487h1V486h1V487h4V488h1V487h1V488h2V489h1V488h1V489h3V490h4V489h1V488h1V487h2V486h2V485h1V484h6V485h1V484h1V485h2V484h1V485h2V486h1V487h2V488h2V489h2V490h1V491h9V492h1V491h2V492h1V491h4V490h3V489h1V490h1V489h3V488h3V487h4V486h1V487h2V486h13V485h7V486h4V487h3V488h3V489h2V490h2V491h2V492h3V493h2V492h7V491h2V490h1V489h2V488h1V487h2V486h1V485h1V484h4V483h2V484h1V483h4V482h1V483h1V482h2V483h1V482h6V483h1V482h4V483h1V482h1V483h1V482h1V483h4V484h2V485h2V486h3V487h2V488h3V489h4V490h2V491h3V492h1V491h9V490h1V489h3V487h2V486h2V485h3V484h1V485h1V484h4V485h1V484h1V485h2V484h1V485h7V484h3V483h1V484h1V483h1V484h1V483h6V484h1V483h1V484h4V485h4V486h2V487h2V488h2V489h2V490h2V491h2V492h1V493h3V494h2V495h3V494h1V495h4V494h6V493h2V494h1V493h5V492h1V493h1V492h7V491h1V492h1V491h5V490h7V489h3V488h4V487h3V486h7V485h3V486h3V485h9V486h3V487h3V488h3V489h1V490h2V491h1V492h3V493h1V494h6V495h4V496h5V497h2V496h1V497h4V498h2V497h1V498h6V497h2V496h1V497h1V496h2V495h2V496h1V495h7V496h1V495h2V496h12V497h1V496h3V497h1V496h4V497h5V498h2V497h2V498h3V499h2V498h1V499h1V498h1V499h10V500h1V499h3V500h1V499h1V500h1V499h1V500h3V499h3V500h3V498h2V496h1V495h1V494h1V492h1V494h1V491h2V493h1V489h1V488h3V486h1V488h1V489h1V485h1V486h1V484h1V485h1V486h1V485h2V484h1V488h1V484h1V489h1V485h1V487h1V488h1V490h1V489h2V487h1V486h1V490h1V486h1V489h1V486h1V489h1V486h1V488h1V486h2V485h1V487h1V488h2V486h1V485h1V487h2V486h1V484h1V485h1V486h3V483h1V503ZM717 503V504h4V505h5V506h7V507h7V508h8V509h6V510h1V509h1V510h3V509h1V510h1V509h1V510h1V509h3V510h2V509h1V510h8V511h3V512h3V513h3V514h1V515h3V516h1V517h2V518h2V519h1V518h1V519h4V520h9V519h1V518h1V519h1V518h5V517h3V516h2V515h2V514h5V515h2V514h1V515h1V514h4V515h1V514h2V513h1V514h1V513h4V512h22V513h5V514h7V515h2V514h3V515h9V516h4V517h1V516h1V517h1V518h1V517h1V518h7V517h1V518h1V517h7V516h6V515h3V514h1V515h2V514h1V515h2V516h2V517h2V518h13V519h1V518h5V517h3V518h2V517h10V518h1V517h1V518h2V517h1V518h1V517h1V518h1V517h11V516h3V515h5V514h3V515h6V516h3V515h1V516h2V517h2V518h2V519h3V518h6V517h5V516h1V517h1V516h1V517h1V516h11V515h1V516h10V517h3V518h2V517h1V518h4V517h1V516h1V517h1V516h2V515h3V514h7V513h4V512h11V513h10V514h2V515h2V514h1V515h2V516h1V515h1V516h2V517h2V518h2V519h3V520h2V521h2V522h6V523h1V522h2V523h1V522h1V523h2V522h2V521h4V520h1V519h3V518h2V517h3V516h2V515h3V514h1V513h2V512h2V511h1V510h3V509h2V508h8V507h3V508h1V507h5V508h1V507h2V508h7V509h2V508h1V509h2V510h1V509h1V510h5V511h3V510h1V511h3V510h1V511h1V510h1V511h4V510h5V509h1V510h2V509h5V508h8V507h6V506h1V507h1V506h11V505h1V506h1V505h1V506h2V505h2V506h1V505h3V506h1V505h5V506h2V507h1V508h3V509h1V512h1V511h1V513h2V517h1V516h1V518h1V519h3V522h1V521h1V522h1V523h1V527h1V525h1V528h2V527h1V530h1V529h1V527h1V526h1V524h1V522h1V525h1V526h1V522h1V521h1V524h1V521h1V522h1V523h1V522h2V519h2V520h1V521h1V517h1V520h2V521h1V518h1V517h1V516h1V517h1V521h1V517h1V518h1V517h1V522h1V520h1V521h1V503Z" fill="#E10303" transform="translate(0 503.5) scale(1 0.19) translate(0 -503.5)"/><path d="M717 503V502h6V501h5V500h4V499h1V500h1V499h2V498h5V497h2V498h1V497h2V496h8V495h7V494h1V495h2V494h1V495h1V494h10V493h1V492h2V491h1V490h2V489h2V488h4V487h5V486h5V487h2V486h1V487h1V486h1V487h4V488h1V487h1V488h2V489h1V488h1V489h3V490h4V489h1V488h1V487h2V486h2V485h1V484h6V485h1V484h1V485h2V484h1V485h2V486h1V487h2V488h2V489h2V490h1V491h9V492h1V491h2V492h1V491h4V490h3V489h1V490h1V489h3V488h3V487h4V486h1V487h2V486h13V485h7V486h4V487h3V488h3V489h2V490h2V491h2V492h3V493h2V492h7V491h2V490h1V489h2V488h1V487h2V486h1V485h1V484h4V483h2V484h1V483h4V482h1V483h1V482h2V483h1V482h6V483h1V482h4V483h1V482h1V483h1V482h1V483h4V484h2V485h2V486h3V487h2V488h3V489h4V490h2V491h3V492h1V491h9V490h1V489h3V487h2V486h2V485h3V484h1V485h1V484h4V485h1V484h1V485h2V484h1V485h7V484h3V483h1V484h1V483h1V484h1V483h6V484h1V483h1V484h4V485h4V486h2V487h2V488h2V489h2V490h2V491h2V492h1V493h3V494h2V495h3V494h1V495h4V494h6V493h2V494h1V493h5V492h1V493h1V492h7V491h1V492h1V491h5V490h7V489h3V488h4V487h3V486h7V485h3V486h3V485h9V486h3V487h3V488h3V489h1V490h2V491h1V492h3V493h1V494h6V495h4V496h5V497h2V496h1V497h4V498h2V497h1V498h6V497h2V496h1V497h1V496h2V495h2V496h1V495h7V496h1V495h2V496h12V497h1V496h3V497h1V496h4V497h5V498h2V497h2V498h3V499h2V498h1V499h1V498h1V499h10V500h1V499h3V500h1V499h1V500h1V499h1V500h3V499h3V500h3V498h2V496h1V495h1V494h1V492h1V494h1V491h2V493h1V489h1V488h3V486h1V488h1V489h1V485h1V486h1V484h1V485h1V486h1V485h2V484h1V488h1V484h1V489h1V485h1V487h1V488h1V490h1V489h2V487h1V486h1V490h1V486h1V489h1V486h1V489h1V486h1V488h1V486h2V485h1V487h1V488h2V486h1V485h1V487h2V486h1V484h1V485h1V486h3V483h1V503ZM717 503V504h4V505h5V506h7V507h7V508h8V509h6V510h1V509h1V510h3V509h1V510h1V509h1V510h1V509h3V510h2V509h1V510h8V511h3V512h3V513h3V514h1V515h3V516h1V517h2V518h2V519h1V518h1V519h4V520h9V519h1V518h1V519h1V518h5V517h3V516h2V515h2V514h5V515h2V514h1V515h1V514h4V515h1V514h2V513h1V514h1V513h4V512h22V513h5V514h7V515h2V514h3V515h9V516h4V517h1V516h1V517h1V518h1V517h1V518h7V517h1V518h1V517h7V516h6V515h3V514h1V515h2V514h1V515h2V516h2V517h2V518h13V519h1V518h5V517h3V518h2V517h10V518h1V517h1V518h2V517h1V518h1V517h1V518h1V517h11V516h3V515h5V514h3V515h6V516h3V515h1V516h2V517h2V518h2V519h3V518h6V517h5V516h1V517h1V516h1V517h1V516h11V515h1V516h10V517h3V518h2V517h1V518h4V517h1V516h1V517h1V516h2V515h3V514h7V513h4V512h11V513h10V514h2V515h2V514h1V515h2V516h1V515h1V516h2V517h2V518h2V519h3V520h2V521h2V522h6V523h1V522h2V523h1V522h1V523h2V522h2V521h4V520h1V519h3V518h2V517h3V516h2V515h3V514h1V513h2V512h2V511h1V510h3V509h2V508h8V507h3V508h1V507h5V508h1V507h2V508h7V509h2V508h1V509h2V510h1V509h1V510h5V511h3V510h1V511h3V510h1V511h1V510h1V511h4V510h5V509h1V510h2V509h5V508h8V507h6V506h1V507h1V506h11V505h1V506h1V505h1V506h2V505h2V506h1V505h3V506h1V505h5V506h2V507h1V508h3V509h1V512h1V511h1V513h2V517h1V516h1V518h1V519h3V522h1V521h1V522h1V523h1V527h1V525h1V528h2V527h1V530h1V529h1V527h1V526h1V524h1V522h1V525h1V526h1V522h1V521h1V524h1V521h1V522h1V523h1V522h2V519h2V520h1V521h1V517h1V520h2V521h1V518h1V517h1V516h1V517h1V521h1V517h1V518h1V517h1V522h1V520h1V521h1V503Z" fill="#D40000" transform="translate(0 503.5) scale(1 0.08) translate(0 -503.5)"/><path d="M18 261.5H1346" stroke="#E4DCE0" stroke-width="1" stroke-dasharray="3 3"/><path d="M18 503.5H1346" stroke="#E4DCE0" stroke-width="1" stroke-dasharray="3 3"/></svg>
<div style="left:18px;top:142px;width:60px;height:240px;overflow:hidden">
<div class="ax" style="left:5px;top:8px">0.4</div>
<div class="ax" style="left:5px;top:37px">0.3</div>
<div class="ax" style="left:5px;top:65px">0.2</div>
<div class="ax" style="left:5px;top:93px">0.1</div>
<div class="ax" style="left:5px;top:121px">0.0</div>
<div class="ax" style="left:5px;top:150px">-0.1</div>
<div class="ax" style="left:5px;top:178px">-0.2</div>
<div class="ax" style="left:5px;top:206px">-0.3</div>
<div class="ax" style="left:5px;top:235px">-0.4</div>
</div>
<div style="left:18px;top:384px;width:60px;height:240px;overflow:hidden">
<div class="ax" style="left:5px;top:8px">0.4</div>
<div class="ax" style="left:5px;top:37px">0.3</div>
<div class="ax" style="left:5px;top:65px">0.2</div>
<div class="ax" style="left:5px;top:93px">0.1</div>
<div class="ax" style="left:5px;top:121px">0.0</div>
<div class="ax" style="left:5px;top:150px">-0.1</div>
<div class="ax" style="left:5px;top:178px">-0.2</div>
<div class="ax" style="left:5px;top:206px">-0.3</div>
<div class="ax" style="left:5px;top:235px">-0.4</div>
</div>
<svg style="left:16px;top:379px;" width="8" height="9" viewBox="0 0 8 9"><path d="M1 2.2L7 5.4L1 8.6Z" fill="#fff"/><path d="M0 0.5L6 3.7L0 7Z" fill="#10E010"/></svg>
<div style="left:16px;top:634px;width:1330px;height:16px;background:#D4D0C8;"></div>
<div style="left:14px;top:650px;width:1335px;height:2px;background:#fff;"></div>
<svg style="left:0px;top:0px;shape-rendering:crispEdges" width="1366" height="768" viewBox="0 0 1366 768"><path d="M16 635v6M22 635v2M27 635v2M33 635v2M39 635v2M44 635v4M50 635v2M55 635v2M61 635v2M67 635v2M72 635v6M78 635v2M84 635v2M89 635v2M95 635v2M100 635v4M106 635v2M112 635v2M117 635v2M123 635v2M129 635v6M134 635v2M140 635v2M145 635v2M151 635v2M157 635v4M162 635v2M168 635v2M174 635v2M179 635v2M185 635v6M191 635v2M196 635v2M202 635v2M207 635v2M213 635v4M219 635v2M224 635v2M230 635v2M236 635v2M241 635v6M247 635v2M252 635v2M258 635v2M264 635v2M269 635v4M275 635v2M281 635v2M286 635v2M292 635v2M298 635v6M303 635v2M309 635v2M314 635v2M320 635v2M326 635v4M331 635v2M337 635v2M343 635v2M348 635v2M354 635v6M359 635v2M365 635v2M371 635v2M376 635v2M382 635v4M388 635v2M393 635v2M399 635v2M404 635v2M410 635v6M416 635v2M421 635v2M427 635v2M433 635v2M438 635v4M444 635v2M450 635v2M455 635v2M461 635v2M466 635v6M472 635v2M478 635v2M483 635v2M489 635v2M495 635v4M500 635v2M506 635v2M511 635v2M517 635v2M523 635v6M528 635v2M534 635v2M540 635v2M545 635v2M551 635v4M556 635v2M562 635v2M568 635v2M573 635v2M579 635v6M585 635v2M590 635v2M596 635v2M602 635v2M607 635v4M613 635v2M618 635v2M624 635v2M630 635v2M635 635v6M641 635v2M647 635v2M652 635v2M658 635v2M663 635v4M669 635v2M675 635v2M680 635v2M686 635v2M692 635v6M697 635v2M703 635v2M708 635v2M714 635v2M720 635v4M725 635v2M731 635v2M737 635v2M742 635v2M748 635v6M754 635v2M759 635v2M765 635v2M770 635v2M776 635v4M782 635v2M787 635v2M793 635v2M799 635v2M804 635v6M810 635v2M815 635v2M821 635v2M827 635v2M832 635v4M838 635v2M844 635v2M849 635v2M855 635v2M861 635v6M866 635v2M872 635v2M877 635v2M883 635v2M889 635v4M894 635v2M900 635v2M906 635v2M911 635v2M917 635v6M922 635v2M928 635v2M934 635v2M939 635v2M945 635v4M951 635v2M956 635v2M962 635v2M967 635v2M973 635v6M979 635v2M984 635v2M990 635v2M996 635v2M1001 635v4M1007 635v2M1013 635v2M1018 635v2M1024 635v2M1029 635v6M1035 635v2M1041 635v2M1046 635v2M1052 635v2M1058 635v4M1063 635v2M1069 635v2M1074 635v2M1080 635v2M1086 635v6M1091 635v2M1097 635v2M1103 635v2M1108 635v2M1114 635v4M1119 635v2M1125 635v2M1131 635v2M1136 635v2M1142 635v6M1148 635v2M1153 635v2M1159 635v2M1165 635v2M1170 635v4M1176 635v2M1181 635v2M1187 635v2M1193 635v2M1198 635v6M1204 635v2M1210 635v2M1215 635v2M1221 635v2M1226 635v4M1232 635v2M1238 635v2M1243 635v2M1249 635v2M1255 635v6M1260 635v2M1266 635v2M1271 635v2M1277 635v2M1283 635v4M1288 635v2M1294 635v2M1300 635v2M1305 635v2M1311 635v6M1317 635v2M1322 635v2M1328 635v2M1333 635v2M1339 635v4M1345 635v2" stroke="#000" stroke-width="1" transform="translate(.5 0)"/></svg>
<div class="rl" style="left:18px;top:639px;letter-spacing:0.1px">0:00.0</div>
<div class="rl" style="left:74px;top:639px;letter-spacing:0.1px">0:00.1</div>
<div class="rl" style="left:131px;top:639px;letter-spacing:0.1px">0:00.2</div>
<div class="rl" style="left:187px;top:639px;letter-spacing:0.1px">0:00.3</div>
<div class="rl" style="left:243px;top:639px;letter-spacing:0.1px">0:00.4</div>
<div class="rl" style="left:300px;top:639px;letter-spacing:0.1px">0:00.5</div>
<div class="rl" style="left:356px;top:639px;letter-spacing:0.1px">0:00.6</div>
<div class="rl" style="left:412px;top:639px;letter-spacing:0.1px">0:00.7</div>
<div class="rl" style="left:468px;top:639px;letter-spacing:0.1px">0:00.8</div>
<div class="rl" style="left:525px;top:639px;letter-spacing:0.1px">0:00.9</div>
<div class="rl" style="left:581px;top:639px;letter-spacing:0.1px">0:01.0</div>
<div class="rl" style="left:637px;top:639px;letter-spacing:0.1px">0:01.1</div>
<div class="rl" style="left:694px;top:639px;letter-spacing:0.1px">0:01.2</div>
<div class="rl" style="left:750px;top:639px;letter-spacing:0.1px">0:01.3</div>
<div class="rl" style="left:806px;top:639px;letter-spacing:0.1px">0:01.4</div>
<div class="rl" style="left:863px;top:639px;letter-spacing:0.1px">0:01.5</div>
<div class="rl" style="left:919px;top:639px;letter-spacing:0.1px">0:01.6</div>
<div class="rl" style="left:975px;top:639px;letter-spacing:0.1px">0:01.7</div>
<div class="rl" style="left:1031px;top:639px;letter-spacing:0.1px">0:01.8</div>
<div class="rl" style="left:1088px;top:639px;letter-spacing:0.1px">0:01.9</div>
<div class="rl" style="left:1144px;top:639px;letter-spacing:0.1px">0:02.0</div>
<div class="rl" style="left:1200px;top:639px;letter-spacing:0.1px">0:02.1</div>
<div class="rl" style="left:1257px;top:639px;letter-spacing:0.1px">0:02.2</div>
<div class="rl" style="left:1313px;top:639px;letter-spacing:0.1px">0:02.3</div>
<div style="left:14px;top:654px;width:1335px;height:2px;background:#808080;"></div>
<div style="left:14px;top:654px;width:2px;height:57px;background:#808080;"></div>
<div style="left:14px;top:711px;width:1335px;height:2px;background:#fff;"></div>
<div style="left:1346px;top:656px;width:2px;height:57px;background:#fff;"></div>
<div style="left:1348px;top:654px;width:1px;height:59px;background:#808080;"></div>
<svg style="left:0px;top:0px;shape-rendering:crispEdges" width="1366" height="768" viewBox="0 0 1366 768"><defs><linearGradient id="ob" x1="0" y1="0" x2="0" y2="1"><stop offset="0" stop-color="#000080"/><stop offset=".15" stop-color="#000080"/><stop offset=".27" stop-color="#2020A0"/><stop offset=".76" stop-color="#2020A0"/><stop offset=".88" stop-color="#000080"/><stop offset="1" stop-color="#000080"/></linearGradient></defs><rect x="16" y="656" width="1330" height="20" fill="url(#ob)"/><rect x="16" y="676" width="1330" height="20" fill="url(#ob)"/><path d="M19 665V664h21V662h2V663h3V664h2V663h1V662h1V663h2V664h1V663h4V664h1V663h1V664h1V663h3V662h4V660h1V662h5V660h1V662h1V661h1V663h4V662h3V663h4V664h2V663h2V661h1V664h3V663h2V662h1V663h2V662h3V663h1V662h7V663h1V662h2V663h4V664h2V663h3V661h1V663h2V664h4V663h4V661h1V663h1V661h1V662h1V663h1V662h1V663h5V664h2V663h1V664h1V663h1V664h1V662h1V664h2V663h1V662h1V663h1V662h1V664h2V663h1V664h4V663h2V661h1V662h1V661h1V662h2V660h1V663h2V661h1V663h2V664h1V663h4V662h1V663h3V662h2V663h1V662h1V663h2V662h1V663h3V662h1V663h2V662h3V663h5V662h1V663h1V662h1V663h2V661h1V663h3V662h1V663h2V664h1V663h1V662h1V663h1V662h1V663h1V662h3V660h1V662h14V663h3V664h1V663h4V662h1V664h1V663h5V660h1V661h2V663h2V664h1V663h1V664h2V663h6V661h1V663h1V662h1V664h1V662h2V664h1V661h1V663h1V664h1V661h1V663h7V662h5V661h1V663h7V664h3V663h2V664h1V663h1V664h1V662h2V663h1V664h4V663h1V664h3V663h1V664h3V663h1V664h3V663h3V662h2V661h1V663h3V661h1V662h1V663h5V661h2V663h1V662h2V661h1V663h1V662h7V663h1V662h4V660h1V662h1V663h2V664h2V663h1V664h1V662h1V663h14V662h1V663h2V662h11V660h2V662h2V663h1V662h2V663h3V660h1V661h1V663h2V662h1V663h2V662h1V663h4V662h1V663h4V662h4V661h1V662h7V661h1V663h1V662h4V663h1V660h2V662h1V661h1V663h2V662h1V661h1V663h6V664h1V663h1V662h2V663h2V662h1V663h2V661h1V663h2V662h1V664h4V663h4V662h1V661h1V663h1V664h1V663h1V664h4V663h1V664h1V662h1V663h1V662h5V663h3V664h1V663h1V661h1V663h6V662h3V661h3V662h5V661h1V662h6V663h3V661h1V662h1V663h3V662h2V663h2V661h1V662h1V663h1V662h1V663h1V664h4V663h2V662h5V663h1V662h3V663h4V661h1V662h4V661h1V662h1V660h1V662h14V663h8V661h1V663h2V662h3V663h1V661h1V662h1V663h4V664h1V663h2V662h1V660h1V663h2V662h3V663h2V662h2V663h2V664h2V663h4V662h4V663h1V661h1V662h2V663h2V661h1V663h2V662h1V663h1V662h4V663h1V662h2V661h1V660h1V662h2V663h3V664h2V663h1V664h2V663h1V662h1V664h1V663h1V664h4V663h1V664h2V663h4V662h1V663h1V662h1V663h2V661h1V663h6V661h1V662h1V663h1V662h1V663h2V661h1V662h1V663h2V662h1V663h2V664h1V663h1V662h1V663h2V662h1V663h2V662h1V663h2V661h1V662h3V663h1V662h2V663h5V661h1V663h2V664h3V663h1V664h1V662h1V663h7V662h1V663h1V662h1V660h1V663h1V662h1V663h1V662h2V661h1V662h1V663h1V662h1V663h2V664h2V663h1V664h1V663h2V664h1V663h1V662h1V663h1V664h2V662h1V663h1V664h1V663h5V662h1V661h1V662h3V663h1V662h4V663h1V664h1V663h2V662h1V663h1V662h1V663h1V662h4V661h1V662h2V663h1V662h3V663h1V661h1V662h1V661h1V662h1V663h1V662h1V663h2V662h4V660h1V662h2V663h1V662h3V660h1V662h2V660h1V662h7V660h1V662h1V663h1V662h7V661h1V662h4V661h1V662h1V663h1V662h2V661h1V663h2V662h3V661h1V662h2V663h1V662h1V663h2V664h1V662h2V663h1V661h1V663h1V662h8V663h1V662h1V663h4V662h1V664h2V663h6V664h1V661h1V663h2V662h2V663h1V662h1V660h1V662h2V663h1V662h1V663h3V662h2V661h1V660h1V662h3V663h1V662h2V663h6V664h1V663h3V664h1V662h1V663h7V662h1V663h1V662h1V663h2V662h7V660h1V662h2V663h2V662h3V663h8V664h1V663h3V662h2V660h1V662h3V661h1V662h2V663h10V664h1V663h3V662h1V663h1V662h1V663h3V662h1V661h1V662h1V661h1V662h5V663h1V661h1V663h2V662h7V663h1V662h5V661h1V663h1V662h1V663h2V664h1V662h1V664h1V663h1V664h1V661h1V663h2V661h1V663h2V664h2V663h1V661h1V663h1V662h1V661h1V662h1V663h2V664h3V662h1V664h5V663h1V664h4V663h1V664h1V663h1V664h11V662h1V664h3V663h6V662h5V663h1V662h4V660h1V662h4V663h1V664h1V663h2V664h2V663h1V664h2V661h1V663h1V664h1V663h1V662h6V663h3V662h1V663h1V662h10V663h1V661h1V663h5V661h1V662h1V663h3V662h2V663h2V662h1V663h1V661h2V663h2V664h3V663h4V664h1V661h1V663h3V664h2V663h1V664h2V663h2V662h1V663h1V662h3V661h1V662h3V663h2V662h2V663h1V662h6V660h1V662h4V661h1V662h2V661h1V662h6V663h1V662h1V663h2V661h1V662h2V663h1V662h3V661h1V662h3V663h1V661h1V662h1V661h1V662h11V663h4V664h1V663h2V662h2V663h1V662h1V661h1V662h3V661h2V663h4V664h1V662h1V663h7V664h62V665ZM19 665V666h12V667h1V666h3V667h1V666h4V668h3V667h3V666h1V667h1V668h1V667h4V666h1V667h1V666h1V667h1V666h1V667h4V668h4V671h1V668h2V669h1V668h1V669h1V670h1V668h1V669h1V668h2V667h2V668h4V667h3V666h1V667h3V668h1V666h3V667h2V668h11V669h1V668h2V667h2V668h1V667h9V669h1V667h2V666h1V667h7V669h1V668h3V667h1V668h1V667h5V666h2V667h1V666h3V669h1V666h1V667h2V668h1V667h1V669h1V667h3V666h3V667h3V669h1V668h1V669h1V668h2V670h1V667h2V670h1V667h7V668h2V667h2V668h1V667h2V668h1V667h1V668h1V669h1V667h6V668h4V667h2V668h1V667h2V668h2V667h2V668h1V667h3V668h1V667h2V666h1V667h2V668h1V667h1V668h4V669h1V668h4V669h1V668h10V667h4V666h1V667h1V666h1V669h1V666h1V667h5V670h1V669h2V667h8V668h1V667h3V669h1V667h1V669h1V667h1V668h2V666h1V669h1V667h2V668h1V667h2V668h1V667h4V668h5V670h1V667h1V668h1V667h2V666h1V667h2V666h1V667h2V668h1V667h2V666h2V669h1V668h1V667h1V666h1V667h1V666h2V667h2V666h2V667h5V666h1V667h1V666h1V667h2V668h3V669h1V668h1V667h2V669h1V668h1V667h5V670h1V669h1V667h1V668h2V670h1V667h1V668h2V669h1V668h4V667h1V668h4V670h1V668h1V667h1V668h1V667h3V666h1V668h1V666h1V668h2V667h6V668h1V667h4V668h1V667h2V668h3V669h2V668h2V669h1V668h1V669h2V670h2V668h1V667h2V668h4V667h1V670h1V668h1V667h4V668h9V667h2V668h2V669h1V668h1V669h1V668h2V669h1V668h4V669h1V667h1V668h5V670h1V671h1V668h3V667h1V668h1V669h1V667h2V668h1V667h6V668h2V667h1V668h2V667h1V669h1V667h1V668h1V669h1V666h1V667h2V666h1V667h4V668h1V669h1V667h1V666h1V667h4V666h1V667h2V669h1V667h1V668h6V667h3V666h1V669h1V667h1V668h1V666h1V667h1V668h5V669h2V670h1V669h1V668h1V667h1V668h2V669h1V668h5V669h1V667h3V668h1V667h3V668h3V667h2V669h1V668h1V667h1V668h1V667h1V666h1V667h4V668h5V667h2V668h2V667h4V668h1V669h1V668h3V667h1V670h1V668h1V670h1V668h14V667h8V669h1V667h2V668h4V669h1V668h1V667h3V666h1V667h3V668h1V670h1V667h2V668h3V667h1V668h1V669h2V667h2V666h2V667h4V668h5V669h1V668h2V667h2V669h1V668h4V669h1V668h6V670h2V668h4V667h2V666h1V667h4V668h1V667h3V666h1V667h1V666h1V667h1V666h1V667h5V668h1V667h1V668h3V670h1V667h1V668h1V667h2V668h1V667h1V669h1V668h1V667h1V668h1V667h2V669h1V668h5V667h3V668h1V667h2V668h1V667h1V668h1V667h2V668h1V669h1V668h3V667h1V668h2V667h1V666h1V667h3V669h1V667h1V668h1V666h1V667h1V666h1V667h1V666h1V669h1V667h6V668h2V667h1V668h1V670h1V667h1V669h1V667h2V668h1V669h2V668h3V667h4V666h1V667h4V668h1V667h1V666h2V668h1V667h5V668h3V670h1V668h3V667h1V668h2V667h1V668h1V667h1V666h1V668h1V667h1V668h1V667h2V668h3V667h1V668h1V670h1V669h1V668h1V667h1V668h1V669h1V668h3V667h1V669h1V668h1V667h1V668h1V667h1V668h5V670h1V668h1V669h1V668h4V670h1V668h2V670h1V668h3V669h1V668h3V670h1V668h5V669h1V668h3V669h1V668h4V669h1V668h4V669h1V667h1V668h1V667h1V668h2V669h1V668h5V666h2V668h2V667h1V669h1V668h6V669h1V667h1V668h4V667h3V668h1V666h2V667h6V666h1V669h1V668h1V667h1V668h3V667h1V670h1V668h3V667h4V668h1V667h1V670h2V668h6V667h2V668h1V667h7V666h1V668h1V667h3V668h1V667h3V668h3V667h2V668h3V667h1V668h3V670h1V668h2V667h1V668h4V667h5V666h1V667h2V666h1V667h2V668h3V669h1V668h1V669h1V667h1V669h1V668h3V667h12V668h6V667h1V668h1V669h1V667h1V669h2V668h2V667h1V669h1V667h1V670h1V667h2V668h13V670h1V668h2V667h2V666h1V668h1V666h1V667h2V669h1V667h1V668h1V669h1V668h1V667h4V669h1V667h2V670h1V669h1V668h1V667h1V666h1V667h1V666h1V667h1V666h2V667h5V666h1V667h1V666h1V668h1V667h2V666h1V667h2V666h3V667h1V666h1V667h3V669h1V666h2V667h8V668h9V670h1V668h4V667h8V666h1V669h1V667h1V666h1V668h1V667h1V668h6V667h1V668h10V669h1V668h3V669h1V667h2V668h1V667h2V669h1V668h7V667h1V668h2V669h2V667h4V666h2V667h1V668h1V666h1V667h1V669h1V667h3V666h1V667h1V666h1V667h4V669h1V668h1V667h1V668h2V669h1V668h14V670h1V668h2V669h1V668h1V670h1V668h2V669h2V668h2V669h1V668h1V669h1V668h1V667h1V668h1V667h1V669h1V668h4V669h1V668h1V670h1V668h4V669h1V668h1V669h1V668h4V669h1V668h4V669h1V668h3V666h3V667h1V668h1V667h1V668h2V667h1V670h1V668h1V667h1V668h1V669h1V670h1V668h2V667h2V666h1V668h1V667h1V668h2V667h3V666h1V667h1V666h61V665Z" fill="#00FF00"/><path d="M19 685V684h21V683h3V681h1V683h2V682h1V683h1V682h3V683h2V682h1V683h2V682h1V681h1V683h1V682h15V681h1V683h1V681h1V683h2V681h1V683h2V682h7V683h2V682h1V683h2V682h2V680h1V682h4V683h1V682h12V683h1V682h3V683h5V682h1V681h1V682h3V680h1V681h1V682h11V683h1V682h7V684h1V683h1V684h1V683h3V682h1V684h3V683h6V682h1V683h1V681h1V683h5V682h8V683h1V682h1V680h1V682h1V681h1V683h4V681h1V682h1V680h1V682h2V681h1V682h1V683h1V682h4V681h1V683h3V684h1V683h1V684h3V683h3V684h1V683h4V682h1V683h1V684h3V683h3V684h2V683h1V682h1V681h1V684h1V683h7V682h1V683h4V684h1V683h4V684h2V682h1V683h2V682h3V683h1V682h1V683h1V680h1V682h2V683h3V682h1V683h6V682h2V683h1V682h1V681h1V683h5V684h3V683h1V684h1V683h2V682h1V683h4V682h1V681h1V683h5V684h1V683h1V682h1V683h7V684h1V682h1V683h3V684h1V683h1V684h1V681h1V683h1V684h1V683h7V682h5V683h3V684h1V682h1V683h1V684h3V682h1V683h1V681h1V684h2V683h8V682h10V683h1V682h1V683h11V682h2V683h2V682h3V683h3V681h1V684h2V682h1V684h4V683h1V682h2V684h1V683h3V684h6V683h1V684h3V683h1V684h1V683h1V684h2V682h2V683h1V684h4V683h3V682h1V683h1V684h2V683h1V682h1V683h2V682h1V681h1V683h1V684h1V683h2V682h2V683h1V681h1V683h1V682h3V683h3V682h2V680h1V683h1V682h1V681h1V682h4V683h1V682h4V683h1V682h1V681h1V682h5V683h5V682h1V683h1V684h1V683h1V684h2V683h7V682h1V683h7V681h1V682h1V680h1V682h1V683h1V682h1V683h1V682h7V683h4V682h1V683h2V682h2V684h2V683h3V684h3V683h1V684h1V683h5V682h13V683h2V682h4V683h1V682h1V683h1V682h1V683h1V682h1V683h10V682h2V680h1V682h4V683h3V684h2V683h1V684h1V683h1V684h2V683h1V684h3V683h1V684h1V683h1V684h7V683h2V684h2V681h1V683h3V684h1V683h2V684h2V683h3V682h2V681h1V682h1V683h1V681h1V682h4V681h1V682h3V683h1V682h6V681h1V683h1V682h1V681h1V682h4V683h1V682h10V683h2V682h1V683h3V682h2V681h1V682h2V683h4V684h1V683h3V682h1V683h3V682h3V683h1V682h5V681h1V682h3V683h1V682h1V683h1V684h1V683h3V681h2V682h1V683h1V682h2V683h1V682h3V683h3V684h1V683h6V682h14V681h1V682h1V683h1V682h1V681h1V682h3V683h1V681h1V683h1V682h1V683h1V684h3V682h1V683h2V681h1V683h1V684h1V682h1V683h1V684h2V683h1V684h3V682h1V683h2V684h2V683h1V684h1V682h1V684h2V683h4V682h1V680h1V683h2V681h1V684h1V683h5V681h1V684h2V683h2V682h1V683h1V682h3V681h1V682h1V683h1V682h3V683h1V682h7V680h1V682h6V683h1V680h1V682h1V683h5V684h1V683h1V684h1V683h2V684h5V683h1V684h1V683h3V682h1V683h1V682h2V683h1V682h1V681h1V682h1V683h1V682h1V683h1V682h13V680h1V682h7V683h4V682h1V683h1V681h1V683h1V682h1V683h7V684h1V683h1V684h1V683h1V682h1V683h1V684h2V683h1V684h1V683h1V681h1V683h6V682h1V683h4V684h1V683h1V684h1V683h1V684h2V683h2V684h1V683h2V682h2V681h1V683h2V682h2V683h1V681h1V683h1V684h3V683h3V682h1V683h1V684h2V683h3V681h1V682h1V683h1V681h1V682h2V683h1V682h6V683h2V682h1V684h5V683h2V684h1V682h1V683h1V684h4V683h1V684h2V683h2V684h2V681h1V684h2V683h5V682h1V683h2V681h1V683h12V682h3V681h1V682h3V681h1V682h1V681h1V682h2V683h1V682h2V683h2V680h1V682h4V681h1V682h2V683h2V682h1V683h1V684h2V683h4V682h1V683h2V682h5V683h2V684h1V683h3V681h1V683h1V680h1V683h2V682h1V683h2V682h1V683h3V682h1V683h1V681h1V683h2V684h2V683h10V684h1V683h1V684h3V683h1V684h1V682h1V683h3V684h2V683h1V684h3V683h1V684h4V683h1V684h1V683h2V682h1V683h1V682h1V683h2V684h4V683h4V682h1V683h1V684h2V682h1V684h2V683h4V684h1V683h3V682h6V683h1V681h1V683h2V682h1V683h1V682h1V681h1V682h1V683h1V682h4V683h10V681h1V683h1V682h3V683h2V681h1V683h2V681h1V683h1V682h4V683h3V681h1V682h1V684h1V683h1V684h4V683h3V684h1V683h2V684h4V683h1V681h1V683h2V684h3V683h5V684h6V683h2V682h1V681h1V682h8V683h1V682h3V683h3V682h1V681h1V683h1V682h1V683h2V684h1V683h2V684h1V683h1V684h1V683h1V682h1V680h1V682h1V680h1V682h3V683h4V684h2V683h2V682h1V683h1V682h6V683h3V684h3V683h1V684h50V685ZM19 685V686h13V687h1V686h7V687h1V688h1V687h1V689h1V687h1V688h2V687h1V688h1V689h1V688h1V687h1V688h2V687h2V688h1V689h1V688h4V689h1V688h7V689h1V688h3V690h1V687h1V689h1V687h1V688h2V687h2V688h3V689h1V688h2V689h1V688h2V687h3V688h2V690h1V688h2V689h2V687h1V688h5V689h1V688h10V687h3V688h3V689h1V688h3V690h1V689h1V688h6V689h1V688h2V689h1V688h1V687h1V688h6V689h1V687h2V686h1V687h3V688h1V687h1V686h1V687h2V688h2V687h2V688h1V689h1V688h1V689h1V688h1V687h3V688h8V687h1V688h2V690h1V688h1V689h1V688h2V687h2V690h1V688h1V690h1V688h2V690h1V688h6V689h1V687h5V686h1V687h1V686h2V687h1V688h1V686h1V687h2V688h1V687h1V688h1V687h2V686h2V687h2V686h2V687h2V688h2V687h1V688h1V687h5V688h3V687h10V688h2V687h1V688h5V687h1V690h1V688h2V687h1V688h3V687h1V688h1V687h2V688h1V687h1V688h2V687h2V689h1V687h2V686h1V687h2V686h2V687h2V686h1V687h4V688h1V687h2V688h1V689h1V687h2V688h1V687h1V688h1V687h2V688h1V687h1V688h3V687h4V688h1V687h3V686h2V687h1V689h1V687h1V686h1V687h2V688h1V687h3V688h3V689h1V688h1V689h1V688h1V687h2V686h1V688h1V687h1V686h2V687h1V688h1V686h1V690h1V686h1V687h1V688h1V687h6V688h13V687h3V688h1V687h1V688h2V687h3V688h5V687h2V688h2V687h1V686h1V689h1V686h1V687h1V688h1V686h1V687h4V688h2V687h4V686h3V687h3V688h1V687h1V686h1V687h2V686h1V687h1V686h1V687h1V688h2V687h1V686h1V687h1V686h2V687h1V686h1V687h1V689h1V687h1V686h1V687h2V689h1V687h1V688h1V687h1V689h1V687h4V688h3V690h1V687h1V689h1V687h1V688h1V687h2V688h1V687h1V688h1V689h1V687h1V688h1V690h1V688h4V687h1V688h2V689h1V688h2V687h1V689h2V688h1V689h1V688h2V687h1V688h1V687h1V688h1V687h1V688h1V687h1V686h1V687h2V686h1V687h3V686h1V687h3V688h2V687h6V690h1V688h1V690h1V688h3V687h1V688h2V689h1V688h1V687h1V688h1V687h2V688h1V687h5V689h1V688h1V686h1V687h1V688h1V687h1V686h2V687h1V686h1V687h6V688h4V689h1V688h7V687h1V688h1V687h2V688h6V687h1V689h1V687h1V688h1V687h2V688h1V687h5V688h4V690h1V689h1V688h5V687h1V686h2V687h1V686h3V687h2V686h2V687h2V686h1V687h1V686h2V687h2V686h2V687h1V686h1V687h3V690h1V687h1V688h1V687h2V686h4V687h2V688h3V689h1V688h1V687h1V689h1V688h4V689h1V688h6V687h1V688h3V689h1V688h1V689h1V690h1V688h4V687h1V688h4V689h1V688h3V687h4V688h1V687h2V688h3V689h1V688h2V687h4V686h1V687h2V688h1V687h1V688h1V687h1V688h7V689h1V688h1V689h2V688h3V687h1V688h1V687h5V689h1V690h1V688h9V687h2V686h1V687h1V688h1V687h2V688h7V689h1V688h4V689h1V688h3V689h2V688h2V690h1V688h4V689h1V688h3V687h1V686h1V687h1V688h1V687h2V689h1V688h1V686h1V688h1V687h2V686h5V688h1V686h1V687h2V686h1V687h1V686h1V688h1V687h1V686h1V687h4V688h1V690h1V687h2V689h1V686h1V687h5V689h1V687h2V686h1V687h1V688h1V687h2V688h2V689h1V688h6V687h1V688h6V690h1V688h2V687h1V688h1V687h1V688h2V690h1V688h2V687h1V688h1V687h3V688h1V686h1V687h2V686h1V687h10V688h3V687h1V688h1V689h1V688h7V689h1V688h7V687h1V688h1V690h1V688h8V687h1V688h1V687h3V690h1V688h3V687h2V688h2V687h1V688h1V687h1V686h3V688h1V686h1V687h1V686h1V687h1V686h1V687h1V689h1V688h2V687h1V688h1V687h1V688h2V687h1V688h1V687h4V686h1V687h1V686h2V687h1V686h2V687h2V688h2V690h1V688h5V689h1V687h2V686h1V687h4V688h2V687h1V686h1V687h3V689h1V688h2V690h1V688h1V687h1V688h1V687h1V688h2V687h1V688h3V687h1V688h1V687h8V688h1V687h1V686h1V687h1V686h2V687h4V688h1V687h1V686h1V689h1V686h1V687h4V688h5V689h1V687h1V688h2V687h7V688h4V689h1V690h1V688h1V689h1V688h1V690h1V688h1V689h1V688h5V687h2V690h1V688h4V690h1V688h2V687h1V688h2V687h1V686h1V687h1V688h1V687h3V688h1V687h1V688h5V687h3V686h2V687h1V688h1V689h1V687h1V690h1V687h2V688h6V687h1V688h1V687h1V690h1V686h1V687h2V686h1V687h1V686h1V687h3V688h2V687h7V686h1V687h2V688h1V687h6V686h1V687h4V686h1V687h1V686h1V687h4V689h1V687h1V688h1V686h1V687h1V686h2V687h5V686h1V688h1V687h1V686h2V688h1V686h2V687h4V686h1V687h3V688h5V687h2V689h1V687h2V688h1V687h2V690h1V689h1V687h1V688h2V689h1V688h3V687h2V686h1V687h2V688h1V687h1V686h1V689h1V688h1V687h2V688h2V687h1V689h1V687h2V689h1V688h5V687h3V689h2V686h2V687h1V686h1V687h8V686h2V687h3V689h1V687h4V686h1V687h4V686h1V687h1V686h1V687h1V686h1V687h4V688h1V689h1V688h2V689h1V688h1V687h1V688h7V687h2V688h2V689h1V687h1V688h1V687h2V686h1V687h4V686h1V687h1V688h1V689h1V688h1V690h1V689h1V688h1V687h2V688h1V687h1V686h1V687h1V686h1V687h1V686h1V688h7V687h6V686h1V687h1V686h50V685Z" fill="#FF0000"/><rect x="16" y="656" width="1" height="40" fill="#00FFFF"/><rect x="1345" y="656" width="1" height="40" fill="#00FFFF"/><path d="M18 657H38.5V695H18Z" fill="none" stroke="#fff" stroke-width="2"/><rect x="39" y="656" width="1" height="40" fill="#E8E8F0"/></svg>
<svg style="left:16px;top:672px;" width="8" height="9" viewBox="0 0 8 9"><path d="M1 2.2L7 5.4L1 8.6Z" fill="#fff"/><path d="M0 0.5L6 3.7L0 7Z" fill="#10E010"/></svg>
<div style="left:16px;top:696px;width:1330px;height:15px;background:#D4D0C8;"></div>
<svg style="left:0px;top:0px;shape-rendering:crispEdges" width="1366" height="768" viewBox="0 0 1366 768"><path d="M16 697v6M26 697v2M35 697v2M45 697v2M54 697v2M64 697v6M74 697v2M83 697v2M93 697v2M103 697v2M112 697v6M122 697v2M131 697v2M141 697v2M151 697v2M160 697v6M170 697v2M180 697v2M189 697v2M199 697v2M208 697v6M218 697v2M228 697v2M237 697v2M247 697v2M257 697v6M266 697v2M276 697v2M285 697v2M295 697v2M305 697v6M314 697v2M324 697v2M333 697v2M343 697v2M353 697v6M362 697v2M372 697v2M382 697v2M391 697v2M401 697v6M410 697v2M420 697v2M430 697v2M439 697v2M449 697v6M459 697v2M468 697v2M478 697v2M487 697v2M497 697v6M507 697v2M516 697v2M526 697v2M536 697v2M545 697v6M555 697v2M564 697v2M574 697v2M584 697v2M593 697v6M603 697v2M612 697v2M622 697v2M632 697v2M641 697v6M651 697v2M661 697v2M670 697v2M680 697v2M689 697v6M699 697v2M709 697v2M718 697v2M728 697v2M738 697v6M747 697v2M757 697v2M766 697v2M776 697v2M786 697v6M795 697v2M805 697v2M815 697v2M824 697v2M834 697v6M843 697v2M853 697v2M863 697v2M872 697v2M882 697v6M891 697v2M901 697v2M911 697v2M920 697v2M930 697v6M940 697v2M949 697v2M959 697v2M968 697v2M978 697v6M988 697v2M997 697v2M1007 697v2M1017 697v2M1026 697v6M1036 697v2M1045 697v2M1055 697v2M1065 697v2M1074 697v6M1084 697v2M1093 697v2M1103 697v2M1113 697v2M1122 697v6M1132 697v2M1142 697v2M1151 697v2M1161 697v2M1170 697v6M1180 697v2M1190 697v2M1199 697v2M1209 697v2M1219 697v6M1228 697v2M1238 697v2M1247 697v2M1257 697v2M1267 697v6M1276 697v2M1286 697v2M1296 697v2M1305 697v2M1315 697v6M1324 697v2M1334 697v2M1344 697v2" stroke="#000" stroke-width="1" transform="translate(.5 0)"/></svg>
<div class="rs" style="left:18px;top:701px">0:00</div>
<div class="rs" style="left:66px;top:701px">0:05</div>
<div class="rs" style="left:114px;top:701px">0:10</div>
<div class="rs" style="left:162px;top:701px">0:15</div>
<div class="rs" style="left:210px;top:701px">0:20</div>
<div class="rs" style="left:259px;top:701px">0:25</div>
<div class="rs" style="left:307px;top:701px">0:30</div>
<div class="rs" style="left:355px;top:701px">0:35</div>
<div class="rs" style="left:403px;top:701px">0:40</div>
<div class="rs" style="left:451px;top:701px">0:45</div>
<div class="rs" style="left:499px;top:701px">0:50</div>
<div class="rs" style="left:547px;top:701px">0:55</div>
<div class="rs" style="left:595px;top:701px">1:00</div>
<div class="rs" style="left:643px;top:701px">1:05</div>
<div class="rs" style="left:691px;top:701px">1:10</div>
<div class="rs" style="left:740px;top:701px">1:15</div>
<div class="rs" style="left:788px;top:701px">1:20</div>
<div class="rs" style="left:836px;top:701px">1:25</div>
<div class="rs" style="left:884px;top:701px">1:30</div>
<div class="rs" style="left:932px;top:701px">1:35</div>
<div class="rs" style="left:980px;top:701px">1:40</div>
<div class="rs" style="left:1028px;top:701px">1:45</div>
<div class="rs" style="left:1076px;top:701px">1:50</div>
<div class="rs" style="left:1124px;top:701px">1:55</div>
<div class="rs" style="left:1172px;top:701px">2:00</div>
<div class="rs" style="left:1221px;top:701px">2:05</div>
<div class="rs" style="left:1269px;top:701px">2:10</div>
<div class="rs" style="left:1317px;top:701px">2:15</div>
<div class="trk" style="left:1349px;top:140px;width:17px;height:573px"></div>
<div class="sb" style="left:1349px;top:140px;width:17px;height:16px"></div>
<svg style="left:1353px;top:146px;" width="7" height="4" viewBox="0 0 7 4"><path d="M0 4L3.5 0.5L7 4Z" fill="#000"/></svg>
<div class="sb" style="left:1349px;top:697px;width:17px;height:16px"></div>
<svg style="left:1353px;top:703px;" width="7" height="4" viewBox="0 0 7 4"><path d="M0 0L3.5 3.5L7 0Z" fill="#000"/></svg>
<div class="sb" style="left:1349px;top:312px;width:17px;height:228px"></div>
<div style="left:0px;top:713px;width:1366px;height:1px;background:#808080;"></div>
<div class="trk" style="left:0;top:714px;width:1366px;height:16px"></div>
<div class="sb" style="left:0px;top:714px;width:16px;height:16px"></div>
<svg style="left:5px;top:718px;" width="4" height="7" viewBox="0 0 4 7"><path d="M4 0L0.5 3.5L4 7Z" fill="#000"/></svg>
<div class="sb" style="left:1350px;top:714px;width:16px;height:16px"></div>
<svg style="left:1356px;top:718px;" width="4" height="7" viewBox="0 0 4 7"><path d="M0 0L3.5 3.5L0 7Z" fill="#000"/></svg>
<div class="sb" style="left:16px;top:714px;width:23px;height:16px"></div>
<div class="sunk" style="left:0px;top:732px;width:70px;height:17px"></div>
<svg style="left:60px;top:739px;" width="7" height="4" viewBox="0 0 7 4"><path d="M0 0L3.5 3.5L7 0Z" fill="#000"/></svg>
<div class="lbl" style="left:0px;top:735px;width:62px">Stereo</div>
<div class="sunk" style="left:72px;top:732px;width:118px;height:17px"></div>
<svg style="left:180px;top:739px;" width="7" height="4" viewBox="0 0 7 4"><path d="M0 0L3.5 3.5L7 0Z" fill="#000"/></svg>
<div class="lbl" style="left:72px;top:735px;width:110px">2:18.237</div>
<div class="sunk" style="left:192px;top:732px;width:299px;height:17px"></div>
<svg style="left:481px;top:739px;" width="7" height="4" viewBox="0 0 7 4"><path d="M0 0L3.5 3.5L7 0Z" fill="#000"/></svg>
<div class="lbl" style="left:192px;top:735px;width:291px">0.000 to 2:18.237 (2:18.237)</div>
<div class="sunk" style="left:493px;top:732px;width:117px;height:17px"></div>
<div class="lbl" style="left:493px;top:735px;width:117px">1.229</div>
<div class="sunk" style="left:612px;top:732px;width:754px;height:17px"></div>
<div class="sunk" style="left:0px;top:751px;width:70px;height:17px"></div>
<div class="lbl" style="left:0px;top:754px;width:70px">Modified</div>
<div class="sunk" style="left:72px;top:751px;width:118px;height:17px"></div>
<svg style="left:180px;top:758px;" width="7" height="4" viewBox="0 0 7 4"><path d="M0 0L3.5 3.5L7 0Z" fill="#000"/></svg>
<div class="lbl" style="left:72px;top:754px;width:110px">2.361</div>
<div class="sunk" style="left:192px;top:751px;width:1174px;height:17px"></div>
<div class="t " style="left:194px;top:754px;letter-spacing:-0.1px">Wave PCM signed 16 bit, 44100 Hz, 1411 kbps, stereo</div></body></html>
